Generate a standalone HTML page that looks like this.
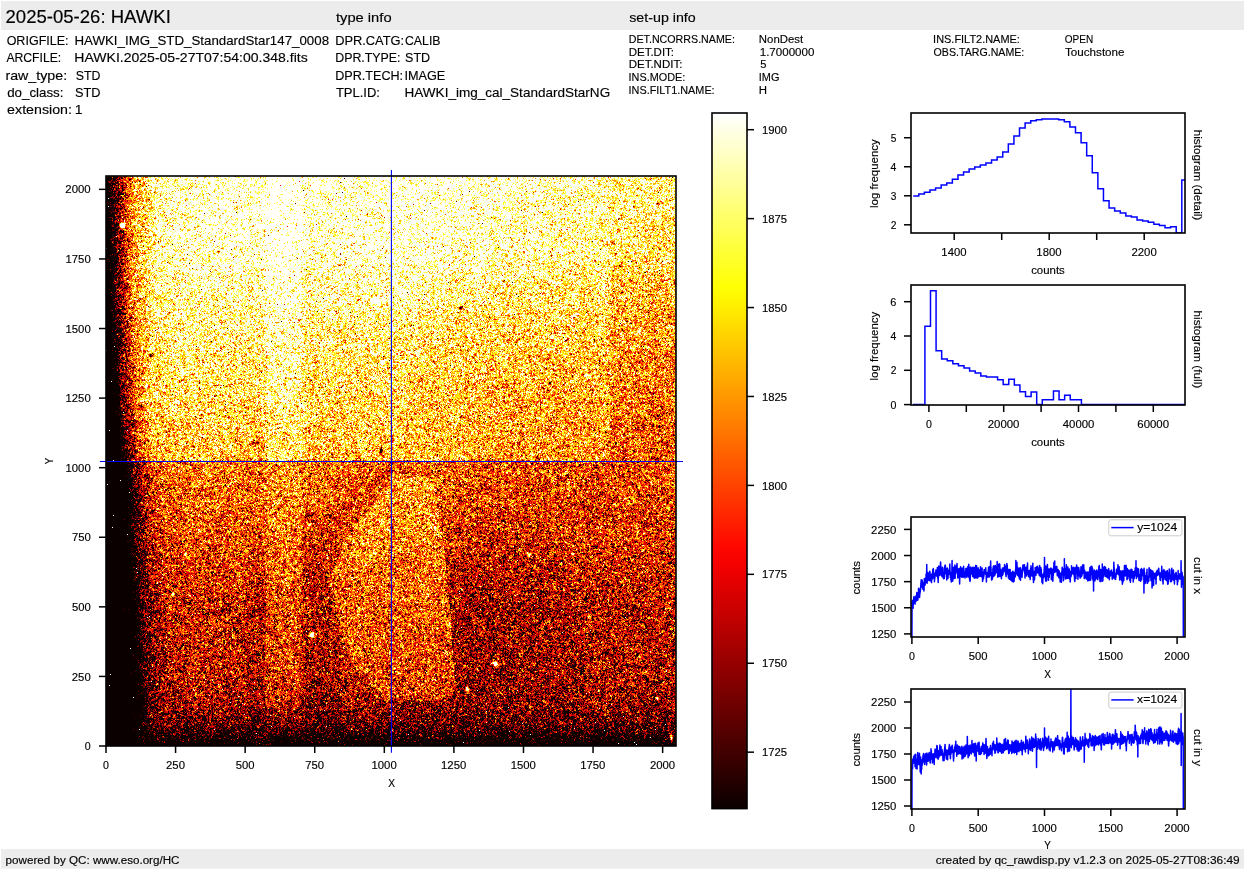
<!DOCTYPE html>
<html><head><meta charset="utf-8">
<style>
html,body{margin:0;padding:0;background:#fff;}
body{width:1245px;height:870px;position:relative;overflow:hidden;}
svg{position:absolute;left:0;top:0;}
text{font-family:"Liberation Sans", sans-serif;fill:#000;stroke:#000;stroke-width:0.15px;}
#img{position:absolute;left:106px;top:176px;width:570px;height:570px;background:linear-gradient(to right,#0b0000 0,#0b0000 16px,rgba(11,0,0,0) 50px),linear-gradient(to top,#0b0000 0,rgba(11,0,0,0) 45px),linear-gradient(to bottom,#fff2b0 0%,#ffe060 25%,#ffb030 50%,#f06018 50%,#c02800 75%,#500800 100%);}
</style></head><body>
<canvas id="img" width="570" height="570"></canvas>
<svg width="1245" height="870" viewBox="0 0 1245 870">
<rect x="1" y="1" width="1243" height="29" fill="#ececec"/>
<line x1="106.00" y1="746" x2="106.00" y2="753" stroke="#000" stroke-width="1.5"/>
<line x1="175.58" y1="746" x2="175.58" y2="753" stroke="#000" stroke-width="1.5"/>
<line x1="245.16" y1="746" x2="245.16" y2="753" stroke="#000" stroke-width="1.5"/>
<line x1="314.74" y1="746" x2="314.74" y2="753" stroke="#000" stroke-width="1.5"/>
<line x1="384.32" y1="746" x2="384.32" y2="753" stroke="#000" stroke-width="1.5"/>
<line x1="453.90" y1="746" x2="453.90" y2="753" stroke="#000" stroke-width="1.5"/>
<line x1="523.48" y1="746" x2="523.48" y2="753" stroke="#000" stroke-width="1.5"/>
<line x1="593.06" y1="746" x2="593.06" y2="753" stroke="#000" stroke-width="1.5"/>
<line x1="662.64" y1="746" x2="662.64" y2="753" stroke="#000" stroke-width="1.5"/>
<line x1="99" y1="746.00" x2="106" y2="746.00" stroke="#000" stroke-width="1.5"/>
<line x1="99" y1="676.42" x2="106" y2="676.42" stroke="#000" stroke-width="1.5"/>
<line x1="99" y1="606.84" x2="106" y2="606.84" stroke="#000" stroke-width="1.5"/>
<line x1="99" y1="537.26" x2="106" y2="537.26" stroke="#000" stroke-width="1.5"/>
<line x1="99" y1="467.68" x2="106" y2="467.68" stroke="#000" stroke-width="1.5"/>
<line x1="99" y1="398.10" x2="106" y2="398.10" stroke="#000" stroke-width="1.5"/>
<line x1="99" y1="328.52" x2="106" y2="328.52" stroke="#000" stroke-width="1.5"/>
<line x1="99" y1="258.94" x2="106" y2="258.94" stroke="#000" stroke-width="1.5"/>
<line x1="99" y1="189.36" x2="106" y2="189.36" stroke="#000" stroke-width="1.5"/>
<line x1="391.4" y1="170" x2="391.4" y2="752.7" stroke="#0000ff" stroke-width="1.1"/>
<line x1="99.9" y1="461.5" x2="683" y2="461.5" stroke="#0000ff" stroke-width="1.1"/>
<rect x="106" y="176" width="570" height="570" fill="none" stroke="#000" stroke-width="1.6"/>
<defs><linearGradient id="cb" x1="0" y1="0" x2="0" y2="1"><stop offset="0.000" stop-color="#ffffff"/><stop offset="0.025" stop-color="#ffffe6"/><stop offset="0.050" stop-color="#ffffcd"/><stop offset="0.075" stop-color="#ffffb4"/><stop offset="0.100" stop-color="#ffff9b"/><stop offset="0.125" stop-color="#ffff81"/><stop offset="0.150" stop-color="#ffff68"/><stop offset="0.175" stop-color="#ffff4f"/><stop offset="0.200" stop-color="#ffff36"/><stop offset="0.225" stop-color="#ffff1d"/><stop offset="0.250" stop-color="#ffff04"/><stop offset="0.275" stop-color="#fff100"/><stop offset="0.300" stop-color="#ffe000"/><stop offset="0.325" stop-color="#ffcf00"/><stop offset="0.350" stop-color="#ffbf00"/><stop offset="0.375" stop-color="#ffae00"/><stop offset="0.400" stop-color="#ff9d00"/><stop offset="0.425" stop-color="#ff8d00"/><stop offset="0.450" stop-color="#ff7c00"/><stop offset="0.475" stop-color="#ff6b00"/><stop offset="0.500" stop-color="#ff5a00"/><stop offset="0.525" stop-color="#ff4a00"/><stop offset="0.550" stop-color="#ff3900"/><stop offset="0.575" stop-color="#ff2800"/><stop offset="0.600" stop-color="#ff1700"/><stop offset="0.625" stop-color="#ff0700"/><stop offset="0.650" stop-color="#f50000"/><stop offset="0.675" stop-color="#e40000"/><stop offset="0.700" stop-color="#d30000"/><stop offset="0.725" stop-color="#c30000"/><stop offset="0.750" stop-color="#b20000"/><stop offset="0.775" stop-color="#a10000"/><stop offset="0.800" stop-color="#900000"/><stop offset="0.825" stop-color="#800000"/><stop offset="0.850" stop-color="#6f0000"/><stop offset="0.875" stop-color="#5e0000"/><stop offset="0.900" stop-color="#4e0000"/><stop offset="0.925" stop-color="#3d0000"/><stop offset="0.950" stop-color="#2c0000"/><stop offset="0.975" stop-color="#1b0000"/><stop offset="1.000" stop-color="#0b0000"/></linearGradient></defs>
<rect x="712" y="113" width="35" height="695.6" fill="url(#cb)"/>
<rect x="712" y="113" width="35" height="695.6" fill="none" stroke="#000" stroke-width="1.6"/>
<line x1="747" y1="129.70" x2="754" y2="129.70" stroke="#000" stroke-width="1.5"/>
<line x1="747" y1="218.62" x2="754" y2="218.62" stroke="#000" stroke-width="1.5"/>
<line x1="747" y1="307.55" x2="754" y2="307.55" stroke="#000" stroke-width="1.5"/>
<line x1="747" y1="396.47" x2="754" y2="396.47" stroke="#000" stroke-width="1.5"/>
<line x1="747" y1="485.40" x2="754" y2="485.40" stroke="#000" stroke-width="1.5"/>
<line x1="747" y1="574.33" x2="754" y2="574.33" stroke="#000" stroke-width="1.5"/>
<line x1="747" y1="663.25" x2="754" y2="663.25" stroke="#000" stroke-width="1.5"/>
<line x1="747" y1="752.17" x2="754" y2="752.17" stroke="#000" stroke-width="1.5"/>
<line x1="954.20" y1="233" x2="954.20" y2="240" stroke="#000" stroke-width="1.5"/>
<line x1="1001.70" y1="233" x2="1001.70" y2="240" stroke="#000" stroke-width="1.5"/>
<line x1="1049.20" y1="233" x2="1049.20" y2="240" stroke="#000" stroke-width="1.5"/>
<line x1="1096.70" y1="233" x2="1096.70" y2="240" stroke="#000" stroke-width="1.5"/>
<line x1="1144.20" y1="233" x2="1144.20" y2="240" stroke="#000" stroke-width="1.5"/>
<line x1="904" y1="224.80" x2="911" y2="224.80" stroke="#000" stroke-width="1.5"/>
<line x1="904" y1="195.78" x2="911" y2="195.78" stroke="#000" stroke-width="1.5"/>
<line x1="904" y1="166.76" x2="911" y2="166.76" stroke="#000" stroke-width="1.5"/>
<line x1="904" y1="137.74" x2="911" y2="137.74" stroke="#000" stroke-width="1.5"/>
<clipPath id="c1"><rect x="911" y="113" width="274" height="120"/></clipPath>
<path d="M913.20,195.90 L913.20,195.90 L918.80,195.90 L918.80,194.05 L924.39,194.05 L924.39,192.20 L929.99,192.20 L929.99,190.00 L935.58,190.00 L935.58,188.00 L941.18,188.00 L941.18,185.00 L946.78,185.00 L946.78,183.00 L952.37,183.00 L952.37,179.25 L957.97,179.25 L957.97,174.90 L963.56,174.90 L963.56,172.10 L969.16,172.10 L969.16,168.90 L974.76,168.90 L974.76,167.00 L980.35,167.00 L980.35,165.00 L985.95,165.00 L985.95,162.90 L991.54,162.90 L991.54,160.00 L997.14,160.00 L997.14,157.00 L1002.74,157.00 L1002.74,152.00 L1008.33,152.00 L1008.33,144.05 L1013.93,144.05 L1013.93,135.90 L1019.52,135.90 L1019.52,128.00 L1025.12,128.00 L1025.12,122.90 L1030.72,122.90 L1030.72,120.80 L1036.31,120.80 L1036.31,119.80 L1041.91,119.80 L1041.91,118.90 L1047.50,118.90 L1047.50,118.90 L1053.10,118.90 L1053.10,118.90 L1058.70,118.90 L1058.70,119.80 L1064.29,119.80 L1064.29,121.80 L1069.89,121.80 L1069.89,127.00 L1075.48,127.00 L1075.48,132.70 L1081.08,132.70 L1081.08,142.80 L1086.68,142.80 L1086.68,155.70 L1092.27,155.70 L1092.27,172.80 L1097.87,172.80 L1097.87,188.70 L1103.46,188.70 L1103.46,200.80 L1109.06,200.80 L1109.06,208.00 L1114.66,208.00 L1114.66,210.90 L1120.25,210.90 L1120.25,212.90 L1125.85,212.90 L1125.85,215.90 L1131.44,215.90 L1131.44,217.00 L1137.04,217.00 L1137.04,219.90 L1142.64,219.90 L1142.64,221.10 L1148.23,221.10 L1148.23,222.20 L1153.83,222.20 L1153.83,224.20 L1159.42,224.20 L1159.42,225.40 L1165.02,225.40 L1165.02,227.80 L1170.62,227.80 L1170.62,226.70 L1176.21,226.70 L1176.21,233.00 L1181.81,233.00 L1181.81,180.00 L1185.00,180.00" fill="none" stroke="#0000ff" stroke-width="1.5" clip-path="url(#c1)"/>
<rect x="911" y="113" width="274" height="120" fill="none" stroke="#000" stroke-width="1.6"/>
<line x1="928.90" y1="405" x2="928.90" y2="412" stroke="#000" stroke-width="1.5"/>
<line x1="966.30" y1="405" x2="966.30" y2="412" stroke="#000" stroke-width="1.5"/>
<line x1="1003.70" y1="405" x2="1003.70" y2="412" stroke="#000" stroke-width="1.5"/>
<line x1="1041.10" y1="405" x2="1041.10" y2="412" stroke="#000" stroke-width="1.5"/>
<line x1="1078.50" y1="405" x2="1078.50" y2="412" stroke="#000" stroke-width="1.5"/>
<line x1="1115.90" y1="405" x2="1115.90" y2="412" stroke="#000" stroke-width="1.5"/>
<line x1="1153.30" y1="405" x2="1153.30" y2="412" stroke="#000" stroke-width="1.5"/>
<line x1="904" y1="404.60" x2="911" y2="404.60" stroke="#000" stroke-width="1.5"/>
<line x1="904" y1="370.30" x2="911" y2="370.30" stroke="#000" stroke-width="1.5"/>
<line x1="904" y1="336.00" x2="911" y2="336.00" stroke="#000" stroke-width="1.5"/>
<line x1="904" y1="301.70" x2="911" y2="301.70" stroke="#000" stroke-width="1.5"/>
<path d="M913,404.6 L924.9,404.6 L924.90,326.20 L930.49,326.20 L930.49,290.80 L936.08,290.80 L936.08,350.70 L941.67,350.70 L941.67,358.95 L947.26,358.95 L947.26,360.80 L952.85,360.80 L952.85,363.80 L958.44,363.80 L958.44,365.80 L964.03,365.80 L964.03,367.90 L969.62,367.90 L969.62,370.90 L975.21,370.90 L975.21,372.90 L980.80,372.90 L980.80,376.00 L986.39,376.00 L986.39,377.10 L991.98,377.10 L991.98,377.10 L997.57,377.10 L997.57,379.70 L1003.16,379.70 L1003.16,384.50 L1008.75,384.50 L1008.75,379.30 L1014.34,379.30 L1014.34,384.90 L1019.93,384.90 L1019.93,391.70 L1025.52,391.70 L1025.52,396.50 L1031.11,396.50 L1031.11,392.10 L1036.70,392.10 L1036.70,404.60 L1042.29,404.60 L1042.29,399.80 L1047.88,399.80 L1047.88,399.80 L1053.47,399.80 L1053.47,390.90 L1059.06,390.90 L1059.06,399.80 L1064.65,399.80 L1064.65,395.30 L1070.24,395.30 L1070.24,399.80 L1075.83,399.80 L1075.83,399.80 L1081.42,399.80 L1081.42,404.6 L1185,404.6" fill="none" stroke="#0000ff" stroke-width="1.5"/>
<rect x="911" y="285" width="274" height="120" fill="none" stroke="#000" stroke-width="1.6"/>
<clipPath id="c3"><rect x="911" y="517" width="274" height="120"/></clipPath>
<clipPath id="c4"><rect x="911" y="689" width="274" height="120"/></clipPath>
<path d="M911.90,639.0 L912.03,601.1 L912.17,601.1 L912.30,604.3 L912.43,605.0 L912.56,604.7 L912.70,600.3 L912.83,602.8 L912.96,602.5 L913.09,608.3 L913.23,600.0 L913.36,604.4 L913.49,600.7 L913.62,600.7 L913.76,598.8 L913.89,596.9 L914.02,596.4 L914.15,599.6 L914.29,597.7 L914.42,598.8 L914.55,602.7 L914.68,602.0 L914.82,598.0 L914.95,602.4 L915.08,604.1 L915.22,600.2 L915.35,600.9 L915.48,601.0 L915.61,601.6 L915.75,598.1 L915.88,596.0 L916.01,598.4 L916.14,601.3 L916.28,599.8 L916.41,597.0 L916.54,597.8 L916.67,594.3 L916.81,592.6 L916.94,593.8 L917.07,597.5 L917.20,597.2 L917.34,596.8 L917.47,594.1 L917.60,600.3 L917.73,599.9 L917.87,597.4 L918.00,599.2 L918.13,592.9 L918.26,592.4 L918.40,594.3 L918.53,588.3 L918.66,590.8 L918.80,591.2 L918.93,590.3 L919.06,589.3 L919.19,594.7 L919.33,591.4 L919.46,591.2 L919.59,597.4 L919.72,592.3 L919.86,594.9 L919.99,589.1 L920.12,592.3 L920.25,591.8 L920.39,588.2 L920.52,590.3 L920.65,586.6 L920.78,586.2 L920.92,582.5 L921.05,584.5 L921.18,579.8 L921.31,581.8 L921.45,584.9 L921.58,584.3 L921.71,582.7 L921.85,581.0 L921.98,587.3 L922.11,580.0 L922.24,581.1 L922.38,583.3 L922.51,587.6 L922.64,583.4 L922.77,588.9 L922.91,584.7 L923.04,582.7 L923.17,589.5 L923.30,586.0 L923.44,589.7 L923.57,587.5 L923.70,583.2 L923.83,582.2 L923.97,591.0 L924.10,587.1 L924.23,583.2 L924.36,578.4 L924.50,580.6 L924.63,583.4 L924.76,583.0 L924.89,580.7 L925.03,583.3 L925.16,585.0 L925.29,581.8 L925.43,578.3 L925.56,580.2 L925.69,581.8 L925.82,582.4 L925.96,580.1 L926.09,573.9 L926.22,577.5 L926.35,579.3 L926.49,573.7 L926.62,575.6 L926.75,564.5 L926.88,579.1 L927.02,580.3 L927.15,583.2 L927.28,576.4 L927.41,572.2 L927.55,580.6 L927.68,579.5 L927.81,574.5 L927.94,577.4 L928.08,575.5 L928.21,576.5 L928.34,575.9 L928.48,573.1 L928.61,578.2 L928.74,575.9 L928.87,575.1 L929.01,575.0 L929.14,580.8 L929.27,578.7 L929.40,572.8 L929.54,578.2 L929.67,571.2 L929.80,574.1 L929.93,571.5 L930.07,574.9 L930.20,574.2 L930.33,580.4 L930.46,580.8 L930.60,579.1 L930.73,576.2 L930.86,578.1 L930.99,575.9 L931.13,576.5 L931.26,574.2 L931.39,579.3 L931.52,582.6 L931.66,578.6 L931.79,576.1 L931.92,576.1 L932.06,574.6 L932.19,579.1 L932.32,578.9 L932.45,572.8 L932.59,574.4 L932.72,571.8 L932.85,569.4 L932.98,576.8 L933.12,573.2 L933.25,573.4 L933.38,568.4 L933.51,574.0 L933.65,574.9 L933.78,572.5 L933.91,578.4 L934.04,576.9 L934.18,577.1 L934.31,575.8 L934.44,581.8 L934.57,579.7 L934.71,577.7 L934.84,578.4 L934.97,576.2 L935.11,573.4 L935.24,574.2 L935.37,573.1 L935.50,573.3 L935.64,572.4 L935.77,572.7 L935.90,570.1 L936.03,575.6 L936.17,570.7 L936.30,575.8 L936.43,575.0 L936.56,574.2 L936.70,575.4 L936.83,574.1 L936.96,574.0 L937.09,576.5 L937.23,574.9 L937.36,567.5 L937.49,569.9 L937.62,574.0 L937.76,574.8 L937.89,579.2 L938.02,571.9 L938.15,582.4 L938.29,577.7 L938.42,573.5 L938.55,577.2 L938.69,570.1 L938.82,565.9 L938.95,567.1 L939.08,568.1 L939.22,569.0 L939.35,572.4 L939.48,572.9 L939.61,573.9 L939.75,572.4 L939.88,575.2 L940.01,572.3 L940.14,574.5 L940.28,571.7 L940.41,566.9 L940.54,561.9 L940.67,562.9 L940.81,568.6 L940.94,566.5 L941.07,570.9 L941.20,570.8 L941.34,570.5 L941.47,575.6 L941.60,571.7 L941.74,574.4 L941.87,574.8 L942.00,576.8 L942.13,576.0 L942.27,575.7 L942.40,572.5 L942.53,567.3 L942.66,571.1 L942.80,568.5 L942.93,573.4 L943.06,576.8 L943.19,574.5 L943.33,575.8 L943.46,578.8 L943.59,572.9 L943.72,574.1 L943.86,577.6 L943.99,578.3 L944.12,577.9 L944.25,578.5 L944.39,574.6 L944.52,569.1 L944.65,566.9 L944.78,572.9 L944.92,565.8 L945.05,565.2 L945.18,567.0 L945.32,565.3 L945.45,567.0 L945.58,568.1 L945.71,568.1 L945.85,569.1 L945.98,574.0 L946.11,572.8 L946.24,571.3 L946.38,573.8 L946.51,577.0 L946.64,571.7 L946.77,579.9 L946.91,574.5 L947.04,572.9 L947.17,576.6 L947.30,567.9 L947.44,570.6 L947.57,573.2 L947.70,570.6 L947.83,575.6 L947.97,578.4 L948.10,575.6 L948.23,572.7 L948.37,573.5 L948.50,571.4 L948.63,572.6 L948.76,573.2 L948.90,574.4 L949.03,569.9 L949.16,573.3 L949.29,572.5 L949.43,568.6 L949.56,573.0 L949.69,570.2 L949.82,564.0 L949.96,568.8 L950.09,573.6 L950.22,573.1 L950.35,577.6 L950.49,575.9 L950.62,576.3 L950.75,573.5 L950.88,579.8 L951.02,572.4 L951.15,578.8 L951.28,582.0 L951.41,576.0 L951.55,573.6 L951.68,572.1 L951.81,575.0 L951.95,569.0 L952.08,560.4 L952.21,574.4 L952.34,571.8 L952.48,574.0 L952.61,574.3 L952.74,581.2 L952.87,577.4 L953.01,570.4 L953.14,570.2 L953.27,567.3 L953.40,573.9 L953.54,574.7 L953.67,568.4 L953.80,578.6 L953.93,577.2 L954.07,573.4 L954.20,571.5 L954.33,570.1 L954.46,571.4 L954.60,573.8 L954.73,569.8 L954.86,564.9 L955.00,566.5 L955.13,578.2 L955.26,571.1 L955.39,574.4 L955.53,571.0 L955.66,574.0 L955.79,567.6 L955.92,570.0 L956.06,572.0 L956.19,572.0 L956.32,572.5 L956.45,569.2 L956.59,565.7 L956.72,566.8 L956.85,570.9 L956.98,563.4 L957.12,567.7 L957.25,569.5 L957.38,571.3 L957.51,570.2 L957.65,572.3 L957.78,577.9 L957.91,569.7 L958.04,568.9 L958.18,570.4 L958.31,569.2 L958.44,570.3 L958.58,569.7 L958.71,577.6 L958.84,572.8 L958.97,569.3 L959.11,569.6 L959.24,568.4 L959.37,572.1 L959.50,578.0 L959.64,584.1 L959.77,577.3 L959.90,576.1 L960.03,571.3 L960.17,572.9 L960.30,570.3 L960.43,572.9 L960.56,566.8 L960.70,571.1 L960.83,571.4 L960.96,570.5 L961.09,573.9 L961.23,574.4 L961.36,576.7 L961.49,573.1 L961.62,573.4 L961.76,577.3 L961.89,576.5 L962.02,568.0 L962.16,572.2 L962.29,568.4 L962.42,569.1 L962.55,571.4 L962.69,570.5 L962.82,570.2 L962.95,572.3 L963.08,571.7 L963.22,577.2 L963.35,576.7 L963.48,572.7 L963.61,566.2 L963.75,575.6 L963.88,568.6 L964.01,571.9 L964.14,571.5 L964.28,575.0 L964.41,575.8 L964.54,575.2 L964.67,576.5 L964.81,576.6 L964.94,576.2 L965.07,578.1 L965.21,573.3 L965.34,575.2 L965.47,576.2 L965.60,574.6 L965.74,571.6 L965.87,568.5 L966.00,571.8 L966.13,571.9 L966.27,568.2 L966.40,570.5 L966.53,571.0 L966.66,573.2 L966.80,577.2 L966.93,575.9 L967.06,576.0 L967.19,571.2 L967.33,572.2 L967.46,573.9 L967.59,568.3 L967.72,571.2 L967.86,566.6 L967.99,570.8 L968.12,573.9 L968.25,571.6 L968.39,572.9 L968.52,576.9 L968.65,572.3 L968.79,564.3 L968.92,575.9 L969.05,567.3 L969.18,573.7 L969.32,572.7 L969.45,575.6 L969.58,579.8 L969.71,574.4 L969.85,579.9 L969.98,581.4 L970.11,579.2 L970.24,580.4 L970.38,574.2 L970.51,567.0 L970.64,574.0 L970.77,571.3 L970.91,569.7 L971.04,569.4 L971.17,568.7 L971.30,573.1 L971.44,574.0 L971.57,570.9 L971.70,571.8 L971.84,573.7 L971.97,567.8 L972.10,568.0 L972.23,569.9 L972.37,570.4 L972.50,569.6 L972.63,576.5 L972.76,570.8 L972.90,575.6 L973.03,567.1 L973.16,569.3 L973.29,570.0 L973.43,571.7 L973.56,576.9 L973.69,568.9 L973.82,568.6 L973.96,576.4 L974.09,573.9 L974.22,572.2 L974.35,578.3 L974.49,569.8 L974.62,567.4 L974.75,569.8 L974.88,573.3 L975.02,570.5 L975.15,577.4 L975.28,571.5 L975.42,568.2 L975.55,573.2 L975.68,565.4 L975.81,572.0 L975.95,578.1 L976.08,571.4 L976.21,571.0 L976.34,568.8 L976.48,572.3 L976.61,565.7 L976.74,573.2 L976.87,573.8 L977.01,575.5 L977.14,577.9 L977.27,574.0 L977.40,575.5 L977.54,576.5 L977.67,578.1 L977.80,568.8 L977.93,567.9 L978.07,570.4 L978.20,567.9 L978.33,571.8 L978.47,571.7 L978.60,574.3 L978.73,571.6 L978.86,573.8 L979.00,576.8 L979.13,572.8 L979.26,571.5 L979.39,572.4 L979.53,569.9 L979.66,572.0 L979.79,575.0 L979.92,573.3 L980.06,575.1 L980.19,571.9 L980.32,576.2 L980.45,566.8 L980.59,572.5 L980.72,571.4 L980.85,574.2 L980.98,570.9 L981.12,568.3 L981.25,568.3 L981.38,569.2 L981.51,576.7 L981.65,574.6 L981.78,573.8 L981.91,573.5 L982.05,568.1 L982.18,572.1 L982.31,573.1 L982.44,573.9 L982.58,581.5 L982.71,580.7 L982.84,579.4 L982.97,575.8 L983.11,576.6 L983.24,575.1 L983.37,574.7 L983.50,578.6 L983.64,574.5 L983.77,571.5 L983.90,576.1 L984.03,573.0 L984.17,569.4 L984.30,572.3 L984.43,570.3 L984.56,571.5 L984.70,572.4 L984.83,569.7 L984.96,571.5 L985.10,570.9 L985.23,569.4 L985.36,573.4 L985.49,574.1 L985.63,571.7 L985.76,567.8 L985.89,571.4 L986.02,572.0 L986.16,571.8 L986.29,578.1 L986.42,581.9 L986.55,574.1 L986.69,576.3 L986.82,576.7 L986.95,576.9 L987.08,575.7 L987.22,572.7 L987.35,576.0 L987.48,575.4 L987.61,572.3 L987.75,577.0 L987.88,572.6 L988.01,573.5 L988.14,575.5 L988.28,570.0 L988.41,571.5 L988.54,567.3 L988.68,574.4 L988.81,567.6 L988.94,570.1 L989.07,577.2 L989.21,570.6 L989.34,566.7 L989.47,570.0 L989.60,568.8 L989.74,576.0 L989.87,570.6 L990.00,574.8 L990.13,568.4 L990.27,572.5 L990.40,574.1 L990.53,565.2 L990.66,561.1 L990.80,571.8 L990.93,567.0 L991.06,570.1 L991.19,575.3 L991.33,575.8 L991.46,572.6 L991.59,580.1 L991.73,577.2 L991.86,576.8 L991.99,579.8 L992.12,576.1 L992.26,575.5 L992.39,579.1 L992.52,573.5 L992.65,576.9 L992.79,573.8 L992.92,568.5 L993.05,572.6 L993.18,569.2 L993.32,566.8 L993.45,566.1 L993.58,568.5 L993.71,574.7 L993.85,576.6 L993.98,566.0 L994.11,575.5 L994.24,570.8 L994.38,574.0 L994.51,570.1 L994.64,574.2 L994.77,565.9 L994.91,575.1 L995.04,573.6 L995.17,571.8 L995.31,565.4 L995.44,573.5 L995.57,570.9 L995.70,569.2 L995.84,570.1 L995.97,569.1 L996.10,571.1 L996.23,567.0 L996.37,571.4 L996.50,568.3 L996.63,571.7 L996.76,572.5 L996.90,572.6 L997.03,567.2 L997.16,561.4 L997.29,570.1 L997.43,569.2 L997.56,565.9 L997.69,576.4 L997.82,577.2 L997.96,575.5 L998.09,573.0 L998.22,564.6 L998.36,571.6 L998.49,567.6 L998.62,570.7 L998.75,576.2 L998.89,576.5 L999.02,566.6 L999.15,571.1 L999.28,574.7 L999.42,563.7 L999.55,571.7 L999.68,565.1 L999.81,564.5 L999.95,570.5 L1000.08,576.2 L1000.21,570.0 L1000.34,575.8 L1000.48,570.5 L1000.61,575.1 L1000.74,569.5 L1000.87,573.4 L1001.01,574.6 L1001.14,575.6 L1001.27,573.5 L1001.40,578.8 L1001.54,573.9 L1001.67,573.5 L1001.80,571.1 L1001.94,575.4 L1002.07,570.0 L1002.20,572.9 L1002.33,575.6 L1002.47,567.9 L1002.60,569.2 L1002.73,571.0 L1002.86,574.8 L1003.00,572.9 L1003.13,573.2 L1003.26,571.9 L1003.39,568.0 L1003.53,570.3 L1003.66,569.5 L1003.79,570.3 L1003.92,570.7 L1004.06,568.0 L1004.19,567.6 L1004.32,570.3 L1004.45,570.0 L1004.59,564.4 L1004.72,569.6 L1004.85,571.4 L1004.99,565.6 L1005.12,569.8 L1005.25,572.2 L1005.38,566.3 L1005.52,572.5 L1005.65,574.1 L1005.78,572.5 L1005.91,573.9 L1006.05,576.6 L1006.18,575.2 L1006.31,572.4 L1006.44,568.1 L1006.58,573.2 L1006.71,571.8 L1006.84,563.6 L1006.97,572.3 L1007.11,565.8 L1007.24,565.0 L1007.37,570.1 L1007.50,573.5 L1007.64,569.8 L1007.77,569.6 L1007.90,571.7 L1008.03,575.0 L1008.17,574.2 L1008.30,571.2 L1008.43,578.1 L1008.57,569.4 L1008.70,572.7 L1008.83,573.6 L1008.96,574.7 L1009.10,569.5 L1009.23,571.2 L1009.36,579.2 L1009.49,573.4 L1009.63,570.5 L1009.76,570.6 L1009.89,572.4 L1010.02,574.8 L1010.16,569.5 L1010.29,579.4 L1010.42,576.2 L1010.55,577.4 L1010.69,578.1 L1010.82,575.8 L1010.95,576.6 L1011.08,580.4 L1011.22,579.6 L1011.35,576.6 L1011.48,572.8 L1011.62,574.1 L1011.75,573.4 L1011.88,578.7 L1012.01,577.4 L1012.15,574.3 L1012.28,581.6 L1012.41,571.4 L1012.54,576.7 L1012.68,577.1 L1012.81,571.3 L1012.94,573.2 L1013.07,577.3 L1013.21,578.3 L1013.34,581.9 L1013.47,578.9 L1013.60,575.0 L1013.74,578.8 L1013.87,572.2 L1014.00,577.6 L1014.13,581.2 L1014.27,573.2 L1014.40,574.0 L1014.53,572.8 L1014.66,574.2 L1014.80,575.4 L1014.93,577.1 L1015.06,576.2 L1015.20,574.3 L1015.33,576.7 L1015.46,569.7 L1015.59,571.4 L1015.73,574.9 L1015.86,560.4 L1015.99,569.1 L1016.12,572.1 L1016.26,569.0 L1016.39,565.4 L1016.52,572.8 L1016.65,574.1 L1016.79,571.0 L1016.92,562.3 L1017.05,568.7 L1017.18,572.4 L1017.32,570.4 L1017.45,567.1 L1017.58,575.3 L1017.71,574.3 L1017.85,575.5 L1017.98,568.3 L1018.11,571.1 L1018.25,571.9 L1018.38,572.9 L1018.51,571.5 L1018.64,576.5 L1018.78,568.2 L1018.91,573.9 L1019.04,576.5 L1019.17,574.8 L1019.31,577.7 L1019.44,578.9 L1019.57,576.7 L1019.70,574.3 L1019.84,578.2 L1019.97,570.5 L1020.10,570.0 L1020.23,567.4 L1020.37,574.9 L1020.50,580.2 L1020.63,574.9 L1020.76,568.1 L1020.90,573.3 L1021.03,574.6 L1021.16,569.8 L1021.29,571.3 L1021.43,571.7 L1021.56,575.3 L1021.69,574.5 L1021.83,573.6 L1021.96,575.0 L1022.09,577.3 L1022.22,573.2 L1022.36,571.0 L1022.49,572.6 L1022.62,571.6 L1022.75,569.2 L1022.89,565.1 L1023.02,570.1 L1023.15,566.6 L1023.28,565.5 L1023.42,570.1 L1023.55,566.5 L1023.68,566.0 L1023.81,565.0 L1023.95,567.4 L1024.08,567.8 L1024.21,568.3 L1024.34,569.4 L1024.48,564.8 L1024.61,568.5 L1024.74,573.7 L1024.88,571.1 L1025.01,578.1 L1025.14,574.2 L1025.27,572.9 L1025.41,574.3 L1025.54,569.4 L1025.67,573.5 L1025.80,569.5 L1025.94,569.4 L1026.07,567.3 L1026.20,572.1 L1026.33,572.5 L1026.47,574.3 L1026.60,576.0 L1026.73,568.4 L1026.86,571.0 L1027.00,567.5 L1027.13,567.9 L1027.26,565.5 L1027.39,568.4 L1027.53,562.9 L1027.66,572.1 L1027.79,571.5 L1027.92,572.6 L1028.06,574.4 L1028.19,573.6 L1028.32,574.1 L1028.46,571.1 L1028.59,576.4 L1028.72,570.7 L1028.85,575.1 L1028.99,571.6 L1029.12,576.9 L1029.25,574.6 L1029.38,573.1 L1029.52,570.5 L1029.65,572.8 L1029.78,572.4 L1029.91,571.6 L1030.05,576.0 L1030.18,579.6 L1030.31,574.0 L1030.44,573.8 L1030.58,568.5 L1030.71,568.5 L1030.84,576.1 L1030.97,565.8 L1031.11,569.0 L1031.24,572.1 L1031.37,571.7 L1031.51,567.5 L1031.64,574.6 L1031.77,573.3 L1031.90,571.6 L1032.04,576.1 L1032.17,570.7 L1032.30,571.4 L1032.43,569.9 L1032.57,569.2 L1032.70,571.5 L1032.83,563.3 L1032.96,571.7 L1033.10,569.9 L1033.23,580.0 L1033.36,574.8 L1033.49,582.4 L1033.63,578.4 L1033.76,577.6 L1033.89,580.6 L1034.02,579.5 L1034.16,574.1 L1034.29,571.8 L1034.42,579.8 L1034.56,579.5 L1034.69,574.7 L1034.82,572.5 L1034.95,574.3 L1035.09,571.5 L1035.22,567.4 L1035.35,567.9 L1035.48,569.0 L1035.62,572.8 L1035.75,572.0 L1035.88,572.2 L1036.01,575.2 L1036.15,567.5 L1036.28,571.3 L1036.41,572.3 L1036.54,567.8 L1036.68,569.1 L1036.81,568.9 L1036.94,566.6 L1037.07,566.9 L1037.21,570.1 L1037.34,567.4 L1037.47,566.3 L1037.60,573.0 L1037.74,571.2 L1037.87,573.0 L1038.00,570.9 L1038.14,570.3 L1038.27,568.1 L1038.40,570.3 L1038.53,568.3 L1038.67,569.3 L1038.80,571.3 L1038.93,570.4 L1039.06,573.3 L1039.20,575.3 L1039.33,569.9 L1039.46,570.6 L1039.59,565.4 L1039.73,570.3 L1039.86,566.7 L1039.99,571.0 L1040.12,572.5 L1040.26,576.8 L1040.39,567.6 L1040.52,573.5 L1040.65,571.0 L1040.79,567.4 L1040.92,570.6 L1041.05,569.3 L1041.18,573.5 L1041.32,569.2 L1041.45,575.0 L1041.58,574.3 L1041.72,575.5 L1041.85,580.1 L1041.98,582.5 L1042.11,580.1 L1042.25,574.6 L1042.38,575.2 L1042.51,575.2 L1042.64,582.4 L1042.78,583.7 L1042.91,576.8 L1043.04,575.8 L1043.17,577.9 L1043.31,574.0 L1043.44,574.7 L1043.57,576.9 L1043.70,577.8 L1043.84,572.8 L1043.97,573.1 L1044.10,573.3 L1044.23,567.3 L1044.37,573.0 L1044.50,557.6 L1044.63,576.2 L1044.77,574.0 L1044.90,573.1 L1045.03,573.6 L1045.16,575.4 L1045.30,573.4 L1045.43,573.8 L1045.56,578.7 L1045.69,581.1 L1045.83,566.0 L1045.96,570.5 L1046.09,575.2 L1046.22,579.5 L1046.36,577.7 L1046.49,570.5 L1046.62,581.1 L1046.75,574.8 L1046.89,571.8 L1047.02,576.6 L1047.15,572.1 L1047.28,572.7 L1047.42,564.6 L1047.55,571.0 L1047.68,571.4 L1047.82,568.7 L1047.95,568.9 L1048.08,572.9 L1048.21,572.4 L1048.35,576.0 L1048.48,580.3 L1048.61,568.9 L1048.74,570.0 L1048.88,569.6 L1049.01,574.9 L1049.14,577.3 L1049.27,576.3 L1049.41,572.8 L1049.54,570.9 L1049.67,569.0 L1049.80,572.9 L1049.94,569.5 L1050.07,570.8 L1050.20,570.8 L1050.33,572.7 L1050.47,573.4 L1050.60,568.4 L1050.73,568.8 L1050.86,567.9 L1051.00,571.1 L1051.13,569.1 L1051.26,573.7 L1051.40,579.8 L1051.53,572.0 L1051.66,573.4 L1051.79,568.9 L1051.93,571.9 L1052.06,570.2 L1052.19,569.8 L1052.32,572.7 L1052.46,576.8 L1052.59,578.8 L1052.72,569.6 L1052.85,581.3 L1052.99,576.7 L1053.12,573.9 L1053.25,576.0 L1053.38,573.8 L1053.52,571.8 L1053.65,567.4 L1053.78,569.0 L1053.91,562.5 L1054.05,572.6 L1054.18,567.7 L1054.31,569.9 L1054.44,567.9 L1054.58,563.7 L1054.71,561.0 L1054.84,569.7 L1054.98,572.2 L1055.11,570.2 L1055.24,571.6 L1055.37,568.5 L1055.51,569.5 L1055.64,569.3 L1055.77,568.9 L1055.90,567.1 L1056.04,567.9 L1056.17,569.9 L1056.30,566.5 L1056.43,569.1 L1056.57,570.4 L1056.70,571.7 L1056.83,566.6 L1056.96,572.0 L1057.10,571.4 L1057.23,574.7 L1057.36,575.8 L1057.49,574.6 L1057.63,571.0 L1057.76,572.0 L1057.89,572.5 L1058.03,569.4 L1058.16,569.6 L1058.29,572.6 L1058.42,572.9 L1058.56,573.9 L1058.69,572.1 L1058.82,577.7 L1058.95,573.1 L1059.09,570.7 L1059.22,572.2 L1059.35,574.0 L1059.48,572.5 L1059.62,576.2 L1059.75,574.5 L1059.88,573.8 L1060.01,577.7 L1060.15,582.1 L1060.28,573.4 L1060.41,576.4 L1060.54,575.1 L1060.68,576.0 L1060.81,578.5 L1060.94,576.6 L1061.08,574.8 L1061.21,572.9 L1061.34,575.6 L1061.47,582.3 L1061.61,574.7 L1061.74,572.9 L1061.87,571.3 L1062.00,571.1 L1062.14,567.3 L1062.27,569.3 L1062.40,569.3 L1062.53,568.8 L1062.67,575.0 L1062.80,568.9 L1062.93,571.1 L1063.06,574.6 L1063.20,574.8 L1063.33,578.0 L1063.46,580.8 L1063.59,578.7 L1063.73,577.3 L1063.86,572.7 L1063.99,570.6 L1064.12,568.1 L1064.26,573.7 L1064.39,558.7 L1064.52,573.6 L1064.66,571.4 L1064.79,568.3 L1064.92,571.1 L1065.05,573.8 L1065.19,575.6 L1065.32,571.6 L1065.45,578.9 L1065.58,573.5 L1065.72,578.3 L1065.85,574.6 L1065.98,572.2 L1066.11,572.3 L1066.25,568.3 L1066.38,564.8 L1066.51,574.1 L1066.64,570.1 L1066.78,572.6 L1066.91,578.5 L1067.04,571.9 L1067.17,573.7 L1067.31,571.0 L1067.44,577.5 L1067.57,569.9 L1067.70,578.2 L1067.84,567.1 L1067.97,570.7 L1068.10,570.2 L1068.24,568.8 L1068.37,569.1 L1068.50,571.2 L1068.63,569.6 L1068.77,574.4 L1068.90,577.2 L1069.03,578.6 L1069.16,572.4 L1069.30,569.0 L1069.43,573.9 L1069.56,573.5 L1069.69,575.8 L1069.83,576.9 L1069.96,579.9 L1070.09,576.5 L1070.22,582.1 L1070.36,572.2 L1070.49,578.0 L1070.62,572.2 L1070.75,571.6 L1070.89,571.3 L1071.02,576.4 L1071.15,576.0 L1071.29,573.3 L1071.42,575.4 L1071.55,565.7 L1071.68,570.4 L1071.82,569.8 L1071.95,568.3 L1072.08,570.2 L1072.21,573.6 L1072.35,570.1 L1072.48,568.2 L1072.61,573.3 L1072.74,568.0 L1072.88,573.1 L1073.01,567.7 L1073.14,568.7 L1073.27,569.0 L1073.41,571.5 L1073.54,574.5 L1073.67,567.3 L1073.80,572.0 L1073.94,569.6 L1074.07,567.7 L1074.20,570.2 L1074.34,576.9 L1074.47,575.4 L1074.60,580.8 L1074.73,580.6 L1074.87,581.6 L1075.00,573.6 L1075.13,573.5 L1075.26,578.0 L1075.40,572.2 L1075.53,567.6 L1075.66,569.3 L1075.79,577.5 L1075.93,578.5 L1076.06,573.2 L1076.19,571.2 L1076.32,573.8 L1076.46,573.5 L1076.59,564.9 L1076.72,566.9 L1076.85,572.4 L1076.99,568.6 L1077.12,567.1 L1077.25,569.0 L1077.38,568.5 L1077.52,567.3 L1077.65,572.2 L1077.78,575.5 L1077.92,579.2 L1078.05,573.9 L1078.18,572.7 L1078.31,567.6 L1078.45,572.8 L1078.58,572.2 L1078.71,568.6 L1078.84,567.8 L1078.98,571.7 L1079.11,569.7 L1079.24,575.5 L1079.37,571.7 L1079.51,575.3 L1079.64,576.0 L1079.77,576.0 L1079.90,573.4 L1080.04,578.1 L1080.17,576.3 L1080.30,575.3 L1080.43,575.4 L1080.57,577.7 L1080.70,574.7 L1080.83,570.7 L1080.96,566.8 L1081.10,570.4 L1081.23,570.1 L1081.36,571.8 L1081.50,575.6 L1081.63,576.4 L1081.76,572.3 L1081.89,575.8 L1082.03,567.0 L1082.16,571.2 L1082.29,573.5 L1082.42,573.8 L1082.56,565.1 L1082.69,571.1 L1082.82,570.4 L1082.95,569.3 L1083.09,568.1 L1083.22,569.7 L1083.35,567.8 L1083.48,573.3 L1083.62,570.4 L1083.75,564.8 L1083.88,570.7 L1084.01,570.0 L1084.15,573.7 L1084.28,578.6 L1084.41,574.7 L1084.55,569.9 L1084.68,573.4 L1084.81,577.6 L1084.94,575.9 L1085.08,577.7 L1085.21,574.8 L1085.34,575.5 L1085.47,577.2 L1085.61,572.5 L1085.74,575.7 L1085.87,572.0 L1086.00,576.7 L1086.14,576.4 L1086.27,575.9 L1086.40,579.1 L1086.53,575.9 L1086.67,575.6 L1086.80,578.3 L1086.93,572.5 L1087.06,572.9 L1087.20,576.7 L1087.33,572.0 L1087.46,572.6 L1087.60,573.5 L1087.73,577.0 L1087.86,581.0 L1087.99,574.1 L1088.13,574.2 L1088.26,574.0 L1088.39,576.3 L1088.52,573.0 L1088.66,573.1 L1088.79,574.0 L1088.92,580.0 L1089.05,571.6 L1089.19,580.6 L1089.32,576.5 L1089.45,576.5 L1089.58,573.3 L1089.72,576.2 L1089.85,567.8 L1089.98,570.5 L1090.11,570.4 L1090.25,568.7 L1090.38,574.9 L1090.51,580.2 L1090.64,570.1 L1090.78,567.2 L1090.91,566.4 L1091.04,572.1 L1091.18,569.7 L1091.31,567.9 L1091.44,574.5 L1091.57,573.0 L1091.71,571.5 L1091.84,566.2 L1091.97,575.0 L1092.10,567.6 L1092.24,573.8 L1092.37,578.9 L1092.50,568.2 L1092.63,575.2 L1092.77,574.0 L1092.90,571.6 L1093.03,578.4 L1093.16,580.6 L1093.30,575.4 L1093.43,577.1 L1093.56,591.1 L1093.69,575.6 L1093.83,574.6 L1093.96,571.2 L1094.09,571.0 L1094.22,570.0 L1094.36,570.0 L1094.49,572.7 L1094.62,572.3 L1094.76,574.7 L1094.89,581.0 L1095.02,572.3 L1095.15,574.0 L1095.29,571.6 L1095.42,573.8 L1095.55,579.5 L1095.68,574.5 L1095.82,572.4 L1095.95,577.4 L1096.08,575.4 L1096.21,575.0 L1096.35,570.5 L1096.48,571.9 L1096.61,571.8 L1096.74,570.0 L1096.88,574.5 L1097.01,575.0 L1097.14,578.7 L1097.27,575.8 L1097.41,575.8 L1097.54,576.0 L1097.67,577.3 L1097.81,579.7 L1097.94,577.0 L1098.07,576.8 L1098.20,572.4 L1098.34,571.0 L1098.47,573.7 L1098.60,569.4 L1098.73,570.3 L1098.87,566.6 L1099.00,567.8 L1099.13,573.0 L1099.26,565.4 L1099.40,570.5 L1099.53,575.1 L1099.66,578.8 L1099.79,576.9 L1099.93,581.6 L1100.06,576.8 L1100.19,574.6 L1100.32,569.9 L1100.46,572.1 L1100.59,569.4 L1100.72,570.9 L1100.86,576.3 L1100.99,581.6 L1101.12,575.8 L1101.25,574.0 L1101.39,570.9 L1101.52,571.2 L1101.65,571.7 L1101.78,569.6 L1101.92,576.3 L1102.05,570.9 L1102.18,573.1 L1102.31,564.1 L1102.45,571.9 L1102.58,581.3 L1102.71,572.3 L1102.84,580.8 L1102.98,575.6 L1103.11,577.9 L1103.24,576.0 L1103.37,574.8 L1103.51,572.8 L1103.64,574.4 L1103.77,567.3 L1103.90,568.3 L1104.04,569.7 L1104.17,568.5 L1104.30,573.9 L1104.44,566.6 L1104.57,572.0 L1104.70,571.2 L1104.83,571.6 L1104.97,575.6 L1105.10,576.3 L1105.23,572.0 L1105.36,570.1 L1105.50,567.3 L1105.63,568.1 L1105.76,574.4 L1105.89,572.0 L1106.03,573.8 L1106.16,572.2 L1106.29,574.3 L1106.42,577.0 L1106.56,569.8 L1106.69,570.6 L1106.82,569.7 L1106.95,574.5 L1107.09,570.2 L1107.22,574.7 L1107.35,573.2 L1107.48,570.2 L1107.62,573.5 L1107.75,578.1 L1107.88,577.7 L1108.02,577.7 L1108.15,573.2 L1108.28,572.2 L1108.41,572.3 L1108.55,571.3 L1108.68,568.6 L1108.81,571.0 L1108.94,570.2 L1109.08,574.2 L1109.21,573.0 L1109.34,579.8 L1109.47,575.5 L1109.61,573.6 L1109.74,575.4 L1109.87,573.9 L1110.00,571.4 L1110.14,575.9 L1110.27,575.5 L1110.40,575.8 L1110.53,572.5 L1110.67,573.9 L1110.80,571.2 L1110.93,570.9 L1111.07,573.2 L1111.20,572.4 L1111.33,574.3 L1111.46,574.4 L1111.60,570.1 L1111.73,574.5 L1111.86,571.4 L1111.99,575.1 L1112.13,577.4 L1112.26,579.2 L1112.39,578.9 L1112.52,578.1 L1112.66,578.3 L1112.79,577.4 L1112.92,572.8 L1113.05,578.2 L1113.19,577.6 L1113.32,577.9 L1113.45,575.4 L1113.58,577.8 L1113.72,570.4 L1113.85,562.2 L1113.98,567.3 L1114.12,567.2 L1114.25,569.6 L1114.38,571.1 L1114.51,577.7 L1114.65,576.1 L1114.78,573.1 L1114.91,574.5 L1115.04,579.2 L1115.18,576.0 L1115.31,578.9 L1115.44,578.2 L1115.57,579.5 L1115.71,577.2 L1115.84,574.4 L1115.97,577.1 L1116.10,574.0 L1116.24,573.4 L1116.37,573.7 L1116.50,569.2 L1116.63,570.1 L1116.77,569.7 L1116.90,571.2 L1117.03,573.9 L1117.16,571.3 L1117.30,571.1 L1117.43,573.2 L1117.56,570.0 L1117.70,567.8 L1117.83,567.9 L1117.96,564.8 L1118.09,570.8 L1118.23,569.5 L1118.36,571.2 L1118.49,574.4 L1118.62,574.6 L1118.76,569.3 L1118.89,568.7 L1119.02,570.0 L1119.15,566.8 L1119.29,572.5 L1119.42,575.9 L1119.55,575.3 L1119.68,580.0 L1119.82,575.9 L1119.95,579.8 L1120.08,572.9 L1120.21,570.7 L1120.35,573.7 L1120.48,572.9 L1120.61,571.8 L1120.74,575.3 L1120.88,573.8 L1121.01,574.8 L1121.14,571.2 L1121.28,572.1 L1121.41,574.8 L1121.54,580.5 L1121.67,573.0 L1121.81,577.6 L1121.94,575.9 L1122.07,578.1 L1122.20,571.0 L1122.34,584.3 L1122.47,576.6 L1122.60,577.5 L1122.73,583.1 L1122.87,577.0 L1123.00,570.8 L1123.13,573.5 L1123.26,580.5 L1123.40,577.9 L1123.53,579.8 L1123.66,580.8 L1123.79,580.4 L1123.93,572.9 L1124.06,576.0 L1124.19,573.9 L1124.33,572.3 L1124.46,565.4 L1124.59,565.4 L1124.72,570.9 L1124.86,566.9 L1124.99,575.7 L1125.12,575.2 L1125.25,574.1 L1125.39,571.6 L1125.52,576.1 L1125.65,571.9 L1125.78,569.0 L1125.92,569.7 L1126.05,565.3 L1126.18,567.1 L1126.31,572.0 L1126.45,572.7 L1126.58,572.1 L1126.71,576.1 L1126.84,573.5 L1126.98,579.7 L1127.11,575.6 L1127.24,568.5 L1127.38,570.1 L1127.51,571.6 L1127.64,570.4 L1127.77,569.7 L1127.91,578.7 L1128.04,574.9 L1128.17,576.2 L1128.30,574.7 L1128.44,574.8 L1128.57,570.0 L1128.70,575.3 L1128.83,574.2 L1128.97,571.8 L1129.10,576.1 L1129.23,576.3 L1129.36,571.1 L1129.50,573.4 L1129.63,574.2 L1129.76,574.7 L1129.89,580.6 L1130.03,570.3 L1130.16,579.4 L1130.29,579.1 L1130.42,582.3 L1130.56,579.9 L1130.69,574.0 L1130.82,577.3 L1130.96,576.7 L1131.09,576.9 L1131.22,569.2 L1131.35,572.9 L1131.49,578.0 L1131.62,570.0 L1131.75,573.6 L1131.88,569.6 L1132.02,571.0 L1132.15,571.0 L1132.28,573.3 L1132.41,575.4 L1132.55,577.4 L1132.68,573.7 L1132.81,576.0 L1132.94,573.8 L1133.08,575.5 L1133.21,581.9 L1133.34,579.5 L1133.47,571.5 L1133.61,579.0 L1133.74,578.3 L1133.87,578.8 L1134.00,575.4 L1134.14,578.6 L1134.27,575.7 L1134.40,574.2 L1134.54,575.1 L1134.67,574.0 L1134.80,571.4 L1134.93,570.3 L1135.07,572.4 L1135.20,568.1 L1135.33,573.3 L1135.46,571.7 L1135.60,575.7 L1135.73,570.0 L1135.86,576.0 L1135.99,560.8 L1136.13,577.2 L1136.26,572.3 L1136.39,578.6 L1136.52,572.5 L1136.66,574.5 L1136.79,576.1 L1136.92,573.3 L1137.05,567.9 L1137.19,574.8 L1137.32,576.3 L1137.45,571.6 L1137.59,569.4 L1137.72,571.4 L1137.85,574.0 L1137.98,572.5 L1138.12,574.2 L1138.25,571.7 L1138.38,568.7 L1138.51,578.0 L1138.65,575.5 L1138.78,577.4 L1138.91,576.3 L1139.04,580.6 L1139.18,576.5 L1139.31,574.7 L1139.44,580.3 L1139.57,575.2 L1139.71,577.4 L1139.84,576.2 L1139.97,576.0 L1140.10,575.9 L1140.24,574.3 L1140.37,573.0 L1140.50,569.5 L1140.63,581.3 L1140.77,576.2 L1140.90,577.8 L1141.03,576.0 L1141.17,571.2 L1141.30,573.8 L1141.43,572.6 L1141.56,568.5 L1141.70,579.8 L1141.83,574.2 L1141.96,572.3 L1142.09,576.1 L1142.23,571.9 L1142.36,570.3 L1142.49,573.1 L1142.62,570.1 L1142.76,575.6 L1142.89,569.9 L1143.02,573.8 L1143.15,574.0 L1143.29,571.3 L1143.42,572.9 L1143.55,570.6 L1143.68,576.7 L1143.82,572.8 L1143.95,593.1 L1144.08,568.3 L1144.22,575.1 L1144.35,571.0 L1144.48,582.7 L1144.61,578.6 L1144.75,578.0 L1144.88,577.9 L1145.01,581.5 L1145.14,583.4 L1145.28,583.1 L1145.41,577.3 L1145.54,579.8 L1145.67,581.0 L1145.81,575.5 L1145.94,579.2 L1146.07,577.5 L1146.20,580.0 L1146.34,575.1 L1146.47,572.8 L1146.60,579.6 L1146.73,576.1 L1146.87,573.6 L1147.00,569.3 L1147.13,583.2 L1147.26,578.9 L1147.40,578.3 L1147.53,583.3 L1147.66,579.0 L1147.80,577.7 L1147.93,576.6 L1148.06,580.2 L1148.19,577.3 L1148.33,581.7 L1148.46,579.7 L1148.59,579.9 L1148.72,578.9 L1148.86,581.1 L1148.99,569.3 L1149.12,567.7 L1149.25,568.5 L1149.39,574.2 L1149.52,575.6 L1149.65,570.8 L1149.78,573.9 L1149.92,576.9 L1150.05,573.7 L1150.18,571.6 L1150.31,573.6 L1150.45,576.0 L1150.58,569.6 L1150.71,573.0 L1150.85,576.8 L1150.98,580.6 L1151.11,577.0 L1151.24,576.7 L1151.38,572.0 L1151.51,574.8 L1151.64,570.8 L1151.77,576.8 L1151.91,580.6 L1152.04,588.0 L1152.17,585.1 L1152.30,586.5 L1152.44,580.4 L1152.57,575.5 L1152.70,571.1 L1152.83,574.4 L1152.97,577.3 L1153.10,572.0 L1153.23,580.6 L1153.36,582.2 L1153.50,581.9 L1153.63,585.3 L1153.76,578.4 L1153.89,577.5 L1154.03,573.6 L1154.16,576.2 L1154.29,576.7 L1154.43,574.6 L1154.56,578.3 L1154.69,577.0 L1154.82,576.4 L1154.96,577.3 L1155.09,574.1 L1155.22,575.1 L1155.35,573.0 L1155.49,574.4 L1155.62,579.6 L1155.75,576.2 L1155.88,573.5 L1156.02,584.1 L1156.15,578.2 L1156.28,575.3 L1156.41,576.4 L1156.55,573.3 L1156.68,571.3 L1156.81,574.8 L1156.94,570.9 L1157.08,570.5 L1157.21,575.5 L1157.34,572.0 L1157.48,571.3 L1157.61,574.7 L1157.74,575.2 L1157.87,574.4 L1158.01,574.4 L1158.14,570.1 L1158.27,571.2 L1158.40,573.2 L1158.54,568.9 L1158.67,568.3 L1158.80,568.7 L1158.93,574.1 L1159.07,572.3 L1159.20,572.1 L1159.33,574.9 L1159.46,573.7 L1159.60,574.6 L1159.73,576.5 L1159.86,574.0 L1159.99,579.7 L1160.13,576.4 L1160.26,578.6 L1160.39,580.4 L1160.53,577.5 L1160.66,574.9 L1160.79,573.2 L1160.92,572.5 L1161.06,577.2 L1161.19,577.2 L1161.32,575.2 L1161.45,574.3 L1161.59,573.7 L1161.72,566.3 L1161.85,570.2 L1161.98,573.1 L1162.12,571.7 L1162.25,570.4 L1162.38,575.6 L1162.51,581.0 L1162.65,577.7 L1162.78,577.4 L1162.91,573.9 L1163.04,584.1 L1163.18,577.1 L1163.31,580.1 L1163.44,575.8 L1163.57,577.1 L1163.71,574.6 L1163.84,569.4 L1163.97,573.4 L1164.11,574.2 L1164.24,577.4 L1164.37,577.0 L1164.50,577.4 L1164.64,577.6 L1164.77,573.9 L1164.90,571.1 L1165.03,578.8 L1165.17,579.4 L1165.30,574.7 L1165.43,571.8 L1165.56,574.6 L1165.70,572.5 L1165.83,573.5 L1165.96,580.0 L1166.09,575.3 L1166.23,580.2 L1166.36,575.4 L1166.49,571.8 L1166.62,575.8 L1166.76,580.8 L1166.89,580.3 L1167.02,576.6 L1167.15,574.3 L1167.29,570.4 L1167.42,572.6 L1167.55,580.0 L1167.69,584.2 L1167.82,577.6 L1167.95,576.5 L1168.08,584.0 L1168.22,581.9 L1168.35,579.9 L1168.48,579.3 L1168.61,578.1 L1168.75,575.6 L1168.88,572.6 L1169.01,574.4 L1169.14,572.7 L1169.28,568.9 L1169.41,577.4 L1169.54,578.0 L1169.67,574.7 L1169.81,569.7 L1169.94,577.4 L1170.07,574.8 L1170.20,580.0 L1170.34,576.9 L1170.47,581.7 L1170.60,576.5 L1170.74,576.2 L1170.87,576.1 L1171.00,575.1 L1171.13,576.5 L1171.27,580.2 L1171.40,575.0 L1171.53,581.4 L1171.66,571.7 L1171.80,568.2 L1171.93,573.7 L1172.06,576.1 L1172.19,576.4 L1172.33,576.7 L1172.46,579.6 L1172.59,578.2 L1172.72,577.8 L1172.86,579.2 L1172.99,576.0 L1173.12,575.2 L1173.25,578.6 L1173.39,570.0 L1173.52,573.5 L1173.65,580.3 L1173.78,573.3 L1173.92,576.1 L1174.05,576.5 L1174.18,575.5 L1174.32,579.5 L1174.45,584.0 L1174.58,577.8 L1174.71,576.6 L1174.85,574.2 L1174.98,576.3 L1175.11,576.5 L1175.24,574.7 L1175.38,575.2 L1175.51,579.1 L1175.64,577.6 L1175.77,578.7 L1175.91,572.5 L1176.04,578.8 L1176.17,572.6 L1176.30,574.6 L1176.44,579.6 L1176.57,575.8 L1176.70,576.1 L1176.83,575.8 L1176.97,579.1 L1177.10,579.4 L1177.23,578.7 L1177.37,584.7 L1177.50,581.2 L1177.63,579.6 L1177.76,579.8 L1177.90,581.0 L1178.03,581.3 L1178.16,570.4 L1178.29,576.9 L1178.43,577.3 L1178.56,576.6 L1178.69,574.7 L1178.82,575.3 L1178.96,576.5 L1179.09,577.0 L1179.22,578.2 L1179.35,576.2 L1179.49,573.9 L1179.62,579.1 L1179.75,575.1 L1179.88,577.8 L1180.02,578.0 L1180.15,574.0 L1180.28,577.6 L1180.41,575.3 L1180.55,579.1 L1180.68,577.1 L1180.81,578.2 L1180.95,574.7 L1181.08,560.8 L1181.21,578.1 L1181.34,577.1 L1181.48,587.3 L1181.61,580.4 L1181.74,584.7 L1181.87,577.4 L1182.01,572.3 L1182.14,572.9 L1182.27,576.1 L1182.40,580.3 L1182.54,575.2 L1182.67,579.6 L1182.80,581.1 L1182.93,583.7 L1183.07,576.5 L1183.20,577.4 L1183.33,639.0" fill="none" stroke="#0000ff" stroke-width="1.5" stroke-linejoin="round" clip-path="url(#c3)"/>
<path d="M911.90,811.0 L912.03,765.8 L912.17,764.6 L912.30,769.3 L912.43,761.5 L912.56,769.0 L912.70,759.3 L912.83,761.5 L912.96,761.5 L913.09,762.4 L913.23,763.5 L913.36,760.6 L913.49,760.5 L913.62,756.7 L913.76,760.5 L913.89,756.5 L914.02,760.0 L914.15,757.9 L914.29,756.7 L914.42,754.9 L914.55,760.0 L914.68,762.5 L914.82,763.6 L914.95,761.6 L915.08,766.7 L915.22,761.5 L915.35,757.2 L915.48,762.0 L915.61,760.7 L915.75,754.2 L915.88,765.4 L916.01,768.4 L916.14,765.9 L916.28,760.2 L916.41,759.1 L916.54,766.1 L916.67,760.0 L916.81,760.4 L916.94,763.5 L917.07,768.9 L917.20,761.6 L917.34,764.7 L917.47,763.3 L917.60,759.7 L917.73,752.6 L917.87,753.9 L918.00,761.4 L918.13,757.9 L918.26,757.1 L918.40,762.6 L918.53,759.7 L918.66,758.6 L918.80,764.6 L918.93,762.5 L919.06,764.7 L919.19,759.0 L919.33,758.6 L919.46,753.2 L919.59,756.7 L919.72,756.8 L919.86,760.9 L919.99,762.4 L920.12,766.8 L920.25,772.0 L920.39,763.3 L920.52,760.7 L920.65,757.0 L920.78,763.3 L920.92,766.4 L921.05,766.1 L921.18,773.9 L921.31,767.2 L921.45,759.7 L921.58,763.8 L921.71,769.2 L921.85,760.1 L921.98,764.1 L922.11,765.5 L922.24,763.6 L922.38,761.0 L922.51,759.5 L922.64,762.9 L922.77,758.1 L922.91,759.2 L923.04,755.4 L923.17,761.7 L923.30,754.5 L923.44,754.5 L923.57,753.6 L923.70,759.6 L923.83,754.6 L923.97,759.4 L924.10,761.8 L924.23,760.6 L924.36,761.4 L924.50,764.3 L924.63,758.9 L924.76,764.5 L924.89,761.3 L925.03,759.1 L925.16,758.0 L925.29,761.2 L925.43,753.8 L925.56,757.3 L925.69,755.8 L925.82,760.0 L925.96,760.7 L926.09,756.4 L926.22,760.9 L926.35,759.4 L926.49,762.4 L926.62,765.0 L926.75,761.8 L926.88,753.1 L927.02,757.9 L927.15,754.0 L927.28,756.8 L927.41,759.0 L927.55,761.3 L927.68,761.0 L927.81,755.4 L927.94,757.6 L928.08,759.6 L928.21,760.9 L928.34,754.2 L928.48,761.0 L928.61,755.5 L928.74,760.1 L928.87,754.4 L929.01,753.1 L929.14,752.6 L929.27,756.2 L929.40,757.0 L929.54,759.9 L929.67,759.2 L929.80,759.3 L929.93,757.6 L930.07,760.9 L930.20,762.9 L930.33,759.2 L930.46,753.3 L930.60,756.4 L930.73,758.2 L930.86,753.1 L930.99,748.8 L931.13,758.9 L931.26,754.1 L931.39,750.8 L931.52,757.1 L931.66,757.7 L931.79,756.7 L931.92,756.1 L932.06,758.6 L932.19,754.6 L932.32,762.9 L932.45,755.1 L932.59,755.3 L932.72,754.9 L932.85,754.3 L932.98,755.5 L933.12,753.8 L933.25,758.6 L933.38,758.8 L933.51,760.2 L933.65,760.9 L933.78,757.6 L933.91,762.7 L934.04,761.9 L934.18,764.4 L934.31,759.8 L934.44,757.0 L934.57,753.2 L934.71,758.1 L934.84,752.6 L934.97,750.1 L935.11,749.1 L935.24,749.3 L935.37,757.3 L935.50,753.4 L935.64,749.5 L935.77,749.6 L935.90,751.5 L936.03,752.4 L936.17,755.3 L936.30,756.6 L936.43,753.2 L936.56,750.5 L936.70,752.5 L936.83,745.6 L936.96,758.1 L937.09,752.9 L937.23,746.1 L937.36,747.8 L937.49,749.7 L937.62,752.0 L937.76,755.0 L937.89,755.2 L938.02,751.2 L938.15,759.2 L938.29,757.4 L938.42,758.3 L938.55,756.0 L938.69,754.7 L938.82,753.2 L938.95,757.3 L939.08,750.5 L939.22,752.2 L939.35,755.9 L939.48,753.7 L939.61,754.0 L939.75,750.5 L939.88,745.0 L940.01,751.6 L940.14,755.7 L940.28,751.8 L940.41,752.4 L940.54,752.1 L940.67,754.1 L940.81,749.4 L940.94,746.5 L941.07,746.9 L941.20,751.7 L941.34,752.5 L941.47,751.7 L941.60,751.9 L941.74,755.2 L941.87,753.1 L942.00,754.6 L942.13,749.7 L942.27,755.1 L942.40,751.5 L942.53,752.9 L942.66,752.9 L942.80,754.0 L942.93,758.4 L943.06,760.7 L943.19,757.7 L943.33,755.8 L943.46,757.5 L943.59,755.0 L943.72,753.8 L943.86,756.8 L943.99,756.5 L944.12,760.5 L944.25,756.5 L944.39,751.6 L944.52,749.0 L944.65,750.2 L944.78,746.7 L944.92,748.4 L945.05,744.4 L945.18,747.1 L945.32,751.4 L945.45,755.1 L945.58,753.8 L945.71,751.7 L945.85,753.6 L945.98,753.0 L946.11,749.7 L946.24,757.7 L946.38,758.9 L946.51,754.5 L946.64,756.7 L946.77,753.2 L946.91,755.5 L947.04,755.2 L947.17,759.4 L947.30,750.7 L947.44,757.5 L947.57,759.8 L947.70,755.6 L947.83,754.0 L947.97,753.7 L948.10,754.7 L948.23,750.9 L948.37,749.3 L948.50,754.5 L948.63,754.0 L948.76,752.3 L948.90,748.7 L949.03,746.9 L949.16,749.6 L949.29,745.5 L949.43,744.5 L949.56,747.8 L949.69,753.5 L949.82,754.8 L949.96,753.7 L950.09,751.6 L950.22,754.9 L950.35,758.4 L950.49,758.6 L950.62,752.2 L950.75,753.1 L950.88,754.5 L951.02,748.3 L951.15,746.7 L951.28,749.2 L951.41,748.7 L951.55,746.4 L951.68,752.8 L951.81,751.0 L951.95,751.1 L952.08,746.2 L952.21,745.2 L952.34,751.0 L952.48,751.3 L952.61,751.9 L952.74,750.3 L952.87,749.9 L953.01,751.4 L953.14,751.5 L953.27,756.6 L953.40,758.0 L953.54,761.0 L953.67,754.4 L953.80,758.4 L953.93,752.4 L954.07,752.0 L954.20,752.4 L954.33,751.0 L954.46,747.0 L954.60,749.4 L954.73,751.0 L954.86,751.7 L955.00,746.8 L955.13,747.0 L955.26,744.8 L955.39,746.9 L955.53,745.6 L955.66,747.0 L955.79,741.2 L955.92,750.1 L956.06,751.3 L956.19,744.9 L956.32,748.7 L956.45,751.1 L956.59,747.7 L956.72,756.2 L956.85,748.3 L956.98,750.8 L957.12,749.3 L957.25,752.4 L957.38,744.9 L957.51,750.2 L957.65,752.4 L957.78,751.9 L957.91,754.3 L958.04,752.6 L958.18,753.2 L958.31,750.8 L958.44,746.2 L958.58,748.3 L958.71,747.8 L958.84,752.7 L958.97,752.0 L959.11,753.4 L959.24,750.1 L959.37,748.2 L959.50,747.2 L959.64,746.6 L959.77,751.4 L959.90,748.1 L960.03,752.0 L960.17,753.8 L960.30,749.6 L960.43,749.5 L960.56,749.7 L960.70,748.5 L960.83,754.0 L960.96,753.8 L961.09,751.4 L961.23,750.4 L961.36,747.3 L961.49,752.4 L961.62,751.2 L961.76,750.5 L961.89,746.2 L962.02,758.9 L962.16,750.4 L962.29,754.1 L962.42,755.1 L962.55,748.8 L962.69,752.0 L962.82,753.4 L962.95,748.1 L963.08,748.5 L963.22,753.5 L963.35,755.1 L963.48,758.1 L963.61,753.3 L963.75,757.6 L963.88,752.5 L964.01,748.5 L964.14,746.2 L964.28,746.5 L964.41,748.6 L964.54,752.4 L964.67,747.8 L964.81,754.7 L964.94,747.8 L965.07,746.6 L965.21,756.2 L965.34,747.4 L965.47,749.9 L965.60,749.2 L965.74,754.8 L965.87,746.1 L966.00,744.9 L966.13,752.9 L966.27,749.1 L966.40,749.6 L966.53,753.7 L966.66,748.3 L966.80,751.1 L966.93,748.6 L967.06,745.1 L967.19,748.5 L967.33,736.6 L967.46,743.7 L967.59,748.0 L967.72,746.1 L967.86,751.0 L967.99,755.5 L968.12,757.7 L968.25,751.4 L968.39,752.3 L968.52,749.2 L968.65,745.7 L968.79,751.6 L968.92,749.1 L969.05,751.0 L969.18,749.8 L969.32,755.8 L969.45,752.0 L969.58,753.0 L969.71,747.7 L969.85,752.2 L969.98,747.3 L970.11,746.8 L970.24,744.9 L970.38,746.2 L970.51,746.9 L970.64,753.0 L970.77,753.1 L970.91,747.3 L971.04,751.2 L971.17,748.5 L971.30,753.9 L971.44,749.5 L971.57,751.7 L971.70,749.1 L971.84,747.6 L971.97,740.6 L972.10,749.8 L972.23,745.5 L972.37,746.0 L972.50,748.2 L972.63,749.1 L972.76,750.3 L972.90,749.9 L973.03,752.5 L973.16,751.4 L973.29,747.9 L973.43,746.0 L973.56,744.0 L973.69,748.6 L973.82,752.0 L973.96,745.5 L974.09,743.5 L974.22,747.4 L974.35,750.9 L974.49,753.4 L974.62,756.0 L974.75,747.5 L974.88,753.8 L975.02,750.3 L975.15,748.2 L975.28,744.5 L975.42,746.6 L975.55,743.3 L975.68,744.0 L975.81,747.4 L975.95,753.4 L976.08,755.0 L976.21,760.9 L976.34,752.9 L976.48,751.6 L976.61,751.7 L976.74,748.1 L976.87,745.9 L977.01,749.4 L977.14,750.9 L977.27,747.8 L977.40,748.6 L977.54,748.3 L977.67,744.8 L977.80,747.2 L977.93,743.0 L978.07,750.0 L978.20,745.1 L978.33,746.7 L978.47,751.8 L978.60,745.8 L978.73,743.6 L978.86,746.8 L979.00,754.4 L979.13,742.3 L979.26,747.6 L979.39,751.9 L979.53,752.7 L979.66,753.7 L979.79,752.5 L979.92,748.6 L980.06,752.1 L980.19,750.6 L980.32,754.6 L980.45,754.4 L980.59,754.0 L980.72,752.8 L980.85,749.4 L980.98,749.2 L981.12,748.0 L981.25,746.6 L981.38,753.6 L981.51,747.8 L981.65,750.6 L981.78,749.5 L981.91,746.3 L982.05,750.1 L982.18,751.5 L982.31,747.9 L982.44,746.9 L982.58,750.8 L982.71,743.0 L982.84,751.3 L982.97,751.1 L983.11,749.0 L983.24,749.7 L983.37,745.2 L983.50,745.8 L983.64,747.1 L983.77,744.4 L983.90,746.8 L984.03,754.5 L984.17,753.7 L984.30,750.2 L984.43,753.4 L984.56,752.9 L984.70,747.4 L984.83,749.6 L984.96,751.9 L985.10,753.0 L985.23,748.8 L985.36,744.6 L985.49,745.3 L985.63,745.0 L985.76,747.0 L985.89,742.2 L986.02,738.6 L986.16,742.1 L986.29,753.1 L986.42,753.8 L986.55,753.4 L986.69,754.0 L986.82,758.5 L986.95,751.7 L987.08,752.3 L987.22,748.6 L987.35,750.7 L987.48,746.6 L987.61,755.8 L987.75,751.3 L987.88,753.8 L988.01,751.6 L988.14,753.6 L988.28,748.9 L988.41,755.3 L988.54,755.8 L988.68,751.0 L988.81,749.5 L988.94,752.9 L989.07,755.5 L989.21,753.2 L989.34,751.1 L989.47,751.8 L989.60,754.5 L989.74,752.5 L989.87,748.0 L990.00,751.5 L990.13,754.3 L990.27,753.0 L990.40,747.2 L990.53,745.6 L990.66,749.6 L990.80,753.2 L990.93,748.8 L991.06,751.8 L991.19,748.1 L991.33,751.6 L991.46,751.0 L991.59,752.8 L991.73,749.0 L991.86,750.6 L991.99,755.8 L992.12,750.7 L992.26,749.8 L992.39,749.3 L992.52,744.3 L992.65,743.2 L992.79,743.9 L992.92,745.8 L993.05,747.4 L993.18,745.7 L993.32,746.5 L993.45,741.2 L993.58,748.9 L993.71,747.5 L993.85,747.7 L993.98,746.9 L994.11,746.1 L994.24,744.5 L994.38,750.6 L994.51,744.4 L994.64,747.0 L994.77,749.3 L994.91,753.3 L995.04,752.1 L995.17,750.8 L995.31,747.6 L995.44,752.4 L995.57,749.0 L995.70,747.5 L995.84,745.0 L995.97,748.8 L996.10,745.7 L996.23,750.1 L996.37,747.7 L996.50,745.3 L996.63,747.8 L996.76,737.9 L996.90,745.8 L997.03,749.0 L997.16,748.6 L997.29,742.9 L997.43,749.8 L997.56,745.1 L997.69,750.7 L997.82,747.9 L997.96,752.7 L998.09,748.0 L998.22,748.6 L998.36,752.8 L998.49,748.1 L998.62,744.0 L998.75,747.4 L998.89,750.1 L999.02,748.8 L999.15,746.6 L999.28,743.1 L999.42,744.1 L999.55,749.9 L999.68,749.2 L999.81,751.3 L999.95,749.7 L1000.08,746.4 L1000.21,751.0 L1000.34,743.5 L1000.48,747.9 L1000.61,747.2 L1000.74,749.7 L1000.87,751.7 L1001.01,747.2 L1001.14,748.3 L1001.27,751.7 L1001.40,749.4 L1001.54,753.3 L1001.67,744.7 L1001.80,746.5 L1001.94,745.5 L1002.07,751.6 L1002.20,744.2 L1002.33,748.1 L1002.47,746.2 L1002.60,750.3 L1002.73,745.6 L1002.86,752.8 L1003.00,750.3 L1003.13,750.3 L1003.26,752.8 L1003.39,750.8 L1003.53,751.0 L1003.66,749.6 L1003.79,744.5 L1003.92,743.2 L1004.06,743.9 L1004.19,739.5 L1004.32,739.7 L1004.45,742.8 L1004.59,741.3 L1004.72,750.5 L1004.85,744.4 L1004.99,745.8 L1005.12,746.7 L1005.25,742.4 L1005.38,740.5 L1005.52,738.6 L1005.65,741.1 L1005.78,745.9 L1005.91,749.2 L1006.05,747.1 L1006.18,746.2 L1006.31,748.9 L1006.44,745.2 L1006.58,747.8 L1006.71,746.2 L1006.84,749.4 L1006.97,744.4 L1007.11,745.8 L1007.24,742.0 L1007.37,744.9 L1007.50,748.1 L1007.64,744.6 L1007.77,739.9 L1007.90,743.0 L1008.03,743.4 L1008.17,740.4 L1008.30,742.7 L1008.43,750.2 L1008.57,749.5 L1008.70,753.6 L1008.83,748.7 L1008.96,749.0 L1009.10,745.4 L1009.23,753.0 L1009.36,744.8 L1009.49,748.7 L1009.63,745.3 L1009.76,748.8 L1009.89,747.1 L1010.02,751.3 L1010.16,748.9 L1010.29,747.6 L1010.42,748.4 L1010.55,745.0 L1010.69,746.6 L1010.82,749.7 L1010.95,745.4 L1011.08,746.3 L1011.22,749.9 L1011.35,744.7 L1011.48,749.0 L1011.62,748.3 L1011.75,753.4 L1011.88,748.7 L1012.01,740.9 L1012.15,742.9 L1012.28,744.0 L1012.41,748.4 L1012.54,746.2 L1012.68,744.1 L1012.81,748.6 L1012.94,748.6 L1013.07,752.1 L1013.21,747.3 L1013.34,748.6 L1013.47,743.6 L1013.60,742.4 L1013.74,743.1 L1013.87,750.1 L1014.00,750.0 L1014.13,747.9 L1014.27,753.0 L1014.40,751.8 L1014.53,749.8 L1014.66,747.5 L1014.80,741.3 L1014.93,744.9 L1015.06,741.7 L1015.20,741.1 L1015.33,746.8 L1015.46,750.1 L1015.59,752.3 L1015.73,743.5 L1015.86,749.1 L1015.99,749.6 L1016.12,740.2 L1016.26,747.4 L1016.39,748.6 L1016.52,749.0 L1016.65,752.2 L1016.79,754.6 L1016.92,750.2 L1017.05,751.1 L1017.18,749.8 L1017.32,751.2 L1017.45,751.4 L1017.58,748.9 L1017.71,741.6 L1017.85,741.0 L1017.98,741.0 L1018.11,741.4 L1018.25,748.2 L1018.38,744.5 L1018.51,749.9 L1018.64,749.5 L1018.78,746.9 L1018.91,751.7 L1019.04,745.2 L1019.17,743.3 L1019.31,746.7 L1019.44,749.3 L1019.57,746.4 L1019.70,746.5 L1019.84,749.5 L1019.97,749.0 L1020.10,747.3 L1020.23,749.3 L1020.37,750.2 L1020.50,748.8 L1020.63,744.5 L1020.76,743.1 L1020.90,743.9 L1021.03,744.7 L1021.16,744.8 L1021.29,743.1 L1021.43,740.2 L1021.56,743.9 L1021.69,750.9 L1021.83,749.7 L1021.96,749.8 L1022.09,748.3 L1022.22,754.8 L1022.36,746.6 L1022.49,751.3 L1022.62,748.2 L1022.75,747.5 L1022.89,742.6 L1023.02,749.3 L1023.15,743.5 L1023.28,746.9 L1023.42,742.0 L1023.55,745.8 L1023.68,744.5 L1023.81,748.4 L1023.95,744.9 L1024.08,745.4 L1024.21,745.1 L1024.34,746.5 L1024.48,745.4 L1024.61,745.3 L1024.74,744.4 L1024.88,750.1 L1025.01,749.8 L1025.14,745.7 L1025.27,748.7 L1025.41,752.0 L1025.54,742.8 L1025.67,743.3 L1025.80,736.2 L1025.94,742.6 L1026.07,745.6 L1026.20,744.8 L1026.33,747.6 L1026.47,745.1 L1026.60,745.5 L1026.73,741.2 L1026.86,748.6 L1027.00,743.8 L1027.13,739.9 L1027.26,741.7 L1027.39,743.9 L1027.53,741.3 L1027.66,742.1 L1027.79,745.1 L1027.92,744.7 L1028.06,745.8 L1028.19,747.2 L1028.32,753.7 L1028.46,749.0 L1028.59,748.7 L1028.72,745.1 L1028.85,748.7 L1028.99,746.8 L1029.12,746.4 L1029.25,744.3 L1029.38,744.1 L1029.52,739.0 L1029.65,741.7 L1029.78,741.6 L1029.91,742.5 L1030.05,749.7 L1030.18,740.7 L1030.31,742.0 L1030.44,750.3 L1030.58,748.5 L1030.71,750.5 L1030.84,744.6 L1030.97,748.4 L1031.11,746.7 L1031.24,745.4 L1031.37,741.5 L1031.51,739.6 L1031.64,737.1 L1031.77,739.9 L1031.90,746.8 L1032.04,741.7 L1032.17,742.7 L1032.30,747.7 L1032.43,751.2 L1032.57,749.6 L1032.70,744.0 L1032.83,745.0 L1032.96,746.4 L1033.10,738.3 L1033.23,745.0 L1033.36,740.9 L1033.49,744.4 L1033.63,746.2 L1033.76,744.9 L1033.89,747.2 L1034.02,746.4 L1034.16,739.3 L1034.29,747.6 L1034.42,743.3 L1034.56,740.6 L1034.69,745.8 L1034.82,745.3 L1034.95,741.5 L1035.09,746.2 L1035.22,746.3 L1035.35,745.8 L1035.48,742.0 L1035.62,734.0 L1035.75,740.5 L1035.88,743.3 L1036.01,736.8 L1036.15,739.7 L1036.28,740.2 L1036.41,747.7 L1036.54,767.5 L1036.68,744.4 L1036.81,744.7 L1036.94,744.6 L1037.07,746.0 L1037.21,747.5 L1037.34,742.8 L1037.47,749.0 L1037.60,745.6 L1037.74,744.7 L1037.87,741.2 L1038.00,743.2 L1038.14,738.6 L1038.27,743.5 L1038.40,739.7 L1038.53,739.7 L1038.67,740.5 L1038.80,742.2 L1038.93,741.3 L1039.06,741.6 L1039.20,748.3 L1039.33,743.6 L1039.46,746.8 L1039.59,749.1 L1039.73,745.5 L1039.86,744.6 L1039.99,739.6 L1040.12,746.2 L1040.26,742.7 L1040.39,738.7 L1040.52,740.5 L1040.65,742.2 L1040.79,741.9 L1040.92,747.3 L1041.05,750.2 L1041.18,745.9 L1041.32,749.2 L1041.45,746.9 L1041.58,744.0 L1041.72,747.4 L1041.85,746.1 L1041.98,746.9 L1042.11,743.2 L1042.25,742.7 L1042.38,741.3 L1042.51,742.0 L1042.64,738.3 L1042.78,743.3 L1042.91,743.3 L1043.04,743.8 L1043.17,742.1 L1043.31,746.7 L1043.44,749.2 L1043.57,750.4 L1043.70,744.8 L1043.84,739.7 L1043.97,747.9 L1044.10,742.5 L1044.23,743.2 L1044.37,746.4 L1044.50,728.0 L1044.63,746.4 L1044.77,744.1 L1044.90,741.8 L1045.03,737.2 L1045.16,739.6 L1045.30,737.1 L1045.43,740.1 L1045.56,740.2 L1045.69,741.7 L1045.83,744.9 L1045.96,741.2 L1046.09,738.1 L1046.22,744.1 L1046.36,741.1 L1046.49,742.0 L1046.62,748.7 L1046.75,738.8 L1046.89,741.5 L1047.02,742.2 L1047.15,741.4 L1047.28,745.5 L1047.42,747.9 L1047.55,739.1 L1047.68,739.1 L1047.82,740.3 L1047.95,739.5 L1048.08,738.0 L1048.21,738.9 L1048.35,740.4 L1048.48,741.8 L1048.61,736.2 L1048.74,737.9 L1048.88,742.8 L1049.01,747.6 L1049.14,748.9 L1049.27,749.8 L1049.41,746.6 L1049.54,744.2 L1049.67,746.3 L1049.80,746.2 L1049.94,748.4 L1050.07,746.5 L1050.20,750.9 L1050.33,747.7 L1050.47,742.1 L1050.60,743.6 L1050.73,742.2 L1050.86,747.2 L1051.00,739.0 L1051.13,743.7 L1051.26,744.4 L1051.40,746.3 L1051.53,743.6 L1051.66,745.3 L1051.79,746.3 L1051.93,742.5 L1052.06,741.7 L1052.19,744.2 L1052.32,744.7 L1052.46,743.6 L1052.59,742.2 L1052.72,752.1 L1052.85,745.3 L1052.99,747.7 L1053.12,741.8 L1053.25,744.3 L1053.38,744.2 L1053.52,742.7 L1053.65,745.6 L1053.78,745.1 L1053.91,743.3 L1054.05,748.3 L1054.18,744.5 L1054.31,750.0 L1054.44,745.4 L1054.58,747.5 L1054.71,745.0 L1054.84,742.6 L1054.98,739.9 L1055.11,746.3 L1055.24,742.3 L1055.37,739.8 L1055.51,739.2 L1055.64,738.0 L1055.77,741.3 L1055.90,745.2 L1056.04,738.4 L1056.17,742.1 L1056.30,739.5 L1056.43,742.4 L1056.57,740.6 L1056.70,741.3 L1056.83,742.0 L1056.96,745.6 L1057.10,741.1 L1057.23,745.4 L1057.36,739.3 L1057.49,736.3 L1057.63,735.8 L1057.76,738.9 L1057.89,740.5 L1058.03,740.2 L1058.16,743.7 L1058.29,745.5 L1058.42,745.2 L1058.56,740.0 L1058.69,744.4 L1058.82,741.1 L1058.95,741.4 L1059.09,743.3 L1059.22,747.9 L1059.35,746.0 L1059.48,749.4 L1059.62,745.2 L1059.75,742.1 L1059.88,740.5 L1060.01,747.8 L1060.15,745.2 L1060.28,747.0 L1060.41,743.2 L1060.54,744.6 L1060.68,747.6 L1060.81,747.0 L1060.94,746.1 L1061.08,744.6 L1061.21,745.9 L1061.34,746.4 L1061.47,750.7 L1061.61,745.8 L1061.74,747.9 L1061.87,747.7 L1062.00,744.6 L1062.14,741.5 L1062.27,739.2 L1062.40,737.3 L1062.53,737.6 L1062.67,738.4 L1062.80,742.0 L1062.93,746.3 L1063.06,746.2 L1063.20,742.8 L1063.33,746.6 L1063.46,745.1 L1063.59,753.8 L1063.73,750.8 L1063.86,750.4 L1063.99,749.2 L1064.12,750.5 L1064.26,754.0 L1064.39,746.8 L1064.52,742.1 L1064.66,747.4 L1064.79,741.7 L1064.92,743.3 L1065.05,740.9 L1065.19,739.2 L1065.32,744.1 L1065.45,742.7 L1065.58,741.8 L1065.72,743.7 L1065.85,738.3 L1065.98,746.2 L1066.11,741.1 L1066.25,747.2 L1066.38,746.0 L1066.51,744.9 L1066.64,746.2 L1066.78,745.1 L1066.91,739.0 L1067.04,741.6 L1067.17,732.3 L1067.31,746.5 L1067.44,745.5 L1067.57,751.7 L1067.70,743.3 L1067.84,743.1 L1067.97,736.1 L1068.10,736.1 L1068.24,736.2 L1068.37,742.2 L1068.50,738.3 L1068.63,744.7 L1068.77,747.6 L1068.90,745.6 L1069.03,750.9 L1069.16,746.1 L1069.30,747.4 L1069.43,746.4 L1069.56,750.9 L1069.69,738.8 L1069.83,743.5 L1069.96,744.5 L1070.09,740.7 L1070.22,738.1 L1070.36,738.4 L1070.49,739.4 L1070.62,745.5 L1070.75,743.6 L1070.89,687.0 L1071.02,746.4 L1071.15,744.1 L1071.29,747.7 L1071.42,740.0 L1071.55,742.4 L1071.68,736.1 L1071.82,742.7 L1071.95,739.1 L1072.08,741.6 L1072.21,741.3 L1072.35,740.8 L1072.48,744.3 L1072.61,744.6 L1072.74,744.4 L1072.88,742.0 L1073.01,740.0 L1073.14,742.4 L1073.27,737.4 L1073.41,738.6 L1073.54,742.8 L1073.67,743.8 L1073.80,744.9 L1073.94,745.1 L1074.07,748.7 L1074.20,750.0 L1074.34,744.3 L1074.47,744.7 L1074.60,747.2 L1074.73,741.9 L1074.87,741.7 L1075.00,740.5 L1075.13,739.5 L1075.26,742.4 L1075.40,740.2 L1075.53,737.7 L1075.66,740.9 L1075.79,745.8 L1075.93,745.2 L1076.06,746.5 L1076.19,743.0 L1076.32,744.7 L1076.46,743.7 L1076.59,739.6 L1076.72,741.4 L1076.85,743.4 L1076.99,749.5 L1077.12,746.7 L1077.25,745.3 L1077.38,745.0 L1077.52,748.1 L1077.65,743.2 L1077.78,740.8 L1077.92,746.8 L1078.05,751.1 L1078.18,744.2 L1078.31,745.1 L1078.45,741.2 L1078.58,744.2 L1078.71,744.7 L1078.84,749.5 L1078.98,745.9 L1079.11,750.9 L1079.24,747.1 L1079.37,744.0 L1079.51,743.8 L1079.64,744.3 L1079.77,745.4 L1079.90,749.7 L1080.04,743.5 L1080.17,740.1 L1080.30,737.1 L1080.43,743.3 L1080.57,739.5 L1080.70,740.4 L1080.83,744.1 L1080.96,742.7 L1081.10,745.5 L1081.23,749.1 L1081.36,742.9 L1081.50,744.3 L1081.63,743.2 L1081.76,744.8 L1081.89,741.8 L1082.03,746.2 L1082.16,745.4 L1082.29,744.6 L1082.42,741.5 L1082.56,739.0 L1082.69,736.8 L1082.82,740.5 L1082.95,739.7 L1083.09,741.8 L1083.22,740.8 L1083.35,741.2 L1083.48,743.8 L1083.62,740.4 L1083.75,746.3 L1083.88,741.2 L1084.01,742.1 L1084.15,740.3 L1084.28,762.3 L1084.41,745.1 L1084.55,741.6 L1084.68,743.3 L1084.81,740.3 L1084.94,742.0 L1085.08,733.6 L1085.21,745.4 L1085.34,741.6 L1085.47,738.6 L1085.61,741.3 L1085.74,744.7 L1085.87,743.6 L1086.00,738.3 L1086.14,740.8 L1086.27,738.9 L1086.40,743.9 L1086.53,740.4 L1086.67,742.2 L1086.80,741.1 L1086.93,741.2 L1087.06,744.1 L1087.20,743.0 L1087.33,741.6 L1087.46,742.1 L1087.60,743.5 L1087.73,740.0 L1087.86,746.2 L1087.99,739.5 L1088.13,739.4 L1088.26,743.5 L1088.39,744.5 L1088.52,745.2 L1088.66,747.4 L1088.79,746.5 L1088.92,743.0 L1089.05,742.4 L1089.19,740.9 L1089.32,741.7 L1089.45,741.0 L1089.58,738.3 L1089.72,740.1 L1089.85,733.6 L1089.98,736.9 L1090.11,740.4 L1090.25,737.0 L1090.38,734.9 L1090.51,738.9 L1090.64,737.3 L1090.78,738.3 L1090.91,738.4 L1091.04,745.3 L1091.18,745.8 L1091.31,743.5 L1091.44,745.7 L1091.57,744.9 L1091.71,740.2 L1091.84,740.1 L1091.97,742.1 L1092.10,738.8 L1092.24,744.7 L1092.37,745.8 L1092.50,735.8 L1092.63,744.8 L1092.77,738.0 L1092.90,739.4 L1093.03,742.7 L1093.16,736.7 L1093.30,739.1 L1093.43,736.4 L1093.56,740.7 L1093.69,743.3 L1093.83,740.2 L1093.96,738.6 L1094.09,750.5 L1094.22,746.4 L1094.36,740.7 L1094.49,741.6 L1094.62,746.5 L1094.76,736.9 L1094.89,738.6 L1095.02,738.5 L1095.15,742.6 L1095.29,735.4 L1095.42,739.7 L1095.55,742.9 L1095.68,744.9 L1095.82,744.1 L1095.95,744.1 L1096.08,740.4 L1096.21,741.9 L1096.35,742.1 L1096.48,741.7 L1096.61,737.0 L1096.74,743.4 L1096.88,744.7 L1097.01,741.3 L1097.14,742.6 L1097.27,740.4 L1097.41,744.1 L1097.54,737.4 L1097.67,739.7 L1097.81,741.4 L1097.94,737.5 L1098.07,739.2 L1098.20,743.6 L1098.34,744.1 L1098.47,737.1 L1098.60,736.4 L1098.73,744.9 L1098.87,737.9 L1099.00,743.1 L1099.13,743.1 L1099.26,741.3 L1099.40,743.4 L1099.53,736.2 L1099.66,740.4 L1099.79,739.7 L1099.93,739.2 L1100.06,735.4 L1100.19,740.2 L1100.32,738.9 L1100.46,742.0 L1100.59,741.6 L1100.72,742.2 L1100.86,745.4 L1100.99,741.2 L1101.12,744.5 L1101.25,749.5 L1101.39,749.7 L1101.52,743.3 L1101.65,741.0 L1101.78,741.7 L1101.92,734.3 L1102.05,735.9 L1102.18,739.4 L1102.31,741.9 L1102.45,736.6 L1102.58,738.0 L1102.71,742.3 L1102.84,735.3 L1102.98,734.8 L1103.11,733.5 L1103.24,737.7 L1103.37,736.8 L1103.51,744.7 L1103.64,739.8 L1103.77,743.4 L1103.90,742.0 L1104.04,740.4 L1104.17,742.8 L1104.30,743.4 L1104.44,744.4 L1104.57,744.9 L1104.70,743.6 L1104.83,740.4 L1104.97,734.6 L1105.10,740.3 L1105.23,740.4 L1105.36,739.4 L1105.50,738.1 L1105.63,738.3 L1105.76,743.2 L1105.89,740.8 L1106.03,742.8 L1106.16,741.6 L1106.29,742.5 L1106.42,741.6 L1106.56,740.3 L1106.69,743.4 L1106.82,737.6 L1106.95,739.8 L1107.09,743.3 L1107.22,734.5 L1107.35,732.4 L1107.48,735.5 L1107.62,738.5 L1107.75,738.7 L1107.88,740.0 L1108.02,743.4 L1108.15,740.6 L1108.28,743.5 L1108.41,740.5 L1108.55,743.6 L1108.68,739.8 L1108.81,738.3 L1108.94,739.3 L1109.08,736.1 L1109.21,741.6 L1109.34,736.3 L1109.47,734.5 L1109.61,733.6 L1109.74,736.8 L1109.87,735.9 L1110.00,734.0 L1110.14,743.0 L1110.27,740.7 L1110.40,736.2 L1110.53,738.9 L1110.67,739.4 L1110.80,739.8 L1110.93,738.1 L1111.07,742.8 L1111.20,737.9 L1111.33,739.3 L1111.46,741.8 L1111.60,748.9 L1111.73,741.7 L1111.86,737.3 L1111.99,737.1 L1112.13,736.4 L1112.26,734.5 L1112.39,737.1 L1112.52,739.6 L1112.66,739.1 L1112.79,742.5 L1112.92,734.2 L1113.05,744.3 L1113.19,739.0 L1113.32,739.4 L1113.45,739.2 L1113.58,736.7 L1113.72,739.7 L1113.85,735.5 L1113.98,742.8 L1114.12,742.2 L1114.25,741.1 L1114.38,738.9 L1114.51,742.8 L1114.65,739.4 L1114.78,738.9 L1114.91,738.4 L1115.04,737.3 L1115.18,734.9 L1115.31,731.5 L1115.44,729.8 L1115.57,732.3 L1115.71,738.8 L1115.84,733.5 L1115.97,741.9 L1116.10,737.4 L1116.24,741.6 L1116.37,737.1 L1116.50,740.0 L1116.63,742.1 L1116.77,737.6 L1116.90,733.8 L1117.03,737.9 L1117.16,737.1 L1117.30,741.9 L1117.43,741.8 L1117.56,745.2 L1117.70,744.8 L1117.83,744.0 L1117.96,738.6 L1118.09,741.4 L1118.23,741.3 L1118.36,741.1 L1118.49,742.0 L1118.62,740.7 L1118.76,741.0 L1118.89,740.0 L1119.02,738.5 L1119.15,740.6 L1119.29,739.0 L1119.42,740.6 L1119.55,739.8 L1119.68,742.1 L1119.82,740.3 L1119.95,742.0 L1120.08,748.7 L1120.21,744.3 L1120.35,743.3 L1120.48,740.6 L1120.61,736.6 L1120.74,731.8 L1120.88,734.9 L1121.01,733.2 L1121.14,736.2 L1121.28,740.4 L1121.41,741.4 L1121.54,741.1 L1121.67,744.2 L1121.81,743.2 L1121.94,741.8 L1122.07,735.1 L1122.20,734.4 L1122.34,738.5 L1122.47,737.6 L1122.60,743.6 L1122.73,738.2 L1122.87,738.9 L1123.00,743.3 L1123.13,739.1 L1123.26,738.4 L1123.40,736.1 L1123.53,739.6 L1123.66,738.3 L1123.79,743.0 L1123.93,736.6 L1124.06,742.3 L1124.19,736.7 L1124.33,740.5 L1124.46,741.3 L1124.59,738.9 L1124.72,741.4 L1124.86,739.1 L1124.99,738.8 L1125.12,739.5 L1125.25,736.5 L1125.39,737.3 L1125.52,741.1 L1125.65,740.0 L1125.78,741.8 L1125.92,746.1 L1126.05,746.0 L1126.18,742.9 L1126.31,750.7 L1126.45,745.4 L1126.58,743.3 L1126.71,741.6 L1126.84,741.9 L1126.98,739.1 L1127.11,738.4 L1127.24,736.0 L1127.38,739.8 L1127.51,738.7 L1127.64,738.0 L1127.77,737.1 L1127.91,732.8 L1128.04,731.5 L1128.17,736.4 L1128.30,735.6 L1128.44,734.1 L1128.57,738.2 L1128.70,735.7 L1128.83,738.9 L1128.97,738.8 L1129.10,737.0 L1129.23,738.3 L1129.36,743.2 L1129.50,738.4 L1129.63,737.6 L1129.76,738.5 L1129.89,735.0 L1130.03,734.7 L1130.16,736.2 L1130.29,735.3 L1130.42,740.1 L1130.56,734.9 L1130.69,737.9 L1130.82,739.2 L1130.96,737.2 L1131.09,740.9 L1131.22,742.9 L1131.35,745.3 L1131.49,743.8 L1131.62,741.2 L1131.75,738.7 L1131.88,739.3 L1132.02,734.2 L1132.15,734.9 L1132.28,740.1 L1132.41,738.0 L1132.55,740.1 L1132.68,742.4 L1132.81,739.6 L1132.94,739.4 L1133.08,742.2 L1133.21,737.2 L1133.34,737.9 L1133.47,741.3 L1133.61,739.0 L1133.74,743.3 L1133.87,740.5 L1134.00,738.4 L1134.14,742.5 L1134.27,731.9 L1134.40,737.3 L1134.54,733.6 L1134.67,736.4 L1134.80,733.5 L1134.93,734.6 L1135.07,734.8 L1135.20,725.3 L1135.33,728.4 L1135.46,729.5 L1135.60,738.2 L1135.73,734.4 L1135.86,739.7 L1135.99,737.5 L1136.13,733.0 L1136.26,731.9 L1136.39,735.5 L1136.52,732.7 L1136.66,732.8 L1136.79,741.0 L1136.92,737.8 L1137.05,740.1 L1137.19,737.9 L1137.32,745.0 L1137.45,739.9 L1137.59,745.2 L1137.72,738.5 L1137.85,757.1 L1137.98,735.6 L1138.12,739.6 L1138.25,736.7 L1138.38,739.6 L1138.51,738.5 L1138.65,739.1 L1138.78,738.0 L1138.91,743.6 L1139.04,739.8 L1139.18,741.5 L1139.31,740.8 L1139.44,740.0 L1139.57,739.3 L1139.71,741.3 L1139.84,742.6 L1139.97,743.6 L1140.10,740.1 L1140.24,736.6 L1140.37,742.2 L1140.50,739.8 L1140.63,743.3 L1140.77,735.5 L1140.90,738.8 L1141.03,739.6 L1141.17,735.0 L1141.30,733.9 L1141.43,736.3 L1141.56,737.2 L1141.70,736.0 L1141.83,736.4 L1141.96,735.3 L1142.09,733.7 L1142.23,729.7 L1142.36,738.3 L1142.49,737.3 L1142.62,735.8 L1142.76,737.6 L1142.89,742.9 L1143.02,743.5 L1143.15,741.6 L1143.29,736.6 L1143.42,734.7 L1143.55,734.6 L1143.68,731.6 L1143.82,733.9 L1143.95,738.3 L1144.08,732.8 L1144.22,730.9 L1144.35,736.3 L1144.48,736.7 L1144.61,727.8 L1144.75,738.7 L1144.88,739.3 L1145.01,735.7 L1145.14,732.9 L1145.28,739.9 L1145.41,737.9 L1145.54,737.0 L1145.67,743.6 L1145.81,744.0 L1145.94,734.3 L1146.07,738.2 L1146.20,739.4 L1146.34,737.2 L1146.47,737.2 L1146.60,738.7 L1146.73,730.8 L1146.87,740.8 L1147.00,732.7 L1147.13,735.7 L1147.26,733.7 L1147.40,733.0 L1147.53,735.5 L1147.66,736.9 L1147.80,737.4 L1147.93,743.9 L1148.06,740.1 L1148.19,745.1 L1148.33,740.2 L1148.46,731.4 L1148.59,735.6 L1148.72,729.3 L1148.86,730.7 L1148.99,736.0 L1149.12,734.4 L1149.25,740.8 L1149.39,741.5 L1149.52,736.9 L1149.65,737.7 L1149.78,733.2 L1149.92,729.9 L1150.05,736.9 L1150.18,738.7 L1150.31,734.5 L1150.45,734.6 L1150.58,734.9 L1150.71,728.8 L1150.85,732.1 L1150.98,735.8 L1151.11,729.0 L1151.24,731.1 L1151.38,738.3 L1151.51,739.7 L1151.64,736.5 L1151.77,736.9 L1151.91,733.4 L1152.04,732.8 L1152.17,740.1 L1152.30,739.9 L1152.44,739.1 L1152.57,739.7 L1152.70,740.4 L1152.83,737.6 L1152.97,735.6 L1153.10,734.9 L1153.23,741.7 L1153.36,738.3 L1153.50,739.4 L1153.63,743.3 L1153.76,743.2 L1153.89,740.2 L1154.03,738.7 L1154.16,734.0 L1154.29,733.0 L1154.43,734.1 L1154.56,729.5 L1154.69,733.8 L1154.82,739.3 L1154.96,735.6 L1155.09,737.4 L1155.22,742.4 L1155.35,738.6 L1155.49,740.0 L1155.62,736.1 L1155.75,740.3 L1155.88,734.5 L1156.02,740.4 L1156.15,739.9 L1156.28,740.0 L1156.41,738.9 L1156.55,738.8 L1156.68,732.6 L1156.81,738.9 L1156.94,729.2 L1157.08,736.6 L1157.21,735.2 L1157.34,733.9 L1157.48,733.5 L1157.61,740.8 L1157.74,744.0 L1157.87,738.7 L1158.01,738.5 L1158.14,734.1 L1158.27,738.7 L1158.40,733.8 L1158.54,737.3 L1158.67,732.7 L1158.80,727.7 L1158.93,732.5 L1159.07,732.1 L1159.20,737.4 L1159.33,737.8 L1159.46,735.9 L1159.60,737.4 L1159.73,744.0 L1159.86,736.4 L1159.99,726.8 L1160.13,730.4 L1160.26,728.0 L1160.39,732.0 L1160.53,732.8 L1160.66,735.1 L1160.79,741.9 L1160.92,730.4 L1161.06,732.2 L1161.19,735.7 L1161.32,728.1 L1161.45,733.0 L1161.59,730.4 L1161.72,739.0 L1161.85,736.1 L1161.98,744.1 L1162.12,739.8 L1162.25,743.4 L1162.38,736.2 L1162.51,733.8 L1162.65,738.1 L1162.78,731.7 L1162.91,735.0 L1163.04,734.0 L1163.18,734.7 L1163.31,737.7 L1163.44,733.9 L1163.57,740.5 L1163.71,739.2 L1163.84,733.4 L1163.97,737.5 L1164.11,735.2 L1164.24,736.2 L1164.37,737.3 L1164.50,735.0 L1164.64,739.3 L1164.77,739.5 L1164.90,740.3 L1165.03,733.0 L1165.17,737.1 L1165.30,738.5 L1165.43,734.9 L1165.56,735.3 L1165.70,736.0 L1165.83,732.2 L1165.96,730.9 L1166.09,732.9 L1166.23,735.0 L1166.36,731.0 L1166.49,735.6 L1166.62,739.0 L1166.76,738.3 L1166.89,735.2 L1167.02,731.9 L1167.15,740.5 L1167.29,734.9 L1167.42,736.3 L1167.55,733.8 L1167.69,736.2 L1167.82,735.2 L1167.95,736.0 L1168.08,736.1 L1168.22,737.1 L1168.35,734.6 L1168.48,744.2 L1168.61,745.9 L1168.75,745.1 L1168.88,738.3 L1169.01,737.3 L1169.14,735.8 L1169.28,736.1 L1169.41,737.5 L1169.54,740.9 L1169.67,737.4 L1169.81,737.1 L1169.94,739.5 L1170.07,740.3 L1170.20,739.0 L1170.34,734.0 L1170.47,733.3 L1170.60,730.3 L1170.74,732.8 L1170.87,736.7 L1171.00,733.1 L1171.13,737.2 L1171.27,739.9 L1171.40,739.0 L1171.53,737.9 L1171.66,736.7 L1171.80,741.1 L1171.93,735.7 L1172.06,738.3 L1172.19,737.5 L1172.33,737.4 L1172.46,736.4 L1172.59,737.0 L1172.72,731.6 L1172.86,739.6 L1172.99,730.9 L1173.12,741.8 L1173.25,738.7 L1173.39,742.2 L1173.52,741.3 L1173.65,739.3 L1173.78,741.8 L1173.92,737.9 L1174.05,737.6 L1174.18,735.1 L1174.32,736.1 L1174.45,740.2 L1174.58,735.5 L1174.71,736.0 L1174.85,733.1 L1174.98,735.4 L1175.11,740.0 L1175.24,736.0 L1175.38,736.9 L1175.51,735.9 L1175.64,735.1 L1175.77,733.5 L1175.91,741.7 L1176.04,741.1 L1176.17,743.7 L1176.30,742.0 L1176.44,740.3 L1176.57,743.0 L1176.70,734.9 L1176.83,737.6 L1176.97,740.1 L1177.10,735.0 L1177.23,733.7 L1177.37,735.3 L1177.50,744.6 L1177.63,736.0 L1177.76,740.1 L1177.90,737.1 L1178.03,736.9 L1178.16,730.0 L1178.29,735.7 L1178.43,735.6 L1178.56,728.3 L1178.69,743.8 L1178.82,730.3 L1178.96,739.1 L1179.09,735.8 L1179.22,729.2 L1179.35,736.5 L1179.49,738.5 L1179.62,741.6 L1179.75,738.6 L1179.88,734.6 L1180.02,733.4 L1180.15,733.4 L1180.28,731.5 L1180.41,733.2 L1180.55,735.2 L1180.68,734.7 L1180.81,736.6 L1180.95,740.9 L1181.08,713.4 L1181.21,765.4 L1181.34,731.1 L1181.48,734.2 L1181.61,735.8 L1181.74,741.4 L1181.87,743.5 L1182.01,743.6 L1182.14,743.3 L1182.27,744.6 L1182.40,739.0 L1182.54,742.5 L1182.67,736.0 L1182.80,733.0 L1182.93,739.5 L1183.07,735.7 L1183.20,738.1 L1183.33,811.0" fill="none" stroke="#0000ff" stroke-width="1.5" stroke-linejoin="round" clip-path="url(#c4)"/>
<line x1="911.90" y1="637" x2="911.90" y2="644" stroke="#000" stroke-width="1.5"/>
<line x1="978.20" y1="637" x2="978.20" y2="644" stroke="#000" stroke-width="1.5"/>
<line x1="1044.50" y1="637" x2="1044.50" y2="644" stroke="#000" stroke-width="1.5"/>
<line x1="1110.80" y1="637" x2="1110.80" y2="644" stroke="#000" stroke-width="1.5"/>
<line x1="1177.10" y1="637" x2="1177.10" y2="644" stroke="#000" stroke-width="1.5"/>
<line x1="904" y1="633.90" x2="911" y2="633.90" stroke="#000" stroke-width="1.5"/>
<line x1="904" y1="607.77" x2="911" y2="607.77" stroke="#000" stroke-width="1.5"/>
<line x1="904" y1="581.65" x2="911" y2="581.65" stroke="#000" stroke-width="1.5"/>
<line x1="904" y1="555.52" x2="911" y2="555.52" stroke="#000" stroke-width="1.5"/>
<line x1="904" y1="529.40" x2="911" y2="529.40" stroke="#000" stroke-width="1.5"/>
<rect x="1108.8" y="519.8" width="73.1" height="16" rx="2" fill="#fff" fill-opacity="0.8" stroke="#cccccc" stroke-width="1"/>
<line x1="1111.3" y1="527.6" x2="1133.6" y2="527.6" stroke="#0000ff" stroke-width="1.5"/>
<rect x="911" y="517" width="274" height="120" fill="none" stroke="#000" stroke-width="1.6"/>
<line x1="911.90" y1="809" x2="911.90" y2="816" stroke="#000" stroke-width="1.5"/>
<line x1="978.20" y1="809" x2="978.20" y2="816" stroke="#000" stroke-width="1.5"/>
<line x1="1044.50" y1="809" x2="1044.50" y2="816" stroke="#000" stroke-width="1.5"/>
<line x1="1110.80" y1="809" x2="1110.80" y2="816" stroke="#000" stroke-width="1.5"/>
<line x1="1177.10" y1="809" x2="1177.10" y2="816" stroke="#000" stroke-width="1.5"/>
<line x1="904" y1="806.00" x2="911" y2="806.00" stroke="#000" stroke-width="1.5"/>
<line x1="904" y1="780.00" x2="911" y2="780.00" stroke="#000" stroke-width="1.5"/>
<line x1="904" y1="754.00" x2="911" y2="754.00" stroke="#000" stroke-width="1.5"/>
<line x1="904" y1="728.00" x2="911" y2="728.00" stroke="#000" stroke-width="1.5"/>
<line x1="904" y1="702.00" x2="911" y2="702.00" stroke="#000" stroke-width="1.5"/>
<rect x="1108.8" y="692.1" width="73.1" height="16" rx="2" fill="#fff" fill-opacity="0.8" stroke="#cccccc" stroke-width="1"/>
<line x1="1111.3" y1="699.9" x2="1133.6" y2="699.9" stroke="#0000ff" stroke-width="1.5"/>
<rect x="911" y="689" width="274" height="120" fill="none" stroke="#000" stroke-width="1.6"/>
<text x="5.57" y="23.10" font-size="17.91" textLength="165.23" lengthAdjust="spacingAndGlyphs">2025-05-26: HAWKI</text>
<text x="335.98" y="22.35" font-size="13.35" textLength="55.61" lengthAdjust="spacingAndGlyphs">type info</text>
<text x="629.24" y="22.35" font-size="13.35" textLength="66.52" lengthAdjust="spacingAndGlyphs">set-up info</text>
<text x="6.64" y="44.90" font-size="13.35" textLength="61.93" lengthAdjust="spacingAndGlyphs">ORIGFILE:</text>
<text x="74.44" y="44.90" font-size="13.35" textLength="254.60" lengthAdjust="spacingAndGlyphs">HAWKI_IMG_STD_StandardStar147_0008</text>
<text x="6.40" y="62.10" font-size="13.35" textLength="54.85" lengthAdjust="spacingAndGlyphs">ARCFILE:</text>
<text x="74.38" y="62.10" font-size="13.35" textLength="233.31" lengthAdjust="spacingAndGlyphs">HAWKI.2025-05-27T07:54:00.348.fits</text>
<text x="5.48" y="80.20" font-size="13.35" textLength="61.64" lengthAdjust="spacingAndGlyphs">raw_type:</text>
<text x="75.74" y="80.20" font-size="13.35" textLength="24.71" lengthAdjust="spacingAndGlyphs">STD</text>
<text x="7.17" y="96.75" font-size="13.35" textLength="56.33" lengthAdjust="spacingAndGlyphs">do_class:</text>
<text x="74.93" y="96.75" font-size="13.35" textLength="25.55" lengthAdjust="spacingAndGlyphs">STD</text>
<text x="7.13" y="114.00" font-size="13.35" textLength="64.83" lengthAdjust="spacingAndGlyphs">extension:</text>
<text x="74.75" y="114.00" font-size="13.35" textLength="7.80" lengthAdjust="spacingAndGlyphs">1</text>
<text x="335.17" y="44.80" font-size="13.35" textLength="68.93" lengthAdjust="spacingAndGlyphs">DPR.CATG:</text>
<text x="404.99" y="44.80" font-size="13.35" textLength="35.53" lengthAdjust="spacingAndGlyphs">CALIB</text>
<text x="335.21" y="61.80" font-size="13.35" textLength="65.29" lengthAdjust="spacingAndGlyphs">DPR.TYPE:</text>
<text x="405.03" y="61.80" font-size="13.35" textLength="25.13" lengthAdjust="spacingAndGlyphs">STD</text>
<text x="335.19" y="79.50" font-size="13.35" textLength="67.93" lengthAdjust="spacingAndGlyphs">DPR.TECH:</text>
<text x="404.46" y="79.50" font-size="13.35" textLength="40.88" lengthAdjust="spacingAndGlyphs">IMAGE</text>
<text x="335.94" y="96.90" font-size="13.35" textLength="44.02" lengthAdjust="spacingAndGlyphs">TPL.ID:</text>
<text x="404.52" y="96.90" font-size="13.35" textLength="205.66" lengthAdjust="spacingAndGlyphs">HAWKI_img_cal_StandardStarNG</text>
<text x="628.75" y="42.75" font-size="11.23" textLength="106.17" lengthAdjust="spacingAndGlyphs">DET.NCORRS.NAME:</text>
<text x="758.89" y="42.75" font-size="11.23" textLength="44.28" lengthAdjust="spacingAndGlyphs">NonDest</text>
<text x="628.68" y="55.60" font-size="11.23" textLength="45.35" lengthAdjust="spacingAndGlyphs">DET.DIT:</text>
<text x="759.73" y="55.60" font-size="11.23" textLength="54.70" lengthAdjust="spacingAndGlyphs">1.7000000</text>
<text x="628.68" y="68.45" font-size="11.23" textLength="53.72" lengthAdjust="spacingAndGlyphs">DET.NDIT:</text>
<text x="760.15" y="68.45" font-size="11.23" textLength="6.21" lengthAdjust="spacingAndGlyphs">5</text>
<text x="628.62" y="81.30" font-size="11.23" textLength="56.63" lengthAdjust="spacingAndGlyphs">INS.MODE:</text>
<text x="758.81" y="81.30" font-size="11.23" textLength="20.69" lengthAdjust="spacingAndGlyphs">IMG</text>
<text x="628.62" y="94.20" font-size="11.23" textLength="86.03" lengthAdjust="spacingAndGlyphs">INS.FILT1.NAME:</text>
<text x="758.89" y="94.20" font-size="11.23" textLength="8.25" lengthAdjust="spacingAndGlyphs">H</text>
<text x="933.12" y="42.75" font-size="11.23" textLength="86.74" lengthAdjust="spacingAndGlyphs">INS.FILT2.NAME:</text>
<text x="1064.75" y="42.75" font-size="11.23" textLength="28.39" lengthAdjust="spacingAndGlyphs">OPEN</text>
<text x="933.62" y="55.60" font-size="11.23" textLength="90.72" lengthAdjust="spacingAndGlyphs">OBS.TARG.NAME:</text>
<text x="1064.97" y="55.60" font-size="11.23" textLength="59.60" lengthAdjust="spacingAndGlyphs">Touchstone</text>
<text x="103.02" y="768.90" font-size="10.70" textLength="5.91" lengthAdjust="spacingAndGlyphs">0</text>
<text x="166.05" y="768.90" font-size="10.70" textLength="18.93" lengthAdjust="spacingAndGlyphs">250</text>
<text x="235.77" y="768.90" font-size="10.70" textLength="18.76" lengthAdjust="spacingAndGlyphs">500</text>
<text x="305.26" y="768.90" font-size="10.70" textLength="18.83" lengthAdjust="spacingAndGlyphs">750</text>
<text x="371.50" y="768.90" font-size="10.70" textLength="25.18" lengthAdjust="spacingAndGlyphs">1000</text>
<text x="441.08" y="768.90" font-size="10.70" textLength="25.18" lengthAdjust="spacingAndGlyphs">1250</text>
<text x="510.66" y="768.90" font-size="10.70" textLength="25.18" lengthAdjust="spacingAndGlyphs">1500</text>
<text x="580.24" y="768.90" font-size="10.70" textLength="25.18" lengthAdjust="spacingAndGlyphs">1750</text>
<text x="649.90" y="768.90" font-size="10.70" textLength="25.30" lengthAdjust="spacingAndGlyphs">2000</text>
<text x="84.77" y="750.10" font-size="10.70" textLength="5.91" lengthAdjust="spacingAndGlyphs">0</text>
<text x="71.81" y="680.52" font-size="10.70" textLength="18.93" lengthAdjust="spacingAndGlyphs">250</text>
<text x="71.97" y="610.94" font-size="10.70" textLength="18.76" lengthAdjust="spacingAndGlyphs">500</text>
<text x="71.91" y="541.36" font-size="10.70" textLength="18.83" lengthAdjust="spacingAndGlyphs">750</text>
<text x="65.51" y="471.78" font-size="10.70" textLength="25.18" lengthAdjust="spacingAndGlyphs">1000</text>
<text x="65.51" y="402.20" font-size="10.70" textLength="25.18" lengthAdjust="spacingAndGlyphs">1250</text>
<text x="65.51" y="332.62" font-size="10.70" textLength="25.18" lengthAdjust="spacingAndGlyphs">1500</text>
<text x="65.51" y="263.04" font-size="10.70" textLength="25.18" lengthAdjust="spacingAndGlyphs">1750</text>
<text x="65.39" y="193.46" font-size="10.70" textLength="25.30" lengthAdjust="spacingAndGlyphs">2000</text>
<text x="388.29" y="786.90" font-size="10.70" textLength="6.79" lengthAdjust="spacingAndGlyphs">X</text>
<text transform="translate(52.90,461.00) rotate(-90)" x="-3.28" y="0.00" font-size="10.70" textLength="6.58" lengthAdjust="spacingAndGlyphs">Y</text>
<text x="761.95" y="133.80" font-size="10.70" textLength="25.18" lengthAdjust="spacingAndGlyphs">1900</text>
<text x="761.96" y="222.72" font-size="10.70" textLength="25.03" lengthAdjust="spacingAndGlyphs">1875</text>
<text x="761.95" y="311.65" font-size="10.70" textLength="25.18" lengthAdjust="spacingAndGlyphs">1850</text>
<text x="761.96" y="400.57" font-size="10.70" textLength="25.03" lengthAdjust="spacingAndGlyphs">1825</text>
<text x="761.95" y="489.50" font-size="10.70" textLength="25.18" lengthAdjust="spacingAndGlyphs">1800</text>
<text x="761.96" y="578.43" font-size="10.70" textLength="25.03" lengthAdjust="spacingAndGlyphs">1775</text>
<text x="761.95" y="667.35" font-size="10.70" textLength="25.18" lengthAdjust="spacingAndGlyphs">1750</text>
<text x="761.96" y="756.27" font-size="10.70" textLength="25.03" lengthAdjust="spacingAndGlyphs">1725</text>
<text x="941.38" y="255.90" font-size="10.70" textLength="25.18" lengthAdjust="spacingAndGlyphs">1400</text>
<text x="1036.38" y="255.90" font-size="10.70" textLength="25.18" lengthAdjust="spacingAndGlyphs">1800</text>
<text x="1131.46" y="255.90" font-size="10.70" textLength="25.30" lengthAdjust="spacingAndGlyphs">2200</text>
<text x="890.79" y="228.90" font-size="10.70" textLength="5.74" lengthAdjust="spacingAndGlyphs">2</text>
<text x="890.80" y="199.88" font-size="10.70" textLength="5.62" lengthAdjust="spacingAndGlyphs">3</text>
<text x="890.44" y="170.86" font-size="10.70" textLength="5.84" lengthAdjust="spacingAndGlyphs">4</text>
<text x="890.80" y="141.84" font-size="10.70" textLength="5.62" lengthAdjust="spacingAndGlyphs">5</text>
<text x="1031.18" y="273.75" font-size="10.70" textLength="33.59" lengthAdjust="spacingAndGlyphs">counts</text>
<text transform="translate(877.60,173.30) rotate(-90)" x="-34.73" y="0.00" font-size="10.70" textLength="68.71" lengthAdjust="spacingAndGlyphs">log frequency</text>
<text transform="translate(1194.10,175.00) rotate(90)" x="-45.29" y="0.00" font-size="10.70" textLength="90.52" lengthAdjust="spacingAndGlyphs">histogram (detail)</text>
<text x="925.92" y="427.90" font-size="10.70" textLength="5.91" lengthAdjust="spacingAndGlyphs">0</text>
<text x="987.75" y="427.90" font-size="10.70" textLength="31.73" lengthAdjust="spacingAndGlyphs">20000</text>
<text x="1062.79" y="427.90" font-size="10.70" textLength="31.59" lengthAdjust="spacingAndGlyphs">40000</text>
<text x="1137.35" y="427.90" font-size="10.70" textLength="31.73" lengthAdjust="spacingAndGlyphs">60000</text>
<text x="890.47" y="408.70" font-size="10.70" textLength="5.91" lengthAdjust="spacingAndGlyphs">0</text>
<text x="890.79" y="374.40" font-size="10.70" textLength="5.74" lengthAdjust="spacingAndGlyphs">2</text>
<text x="890.44" y="340.10" font-size="10.70" textLength="5.84" lengthAdjust="spacingAndGlyphs">4</text>
<text x="890.35" y="305.80" font-size="10.70" textLength="6.10" lengthAdjust="spacingAndGlyphs">6</text>
<text x="1031.18" y="445.75" font-size="10.70" textLength="33.59" lengthAdjust="spacingAndGlyphs">counts</text>
<text transform="translate(877.90,345.80) rotate(-90)" x="-34.73" y="0.00" font-size="10.70" textLength="68.71" lengthAdjust="spacingAndGlyphs">log frequency</text>
<text transform="translate(1194.10,349.40) rotate(90)" x="-38.87" y="0.00" font-size="10.70" textLength="77.67" lengthAdjust="spacingAndGlyphs">histogram (full)</text>
<text x="908.92" y="659.90" font-size="10.70" textLength="5.91" lengthAdjust="spacingAndGlyphs">0</text>
<text x="968.81" y="659.90" font-size="10.70" textLength="18.76" lengthAdjust="spacingAndGlyphs">500</text>
<text x="1031.68" y="659.90" font-size="10.70" textLength="25.18" lengthAdjust="spacingAndGlyphs">1000</text>
<text x="1097.98" y="659.90" font-size="10.70" textLength="25.18" lengthAdjust="spacingAndGlyphs">1500</text>
<text x="1164.36" y="659.90" font-size="10.70" textLength="25.30" lengthAdjust="spacingAndGlyphs">2000</text>
<text x="871.21" y="638.00" font-size="10.70" textLength="25.18" lengthAdjust="spacingAndGlyphs">1250</text>
<text x="871.21" y="611.88" font-size="10.70" textLength="25.18" lengthAdjust="spacingAndGlyphs">1500</text>
<text x="871.21" y="585.75" font-size="10.70" textLength="25.18" lengthAdjust="spacingAndGlyphs">1750</text>
<text x="871.09" y="559.62" font-size="10.70" textLength="25.30" lengthAdjust="spacingAndGlyphs">2000</text>
<text x="871.09" y="533.50" font-size="10.70" textLength="25.30" lengthAdjust="spacingAndGlyphs">2250</text>
<text x="1044.19" y="677.75" font-size="10.70" textLength="6.79" lengthAdjust="spacingAndGlyphs">X</text>
<text transform="translate(859.60,577.80) rotate(-90)" x="-16.82" y="0.00" font-size="10.70" textLength="33.59" lengthAdjust="spacingAndGlyphs">counts</text>
<text transform="translate(1194.00,575.80) rotate(90)" x="-18.80" y="0.00" font-size="10.70" textLength="37.23" lengthAdjust="spacingAndGlyphs">cut in x</text>
<text x="1137.20" y="531.10" font-size="10.70" textLength="40.09" lengthAdjust="spacingAndGlyphs">y=1024</text>
<text x="908.92" y="831.90" font-size="10.70" textLength="5.91" lengthAdjust="spacingAndGlyphs">0</text>
<text x="968.81" y="831.90" font-size="10.70" textLength="18.76" lengthAdjust="spacingAndGlyphs">500</text>
<text x="1031.68" y="831.90" font-size="10.70" textLength="25.18" lengthAdjust="spacingAndGlyphs">1000</text>
<text x="1097.98" y="831.90" font-size="10.70" textLength="25.18" lengthAdjust="spacingAndGlyphs">1500</text>
<text x="1164.36" y="831.90" font-size="10.70" textLength="25.30" lengthAdjust="spacingAndGlyphs">2000</text>
<text x="871.21" y="810.10" font-size="10.70" textLength="25.18" lengthAdjust="spacingAndGlyphs">1250</text>
<text x="871.21" y="784.10" font-size="10.70" textLength="25.18" lengthAdjust="spacingAndGlyphs">1500</text>
<text x="871.21" y="758.10" font-size="10.70" textLength="25.18" lengthAdjust="spacingAndGlyphs">1750</text>
<text x="871.09" y="732.10" font-size="10.70" textLength="25.30" lengthAdjust="spacingAndGlyphs">2000</text>
<text x="871.09" y="706.10" font-size="10.70" textLength="25.30" lengthAdjust="spacingAndGlyphs">2250</text>
<text x="1044.32" y="849.30" font-size="10.70" textLength="6.58" lengthAdjust="spacingAndGlyphs">Y</text>
<text transform="translate(859.60,749.80) rotate(-90)" x="-16.82" y="0.00" font-size="10.70" textLength="33.59" lengthAdjust="spacingAndGlyphs">counts</text>
<text transform="translate(1194.00,747.80) rotate(90)" x="-18.80" y="0.00" font-size="10.70" textLength="37.11" lengthAdjust="spacingAndGlyphs">cut in y</text>
<text x="1137.08" y="703.40" font-size="10.70" textLength="40.21" lengthAdjust="spacingAndGlyphs">x=1024</text>
<rect x="1" y="849" width="1243" height="19.6" fill="#ececec"/>
<text x="5.64" y="863.90" font-size="11.23" textLength="173.87" lengthAdjust="spacingAndGlyphs">powered by QC: www.eso.org/HC</text>
<text x="935.73" y="863.80" font-size="11.23" textLength="303.95" lengthAdjust="spacingAndGlyphs">created by qc_rawdisp.py v1.2.3 on 2025-05-27T08:36:49</text>
</svg>
<script>

(function(){
var H="cacbcbcbcccccdcdcdcececfcfcfd0d0d1d2d2d3d3d4d5d5d6d6d7d8d8d9d9dadadadadadadadadadadadadadadadadadadadadadaebf3f3f3f2f2f2f1f1f1f0f0dfd6d6d6d6d6d7d7d7d7d7d7d7d8d8d8d8d9d9dadadbdbdcdddddededfe0e0e0e0e0e0e0e0e0e0e0e0e0e0e0e0e0e0e0e0e0dfdededddcdcdbdadad9d8d8d7d6d6d5d4d4d3d2d1d1d0cfcfcececdcdcccccbcbcacac9c9c8c7c7c6c6c5c5c4c4c3c3c2c2c1c0c0bab9b9b8b8b8b7b7b7b6b6b6b5b5b5b4b4b3b3b3b2b2cacacbcbcccccdcdcdcececfcfcfd0d0d1d2d2d3d3d4d5d5d6d6d7d7d8d9d9dadadadadadadadadadadadadadadadadadadadadad9eaf3f3f2f2f2f1f1f1f0f0f0ded6d6d6d6d6d6d6d7d7d7d7d7d7d7d8d8d8d9d9dadbdbdcdcdddddedfdfe0dfdfdfdfdfdfdfdfdfdfdfdfdfdfdfdfdfdfdfdededddcdcdbdadad9d8d8d7d6d6d5d4d4d3d2d2d1d0d0cfcececdcdcccccbcbcacac9c9c8c8c7c7c6c5c5c4c4c3c3c2c2c1c1c0c0b9b9b8b8b8b7b7b7b6b6b6b5b5b5b4b4b3b3b3b2b2b2cacacbcbcccccccdcdcececfcfcfd0d0d1d1d2d3d3d4d4d5d6d6d7d7d8d9d9dadadadadad9d9d9d9d9d9d9d9d9d9d9d9d9d9d9d9d9eaf3f2f2f2f1f1f1f0f0f0f0ded5d5d6d6d6d6d6d6d6d7d7d7d7d7d7d8d8d9d9dadadbdbdcdddddededfdfdfdfdfdfdfdfdfdfdfdfdfdfdfdfdfdfdededededddcdcdbdadad9d8d8d7d6d6d5d4d4d3d2d2d1d0d0cfcfcecdcdcccccbcbcacac9c9c8c8c7c7c6c6c5c5c4c3c3c2c2c1c1c0c0bfb9b9b8b8b7b7b7b6b6b6b5b5b5b4b4b4b3b3b2b2b2b1cacacbcbcccccccdcdcecececfcfd0d0d1d1d2d3d3d4d4d5d5d6d7d7d8d8d9d9d9d9d9d9d9d9d9d9d9d9d9d9d9d9d9d9d9d9d9d9d9eaf2f2f2f1f1f1f0f0f0f0efded5d5d5d5d6d6d6d6d6d6d6d7d7d7d7d7d8d8d9dadadbdbdcdcdddddedfdfdfdfdfdfdfdededededededededededededededddddcdbdbdad9d9d8d7d7d6d5d5d4d3d3d2d1d1d0cfcfcececdcccccbcbcacac9c9c8c8c7c7c6c6c5c5c4c4c3c3c2c2c1c1c0bfbfb9b8b8b7b7b7b6b6b6b5b5b5b4b4b4b3b3b2b2b2b1b1cacacbcbcbcccccdcdcecececfcfd0d0d1d1d2d2d3d4d4d5d5d6d6d7d8d8d9d9d9d9d9d9d9d9d9d9d9d9d9d9d9d9d9d9d9d9d9d9d8eaf2f2f1f1f1f0f0f0efefefddd5d5d5d5d5d5d6d6d6d6d6d6d6d7d7d7d8d8d9d9dadadbdbdcdddddededfdedededededededededededededddddddddddddddcdbdbdad9d9d8d7d7d6d5d5d4d3d3d2d1d1d0cfcfcececdcdcccbcbcacac9c9c8c8c7c7c6c6c5c5c4c4c3c3c2c2c1c1c0c0bfbfb8b8b8b7b7b6b6b6b5b5b5b4b4b4b3b3b3b2b2b1b1b1cacacbcbcbcccccdcdcdcececfcfcfd0d1d1d2d2d3d3d4d5d5d6d6d7d7d8d9d9d9d9d9d9d9d9d9d9d9d9d9d9d9d9d8d8d8d8d8d8d8e9f2f1f1f1f0f0f0efefefefddd4d5d5d5d5d5d5d5d6d6d6d6d6d6d7d7d7d8d8d9dadadbdbdcdcdddddedededededededededddddddddddddddddddddddcdcdbdbdad9d9d8d7d7d6d5d5d4d3d3d2d2d1d0d0cfcececdcdcccccbcbcacac9c8c8c7c7c6c6c5c5c4c4c3c3c2c2c1c1c0c0bfbfbeb8b8b7b7b6b6b6b5b5b5b4b4b4b3b3b3b2b2b1b1b1b0cacacacbcbcccccdcdcdcececfcfcfd0d1d1d2d2d3d3d4d4d5d6d6d7d7d8d8d9d9d9d9d9d9d9d9d9d8d8d8d8d8d8d8d8d8d8d8d8d8e9f1f1f1f0f0f0efefefefeeddd4d4d4d5d5d5d5d5d5d5d6d6d6d6d6d7d7d8d8d9d9dadadbdbdcdddddedededededddddddddddddddddddcdcdcdcdcdcdcdbdbdad9d9d8d7d7d6d5d5d4d4d3d2d2d1d0d0cfcececdcdcccccbcbcacac9c9c8c8c7c7c6c6c5c5c4c4c3c3c2c2c1c0c0bfbfbebeb8b7b7b7b6b6b5b5b5b4b4b4b3b3b3b2b2b2b1b1b0b0cacacacbcbcccccccdcdcececfcfcfd0d0d1d2d2d3d3d4d4d5d5d6d7d7d8d8d9d9d9d9d9d8d8d8d8d8d8d8d8d8d8d8d8d8d8d8d8d8e9f1f1f0f0f0efefefefeeeedcd4d4d4d4d4d5d5d5d5d5d5d6d6d6d6d6d7d7d8d8d9dadadbdbdcdcdddddedddddddddddddddddcdcdcdcdcdcdcdcdbdbdbdbdad9d9d8d7d7d6d6d5d4d4d3d2d2d1d0d0cfcfcecdcdcccccbcbcacac9c9c8c8c7c7c6c6c5c5c4c4c3c3c2c2c1c1c0c0bfbfbebeb7b7b7b6b6b5b5b5b4b4b4b3b3b3b2b2b2b1b1b0b0b0cacacacbcbcccccccdcdcecececfcfd0d0d1d1d2d3d3d4d4d5d5d6d6d7d8d8d9d9d8d8d8d8d8d8d8d8d8d8d8d8d8d8d8d7d7d7d7d7e8f1f0f0f0efefefeeeeeeeedcd3d4d4d4d4d4d4d5d5d5d5d5d5d6d6d6d7d7d8d8d9d9dadadbdbdcdcdddddddddddddcdcdcdcdcdcdcdbdbdbdbdbdbdbdadad9d9d8d7d7d6d6d5d4d4d3d2d2d1d1d0cfcfcecdcdcccccbcbcacac9c9c8c8c7c7c6c6c5c5c4c4c3c3c2c2c1c1c0c0bfbfbebebdb7b7b6b6b6b5b5b4b4b4b3b3b3b2b2b2b1b1b0b0b0afc9cacacbcbcbcccccdcdcecececfcfd0d0d1d1d2d2d3d4d4d5d5d6d6d7d7d8d8d8d8d8d8d8d8d8d8d8d8d8d8d7d7d7d7d7d7d7d7d7e8f0f0f0efefefeeeeeeeeeddcd3d3d3d4d4d4d4d4d4d5d5d5d5d5d6d6d6d7d7d8d8d9d9dadbdbdcdcdddddddddcdcdcdcdcdcdbdbdbdbdbdbdadadadadad9d9d8d7d7d6d6d5d4d4d3d3d2d1d1d0cfcfcececdcccccbcbcacac9c9c8c8c7c7c6c6c5c5c4c4c3c3c2c2c1c1c0c0bfbfbebebdbdb6b6b6b5b5b4b4b4b3b3b3b2b2b2b1b1b1b0b0afafafc9cacacbcbcbcccccdcdcdcececfcfd0d0d1d1d2d2d3d3d4d5d5d6d6d7d7d8d8d8d8d8d8d8d8d8d8d8d7d7d7d7d7d7d7d7d7d7d7d7e8f0f0efefefeeeeeeeeededdbd3d3d3d3d3d4d4d4d4d4d5d5d5d5d5d6d6d7d7d8d8d9d9dadadbdbdcdcdddcdcdcdcdcdbdbdbdbdbdbdadadadadadad9d9d9d8d7d7d6d6d5d4d4d3d3d2d1d1d0cfcfcececdcccccbcbcacac9c9c8c8c7c7c6c6c5c5c4c4c3c3c2c2c1c1c1c0c0bfbfbebebdbdb5b5b5b4b4b4b3b3b2b2b2b1b1b1b0b0b0afafaeaeaec9cacacacbcbcccccdcdcdcececfcfd0d0d1d1d2d2d3d3d4d4d5d6d6d7d7d8d8d8d8d8d8d8d8d7d7d7d7d7d7d7d7d7d7d7d7d6d6d6e7f0efefefeeeeeeeeedededdbd2d3d3d3d3d3d4d4d4d4d4d4d5d5d5d5d6d6d7d7d8d8d9d9dadadbdbdcdcdcdcdcdbdbdbdbdbdadadadadadad9d9d9d9d9d8d7d7d6d6d5d4d4d3d3d2d1d1d0d0cfcececdcdcccbcbcacac9c9c8c8c7c7c6c6c5c5c4c4c3c3c3c2c2c1c1c0c0bfbfbebebdbdbcb4b4b4b3b3b3b2b2b1b1b1b0b0b0afafafaeaeadadadc9cacacacbcbcccccccdcdcececfcfcfd0d1d1d2d2d3d3d4d4d5d5d6d6d7d8d8d8d8d8d8d7d7d7d7d7d7d7d7d7d7d7d6d6d6d6d6d6e7efefefeeeeeeededededecdbd2d2d2d3d3d3d3d3d4d4d4d4d4d5d5d5d6d6d7d7d8d8d9d9dadadbdbdcdcdcdbdbdbdbdbdadadadadad9d9d9d9d9d8d8d8d7d7d6d6d5d4d4d3d3d2d1d1d0d0cfcececdcdcccbcbcacac9c9c8c8c7c7c6c6c5c5c5c4c4c3c3c2c2c1c1c0c0bfbfbebebdbdbcbcb3b3b3b2b2b2b1b1b0b0b0afafafaeaeaeadadadacacc9cacacacbcbcccccccdcdcecececfcfd0d0d1d1d2d3d3d4d4d5d5d6d6d7d7d8d8d8d7d7d7d7d7d7d7d7d7d7d6d6d6d6d6d6d6d6d6e7efefeeeeeeededededececdad2d2d2d2d3d3d3d3d3d4d4d4d4d4d5d5d5d6d6d7d7d8d8d9d9dadadbdbdcdbdbdbdbdadadadadad9d9d9d9d8d8d8d8d8d7d7d6d6d5d4d4d3d3d2d1d1d0d0cfcececdcdcccccbcacac9c9c8c8c7c7c6c6c5c5c5c4c4c3c3c2c2c1c1c0c0bfbfbebebebdbdbcbcb2b2b2b1b1b1b0b0afafafaeaeaeadadadacacacababc9c9cacacbcbcbcccccdcdcecececfcfd0d0d1d1d2d2d3d4d4d5d5d6d6d7d7d8d8d7d7d7d7d7d7d7d7d7d6d6d6d6d6d6d6d6d6d5d5e6efeeeeeeededededecececdad1d2d2d2d2d2d3d3d3d3d3d4d4d4d4d5d5d6d6d7d7d8d8d9d9dadadbdbdbdbdbdadadadadad9d9d9d9d8d8d8d8d7d7d7d7d6d6d5d4d4d3d3d2d1d1d0d0cfcfcecdcdcccccbcacac9c9c8c8c7c7c6c6c5c5c5c4c4c3c3c2c2c1c1c0c0c0bfbfbebebdbdbcbcbbb1b1b1b0b0b0afafaeaeaeadadadacacacabababaaaac9c9cacacbcbcbcccccdcdcdcececfcfd0d0d1d1d2d2d3d3d4d4d5d5d6d7d7d7d7d7d7d7d7d7d7d7d6d6d6d6d6d6d6d6d5d5d5d5d5e6eeeeeeededededecececebdad1d1d2d2d2d2d2d3d3d3d3d3d4d4d4d4d5d5d6d6d7d7d8d8d9d9dadadbdbdbdadadadad9d9d9d9d8d8d8d8d7d7d7d6d6d6d5d5d4d4d3d3d2d1d1d0d0cfcfcecdcdcccccbcacac9c9c8c8c7c7c6c6c6c5c5c4c4c3c3c2c2c1c1c1c0c0bfbfbebebdbdbcbcbcbbb0b0b0afafafaeaeadadadacacacabababaaaaaaa9a9c9c9cacacbcbcbcccccdcdcdcececfcfd0d0d1d1d2d2d3d3d4d4d5d5d6d6d7d7d7d7d7d7d7d7d6d6d6d6d6d6d6d6d5d5d5d5d5d5d5e6eeeeedededececececebebd9d1d1d1d1d2d2d2d2d3d3d3d3d3d4d4d4d5d5d6d6d7d7d7d8d8d9d9dadadbdadadad9d9d9d9d8d8d8d8d7d7d7d6d6d6d6d5d5d4d4d3d3d2d1d1d0d0cfcfcecdcdcccccbcbcac9c9c8c8c7c7c6c6c6c5c5c4c4c3c3c2c2c1c1c1c0c0bfbfbebebdbdbdbcbcbbbbafafafaeaeaeadadacacacabababaaaaaaa9a9a9a8a8c9c9cacacacbcbcccccccdcdcececfcfd0d0d1d1d2d2d3d3d4d4d5d5d6d6d7d7d7d7d7d7d6d6d6d6d6d6d6d6d5d5d5d5d5d5d5d4d4e5eeedededececececebebebd9d1d1d1d1d1d2d2d2d2d2d3d3d3d3d4d4d4d5d5d6d6d7d7d8d8d9d9dadadadadad9d9d9d8d8d8d8d7d7d7d6d6d6d6d5d5d5d4d4d3d2d2d1d1d0d0cfcfcecdcdcccccbcbcac9c9c8c8c7c7c6c6c5c5c5c4c4c3c3c2c2c1c1c1c0c0bfbfbebebebdbdbcbcbbbbbaaeaeaeadadadacacabababaaaaaaa9a9a9a8a8a8a7a7c9c9cacacacbcbcccccccdcdcecececfcfd0d0d1d1d2d2d3d4d4d5d5d6d6d7d7d7d7d7d6d6d6d6d6d6d6d5d5d5d5d5d5d5d4d4d4d4e5edededececececebebebead9d0d0d1d1d1d1d2d2d2d2d2d3d3d3d3d4d4d5d5d5d6d6d7d7d8d8d9d9dadadad9d9d9d8d8d8d7d7d7d6d6d6d6d5d5d5d4d4d4d3d2d2d1d1d0d0cfcfcecdcdcccccbcbcacac9c8c8c7c7c6c6c5c5c5c4c4c3c3c2c2c2c1c1c0c0bfbfbebebebdbdbcbcbbbbbbbaadadadacacacabababaaaaa9a9a9a8a8a8a7a7a7a6a6c9c9c9cacacbcbcbcccccdcdcecececfcfd0d0d1d1d2d2d3d3d4d4d5d5d6d6d7d7d7d6d6d6d6d6d6d5d5d5d5d5d5d5d4d4d4d4d4d4e5ededececececebebebeaead8d0d0d0d1d1d1d1d1d2d2d2d2d3d3d3d3d4d4d5d5d6d6d7d7d8d8d9d9d9dad9d9d9d8d8d8d7d7d7d6d6d6d5d5d5d4d4d4d3d3d2d2d1d1d0d0cfcececdcdcccccbcbcacac9c8c8c7c7c6c6c5c5c5c4c4c3c3c2c2c2c1c1c0c0bfbfbfbebebdbdbcbcbbbbbbbabaacacacabababaaaaaaa9a9a8a8a8a7a7a7a6a6a6a5a5c9c9c9cacacbcbcbcccccdcdcdcececfcfd0d0d1d1d2d2d3d3d4d4d5d5d6d6d7d6d6d6d6d6d6d6d5d5d5d5d5d5d4d4d4d4d4d4d3d3e4edececececebebebeaeaead8d0d0d0d0d0d1d1d1d1d2d2d2d2d3d3d3d4d4d4d5d5d6d6d7d7d8d8d9d9d9d9d9d8d8d7d7d7d6d6d6d5d5d5d4d4d4d3d3d3d2d2d1d1d0d0cfcececdcdcccccbcbcacac9c8c8c7c7c6c6c5c5c5c4c4c3c3c2c2c2c1c1c0c0bfbfbfbebebdbdbcbcbcbbbbbabab9abababaaaaaaa9a9a9a8a8a7a7a7a6a6a6a5a5a5a4a4c8c9c9cacacbcbcbcccccdcdcdcececfcfd0d0d1d1d2d2d3d3d4d4d5d5d6d6d6d6d6d6d6d6d5d5d5d5d5d5d4d4d4d4d4d4d3d3d3d3e4ecececebebebebeaeaeae9d8cfcfd0d0d0d0d1d1d1d1d2d2d2d2d3d3d3d4d4d5d5d6d6d7d7d7d8d8d9d9d8d8d8d7d7d7d6d6d6d5d5d5d4d4d4d3d3d2d2d2d1d1d0cfcfcececdcdcccccbcbcacac9c8c8c7c7c6c6c5c5c4c4c4c3c3c2c2c2c1c1c0c0bfbfbfbebebdbdbcbcbcbbbbbababab9aaaaaaa9a9a9a8a8a8a7a7a6a6a6a5a5a5a4a4a4a3a3c8c9c9cacacacbcbcccccccdcdcececfcfd0d0d1d1d2d2d3d3d3d4d4d5d5d6d6d6d6d6d6d5d5d5d5d5d5d4d4d4d4d4d4d3d3d3d3d3e4ececebebebebeaeaeae9e9d7cfcfcfd0d0d0d0d1d1d1d1d2d2d2d2d3d3d4d4d4d5d5d6d6d7d7d8d8d8d9d8d8d7d7d7d6d6d6d5d5d4d4d4d3d3d3d2d2d1d1d0d0cfcfcececdcdcccccbcbcacac9c8c8c7c7c6c6c5c5c4c4c4c3c3c2c2c2c1c1c0c0bfbfbfbebebdbdbdbcbcbbbbbababab9b9a9a9a9a8a8a8a7a7a7a6a6a5a5a5a4a4a4a3a3a3a2a2c8c9c9cacacacbcbcccccccdcdcecececfcfd0d0d1d1d2d2d3d3d4d4d5d5d6d6d6d6d6d5d5d5d5d5d5d4d4d4d4d4d3d3d3d3d3d3d2e3ecebebebebeaeaeae9e9e9d7cfcfcfcfd0d0d0d0d1d1d1d1d2d2d2d2d3d3d4d4d5d5d5d6d6d7d7d8d8d8d8d7d7d7d6d6d5d5d5d4d4d4d3d3d2d2d2d1d1d0d0cfcfcececdcdcccccbcbcacac9c8c8c7c7c6c6c5c5c4c4c4c3c3c2c2c1c1c1c0c0bfbfbfbebebdbdbdbcbcbbbbbbbabab9b9b8a8a8a8a7a7a7a6a6a6a5a5a4a4a4a3a3a3a2a2a2a1a1c8c9c9c9cacacbcbcbcccccdcdcdcececfcfd0d0d1d1d2d2d3d3d4d4d5d5d6d6d6d6d5d5d5d5d5d4d4d4d4d4d3d3d3d3d3d3d2d2d2e3ebebebeaeaeaeae9e9e9e8d7cececfcfcfcfd0d0d0d0d1d1d1d2d2d2d2d3d3d4d4d5d5d6d6d6d7d7d8d8d7d7d7d6d6d5d5d5d4d4d3d3d3d2d2d1d1d1d0d0cfcfcececdcdcccbcbcacac9c9c8c8c7c7c6c6c5c5c4c4c3c3c3c2c2c1c1c1c0c0bfbfbfbebebdbdbdbcbcbbbbbababab9b9b8b8a7a7a7a6a6a6a5a5a5a4a4a3a3a3a2a2a2a1a1a1a0a0c8c8c8c9c9cacacacbcbcccccccdcdcececfcfd0d0d0d1d1d2d2d3d3d4d4d5d5d5d5d4d4d4d4d4d3d3d3d3d3d2d2d2d2d2d1d1d1d1e2eaeaeae9e9e9e8e8e8e8e7d6cdcdcececececfcfcfcfd0d0d0d0d1d1d1d2d2d3d3d3d4d4d5d5d6d6d6d6d6d6d5d5d4d4d4d3d3d2d2d2d1d1d0d0cfcfcfcececdcdcccccbcbcacac9c8c8c7c7c6c6c5c5c4c4c3c3c2c2c2c1c1c0c0c0bfbfbebebebdbdbcbcbcbbbbbababab9b9b9b8b8b7b7a6a5a5a5a4a4a3a3a3a2a2a2a1a1a1a0a0a09f9f9f9ec7c7c8c8c8c9c9cacacacbcbcccccccdcdcececfcfcfd0d0d1d1d2d2d3d3d3d4d4d3d3d3d3d3d2d2d2d2d2d1d1d1d1d1d0d0d0d0d0e1e9e9e8e8e8e7e7e7e7e6e6d4cccccccdcdcdcdcdcececececfcfcfcfd0d0d1d1d1d2d2d3d3d4d4d4d5d5d4d4d4d3d3d2d2d1d1d1d0d0cfcfcfcececdcdcccccbcbcacac9c9c8c8c7c7c6c6c5c5c4c4c3c3c2c2c1c1c0c0c0bfbfbebebebdbdbcbcbcbbbbbbbabab9b9b9b8b8b7b7b7b6b6b6a4a3a3a2a2a2a1a1a1a0a0a09f9f9f9e9e9e9d9d9d9cc6c6c7c7c8c8c8c9c9cacacacbcbcccccccdcdcecececfcfd0d0d1d1d1d2d2d3d2d2d2d2d2d1d1d1d1d1d0d0d0d0d0cfcfcfcfcfcedfe8e7e7e7e7e6e6e6e5e5e5d3cbcbcbcbcbcccccccccdcdcdcdcdcecececfcfd0d0d0d1d1d2d2d2d3d3d3d3d2d2d1d1d1d0d0cfcfcfcececdcdcccccccbcbcacac9c9c8c8c7c7c6c6c5c5c4c4c3c2c2c1c1c0c0bfbfbfbebebdbdbdbcbcbcbbbbbababab9b9b9b8b8b8b7b7b6b6b6b5b5b5b4a2a1a1a0a0a09f9f9f9e9e9e9d9d9d9c9c9c9b9b9b9ac5c6c6c6c7c7c8c8c8c9c9c9cacacbcbcbcccccdcdcdcececfcfcfd0d0d1d1d1d1d1d1d1d0d0d0d0d0cfcfcfcfcecececececdcdcddee6e6e6e6e5e5e5e4e4e4e3d2c9c9cacacacacbcbcbcbcbcccccccccccdcdcecececfcfd0d0d0d1d1d2d2d1d1d0d0cfcfcfcececdcdcccccccbcbcacac9c9c8c8c7c7c6c6c5c5c4c4c3c3c2c2c1c1c0c0bfbfbebebdbdbdbcbcbbbbbbbababab9b9b9b8b8b7b7b7b6b6b6b5b5b5b4b4b4b3b39f9f9f9e9e9e9d9d9d9d9c9c9c9b9b9b9a9a9a999999c4c5c5c6c6c6c7c7c8c8c8c9c9c9cacacbcbcbcccccccdcdcecececfcfd0d0d0d0d0d0cfcfcfcfcecececececdcdcdcdcdccccccccdde5e5e5e4e4e4e3e3e3e2e2d1c8c8c8c9c9c9c9c9cacacacacacbcbcbcbcccccdcdcdcecececfcfd0d0d0cfcfcfcececdcdcccccccbcbcacac9c9c9c8c8c7c7c6c6c5c5c4c4c3c3c2c2c1c1c0c0bfbfbebebdbcbcbcbbbbbababab9b9b9b8b8b8b7b7b7b6b6b6b5b5b5b4b4b4b3b3b2b2b2b19d9d9d9c9c9c9c9b9b9b9a9a9a999999989898979797c4c4c4c5c5c6c6c6c7c7c7c8c8c9c9c9cacacacbcbcbcccccdcdcdcecececfcfcfcfcececececdcdcdcdcdcccccccccccbcbcbcbcadbe4e4e3e3e3e2e2e2e1e1e1cfc7c7c7c7c7c8c8c8c8c8c9c9c9c9c9cacacacbcbcbcccccccdcdcecececececdcdcdcccccbcbcacacac9c9c8c8c7c7c7c6c6c5c5c4c4c3c2c2c1c1c0c0bfbfbebebdbdbcbcbbbbbabab9b9b9b8b8b8b7b7b7b6b6b6b5b5b5b4b4b4b3b3b3b2b2b2b1b1b1b0b09c9b9b9b9a9a9a9a9999999898989797979696969595c3c3c4c4c4c5c5c5c6c6c7c7c7c8c8c8c9c9c9cacacacbcbcbcccccccdcdcecececdcdcdcdcccccccccccbcbcbcbcacacacacac9c9dae3e2e2e2e1e1e1e0e0e0e0cec5c6c6c6c6c6c6c7c7c7c7c7c8c8c8c8c8c9c9cacacacbcbcbcccccccdcdcccccbcbcacacac9c9c8c8c7c7c7c6c6c5c5c4c4c3c3c2c2c1c1c0c0bfbfbebebdbdbcbcbbbbbabab9b9b8b8b7b7b7b6b6b6b6b5b5b5b4b4b4b3b3b3b2b2b2b1b1b1b0b0b0afafaf9a9a9a99999999989898979797969696959595959494c2c3c3c3c4c4c4c5c5c5c6c6c6c7c7c8c8c8c9c9c9c9cacacacbcbcbcccccccdcccccccccbcbcbcbcbcacacacac9c9c9c9c9c8c8c8d9e1e1e1e0e0e0dfdfdfdfdecdc4c4c4c5c5c5c5c5c5c6c6c6c6c6c6c7c7c7c8c8c8c9c9c9cacacacbcbcbcbcacac9c9c8c8c7c7c7c6c6c5c5c4c4c4c3c3c2c2c1c1c0c0bfbfbebebdbcbcbbbbbabab9b9b8b8b7b7b6b6b6b5b5b5b5b4b4b4b3b3b3b2b2b2b1b1b1b0b0b0b0afafafaeaeaead99999898989897979796969695959595949494939393c1c2c2c2c3c3c4c4c4c5c5c5c6c6c6c7c7c7c8c8c8c8c9c9c9cacacacbcbcbcbcbcbcbcacacacacac9c9c9c9c8c8c8c8c8c7c7c7c7d8e0e0dfdfdfdededededdddcbc3c3c3c3c3c4c4c4c4c4c4c5c5c5c5c5c6c6c6c6c7c7c7c8c8c8c9c9c9c9c9c9c8c8c7c7c6c6c5c5c4c4c4c3c3c2c2c1c1c0c0bfbfbebebdbdbcbcbbbbbabab9b9b8b8b7b7b6b6b5b5b4b4b4b3b3b3b3b2b2b2b1b1b1b0b0b0b0afafafaeaeaeadadadadacac98979797969696969595959494949493939392929292c1c1c1c2c2c2c3c3c3c4c4c4c5c5c6c6c6c6c7c7c7c7c8c8c8c9c9c9c9cacacacacac9c9c9c9c9c8c8c8c8c7c7c7c7c6c6c6c6c6c5d6dfdededededddddddcdcdccac1c2c2c2c2c2c2c3c3c3c3c3c3c3c4c4c4c4c5c5c5c6c6c6c7c7c7c8c8c8c7c7c6c6c6c5c5c4c4c3c3c2c2c1c1c1c0c0bfbfbebebdbdbcbcbbbbbabab9b9b8b8b7b6b6b5b5b4b4b3b3b3b2b2b2b2b1b1b1b0b0b0b0afafafaeaeaeadadadadacacacabababab96969695959595949494939393939292929191919190c0c0c1c1c1c2c2c2c3c3c3c4c4c4c5c5c5c5c6c6c6c6c7c7c7c8c8c8c8c9c9c9c9c8c8c8c8c8c7c7c7c7c6c6c6c6c5c5c5c5c5c4c4d5dddddddddcdcdcdbdbdbdac9c0c0c0c1c1c1c1c1c1c1c2c2c2c2c2c2c3c3c3c3c4c4c4c5c5c5c6c6c6c6c6c5c5c4c4c3c3c2c2c2c1c1c0c0bfbfbebebebdbcbcbbbbbabab9b9b8b8b7b7b6b6b5b5b4b4b3b3b2b2b1b1b1b0b0b0b0afafafaeaeaeaeadadadadacacacababababaaaaaaa9a995959494949493939392929292919191919090908f8fbfbfc0c0c0c1c1c1c2c2c2c3c3c3c4c4c4c5c5c5c5c5c6c6c6c6c7c7c7c7c8c8c8c7c7c7c7c6c6c6c6c5c5c5c5c4c4c4c4c3c3c3c3d4dcdcdcdbdbdbdadadad9d9c8bfbfbfbfbfc0c0c0c0c0c0c0c0c1c1c1c1c1c2c2c2c3c3c3c3c4c4c4c5c4c4c4c3c3c2c2c1c1c0c0bfbfbfbebebdbdbcbcbbbbbabab9b9b8b8b7b7b6b6b5b5b4b4b3b3b2b2b1b0b0b0afafafafaeaeaeadadadadacacacacabababaaaaaaaaa9a9a9a9a8a8a8949393939292929291919191909090908f8f8f8e8e8ebebfbfbfc0c0c0c1c1c1c2c2c2c3c3c3c3c4c4c4c4c4c5c5c5c5c6c6c6c6c6c7c6c6c6c6c5c5c5c5c4c4c4c4c3c3c3c3c2c2c2c2c1d2dbdbdadadad9d9d9d8d8d8c6bebebebebebebebebfbfbfbfbfbfbfbfc0c0c0c0c1c1c1c2c2c2c2c3c3c3c2c2c1c1c1c0c0bfbfbebebdbdbcbcbbbbbbbabab9b9b8b8b7b6b6b5b5b4b4b3b3b2b2b1b1b0b0afafaeaeaeadadadadacacacacababababaaaaaaaaa9a9a9a8a8a8a8a7a7a7a7a692929291919191909090908f8f8f8f8e8e8e8e8d8d8dbdbebebebfbfbfc0c0c0c1c1c1c2c2c2c3c3c3c3c3c3c4c4c4c4c4c5c5c5c5c5c5c5c5c4c4c4c4c3c3c3c3c2c2c2c2c1c1c1c1c0c0d1dad9d9d9d8d8d8d7d7d7d7c5bcbcbdbdbdbdbdbdbdbdbdbdbebebebebebebfbfbfbfc0c0c0c1c1c1c1c1c1c0c0bfbfbebebebdbdbcbcbbbbbabab9b9b8b8b7b7b6b6b5b5b4b4b3b3b2b2b1b1b0b0afafaeaeadadacacacababababaaaaaaaaa9a9a9a9a8a8a8a8a8a7a7a7a7a6a6a6a6a5a59191909090908f8f8f8f8e8e8e8e8d8d8d8d8c8c8c8cbdbdbdbebebebfbfbfc0c0c0c1c1c1c1c2c2c2c2c2c2c3c3c3c3c3c4c4c4c4c4c4c4c3c3c3c3c2c2c2c2c1c1c1c1c0c0c0c0bfbfbfd0d8d8d8d7d7d7d6d6d6d6d5c4bbbbbbbbbbbbbcbcbcbcbcbcbcbcbcbcbdbdbdbdbebebebebfbfbfbfc0c0bfbfbebebdbdbcbcbbbbbabab9b9b9b8b8b7b7b6b6b5b5b4b4b3b3b2b2b1b0b0afafaeaeadadacacababaaaaaaaaaaa9a9a9a9a8a8a8a8a7a7a7a7a6a6a6a6a6a5a5a5a5a4a4a4a48f8f8f8f8e8e8e8e8d8d8d8d8d8c8c8c8c8b8b8b8b8abcbcbdbdbdbebebebebfbfbfc0c0c0c1c1c1c1c1c1c1c2c2c2c2c2c2c3c3c3c3c3c2c2c2c2c1c1c1c1c0c0c0c0bfbfbfbfbebebebecfd7d7d6d6d6d5d5d5d5d4d4c2bababababababababababbbbbbbbbbbbbbbbbcbcbcbcbdbdbdbdbebebebebebdbdbcbcbbbbbabab9b9b8b8b7b7b6b6b5b5b4b4b3b3b2b2b1b1b0b0afafaeaeadadacacababaaaaa9a9a9a8a8a8a8a7a7a7a7a7a6a6a6a6a5a5a5a5a5a4a4a4a4a3a3a3a3a3a28e8e8e8d8d8d8d8c8c8c8c8b8b8b8b8b8a8a8a8a8989bbbbbcbcbcbdbdbdbebebebfbfbfc0c0c0c0c0c0c0c0c1c1c1c1c1c1c1c2c2c2c1c1c1c1c0c0c0c0bfbfbfbfbebebebebdbdbdbdbccdd6d5d5d5d5d4d4d4d3d3d3c1b8b8b9b9b9b9b9b9b9b9b9b9b9b9b9babababababbbbbbbbbcbcbcbcbcbcbcbbbbbabab9b9b9b8b8b7b7b6b6b5b5b4b4b3b3b2b2b1b1b0b0afafaeaeadadacacabaaaaa9a9a8a8a7a7a7a7a6a6a6a6a6a5a5a5a5a5a4a4a4a4a3a3a3a3a3a2a2a2a2a2a1a1a18d8c8c8c8c8c8b8b8b8b8a8a8a8a8a89898989888888babbbbbbbcbcbcbdbdbdbdbebebebfbfbfbfbfbfbfbfc0c0c0c0c0c0c0c0c1c1c0c0c0c0bfbfbfbebebebebdbdbdbdbcbcbcbcbbbbccd4d4d4d4d3d3d3d2d2d2d1c0b7b7b7b7b7b7b7b8b8b8b8b8b8b8b8b8b8b8b9b9b9b9babababababbbbbbbabab9b9b8b8b7b7b6b6b5b5b4b4b3b3b2b2b2b1b0b0afafaeaeadadacacababaaaaa9a9a8a8a7a7a6a6a5a5a5a5a5a4a4a4a4a4a3a3a3a3a3a2a2a2a2a2a1a1a1a1a1a0a0a0a0a08b8b8b8b8a8a8a8a8a89898989888888888887878787babababbbbbbbbbcbcbcbdbdbdbebebebebebebebebebfbfbfbfbfbfbfbfbfbfbfbfbfbebebebdbdbdbdbcbcbcbcbbbbbbbbbababacbd3d3d3d2d2d2d1d1d1d0d0bfb6b6b6b6b6b6b6b6b6b6b6b6b6b6b7b7b7b7b7b7b8b8b8b8b8b9b9b9b9b9b9b8b8b7b7b6b6b5b5b4b4b3b3b2b2b1b1b0b0afafaeaeadadacacababaaaaa9a9a8a8a7a7a6a6a5a4a4a4a3a3a3a3a3a2a2a2a2a2a2a1a1a1a1a1a0a0a0a0a0a09f9f9f9f9f9e9e8a8a8a89898989888888888887878787878686868686b9b9b9babababbbbbbbbbcbcbcbdbdbdbdbdbdbdbdbdbebebebebebebebebebebebebdbdbdbdbcbcbcbbbbbbbbbabababab9b9b9b8c9d2d2d1d1d1d0d0d0cfcfcfbdb5b5b5b5b5b5b5b5b5b5b5b5b5b5b5b5b5b6b6b6b6b6b6b7b7b7b7b7b8b7b7b6b6b5b5b4b4b4b3b3b2b2b1b1b0b0afafaeaeadadacacabaaaaa9a9a8a8a7a7a6a6a5a5a4a4a3a3a2a2a2a2a1a1a1a1a1a1a0a0a0a0a09f9f9f9f9f9f9e9e9e9e9e9e9d9d9d9d89888888888887878787878686868686858585858584b8b8b9b9b9bababababbbbbbbcbcbcbcbcbcbcbcbcbcbdbdbdbdbdbdbdbdbdbdbdbcbcbcbcbbbbbbbabababab9b9b9b9b8b8b8b7b7c8d1d0d0d0cfcfcfcecececebcb3b3b3b3b3b3b3b3b3b3b4b4b4b4b4b4b4b4b4b4b5b5b5b5b5b5b6b6b6b6b5b5b4b4b3b3b2b2b1b1b0b0afafaeaeadadacacababaaaaa9a9a8a8a7a7a6a6a5a5a4a4a3a3a2a2a1a1a0a0a0a0a09f9f9f9f9f9f9e9e9e9e9e9e9d9d9d9d9d9d9c9c9c9c9c9c9b87878787868686868685858585858484848484838383b7b8b8b8b8b9b9b9bababababbbbbbbbbbbbbbbbbbbbbcbcbcbcbcbcbcbcbcbcbbbbbbbbbabababab9b9b9b8b8b8b8b7b7b7b6b6b6c7cfcfcfcecececdcdcdcdccbbb2b2b2b2b2b2b2b2b2b2b2b2b2b2b2b2b2b3b3b3b3b3b3b4b4b4b4b4b4b4b4b3b3b2b2b1b1b0b0afafaeaeadadacacababaaaaa9a9a8a8a7a7a6a6a5a4a4a3a3a2a2a1a1a0a09f9f9e9e9e9e9e9e9e9d9d9d9d9d9d9d9c9c9c9c9c9c9b9b9b9b9b9b9b9a9a9a86868685858585858484848484838383838382828282b7b7b7b7b8b8b8b8b9b9b9babababababababababababbbbbbbbbbbbbbbbbbbbbababab9b9b9b9b8b8b8b7b7b7b7b6b6b6b5b5b5b5c6cececdcdcdcccccccccbcbb9b1b1b1b1b1b1b1b1b1b1b1b1b1b1b1b1b1b1b1b1b2b2b2b2b2b2b2b3b3b3b2b2b1b1b0b0afafaeadadacacababaaaaa9a9a8a8a7a7a6a6a5a5a4a4a3a3a2a2a1a1a0a09f9f9e9e9d9d9d9d9c9c9c9c9c9c9c9b9b9b9b9b9b9b9a9a9a9a9a9a9a99999999999985848484848483838383838382828282828181818181b6b6b6b7b7b7b7b8b8b8b9b9b9b9babababababababababababababababababab9b9b9b8b8b8b8b7b7b7b6b6b6b6b5b5b5b4b4b4b4c5cdcdcccccccbcbcbcbcacab8b0b0b0b0b0b0b0b0b0b0b0b0b0b0b0b0b0b0b0b0b0b1b1b1b1b1b1b1b2b1b1b0b0afafaeaeadadacacababaaaaa9a9a8a8a7a7a6a6a5a5a4a3a3a2a2a1a1a0a09f9f9e9e9d9d9c9c9b9b9b9b9b9b9b9b9a9a9a9a9a9a9a99999999999999999898989898989883838383838282828282828181818181818080808080b5b5b6b6b6b6b7b7b7b8b8b8b8b9b9b9b9b9b9b9b9b9b9b9b9b9b9b9b9b9b9b9b8b8b8b8b7b7b7b6b6b6b6b5b5b5b5b4b4b4b3b3b3c4cccccccbcbcbcacacacac9b8afafafafafafafafafafafafafafafafafafafb0b0b0b0b0b0b0b0b1b1b1b0afafaeaeadadacacababaaaaa9a9a8a8a7a7a6a6a5a5a4a4a3a3a2a1a1a0a09f9f9e9e9d9d9c9c9b9b9a9a9a9a9a9a9a9a9999999999999999989898989898989797979797979782828282828281818181818080808080807f7f7f7f7fb4b5b5b5b6b6b6b6b7b7b7b7b8b8b8b8b8b8b8b8b8b8b8b8b8b8b8b8b8b8b8b8b8b7b7b7b7b6b6b6b5b5b5b5b4b4b4b3b3b3b3b2b2c3cccbcbcbcacacacac9c9c9b7aeaeaeaeaeaeaeaeaeaeaeaeaeaeaeaeaeafafafafafafafafb0b0b0b0b0afafaeaeadadacababaaaaa9a9a8a8a7a7a6a6a5a5a4a4a3a3a2a2a1a1a09f9f9e9e9d9d9c9c9b9b9a9a9999999999999999989898989898989897979797979797979696969696968281818181818080808080807f7f7f7f7f7e7e7e7e7eb4b4b4b5b5b5b5b6b6b6b7b7b7b7b8b8b8b8b8b7b7b7b7b7b7b7b7b7b7b7b7b7b7b7b6b6b6b5b5b5b5b4b4b4b4b3b3b3b2b2b2b2b1c2cbcacacacac9c9c9c9c8c8b6aeaeaeaeaeaeaeaeaeaeaeaeaeaeaeaeaeaeaeaeaeaeaeafafafafafafafaeaeadadacacababaaa9a9a8a8a7a7a6a6a5a5a4a4a3a3a2a2a1a1a0a09f9f9e9d9d9c9c9b9b9a9a9999999898989898989898979797979797979796969696969696969595959595818180808080807f7f7f7f7f7e7e7e7e7e7d7d7d7d7db3b3b4b4b4b4b5b5b5b6b6b6b6b7b7b7b7b7b7b7b7b7b7b7b7b7b6b6b6b6b6b6b6b6b5b5b5b5b4b4b4b4b3b3b3b2b2b2b2b1b1b1b1c2cacac9c9c9c9c8c8c8c8c7b6adadadadadadadadadadadadadadadadadadadadadaeaeaeaeaeaeaeaeaeadadacacababaaaaa9a9a8a8a7a6a6a5a5a4a4a3a3a2a2a1a1a0a09f9f9e9e9d9c9c9b9b9a9a9999989898979797979797979796969696969696969595959595959595949494949480807f7f7f7f7f7e7e7e7e7e7d7d7d7d7d7c7c7c7c7cb2b3b3b3b4b4b4b4b5b5b5b5b6b6b6b6b6b6b6b6b6b6b6b6b6b6b6b6b6b6b6b5b5b5b5b4b4b4b4b3b3b3b2b2b2b2b1b1b1b1b0b0b0c1c9c9c9c8c8c8c8c7c7c7c7b5acacacacacacacacacacacacacacacacacacadadadadadadadadadadadadadacacabaaaaa9a9a8a8a7a7a6a5a5a4a4a3a3a2a2a1a1a0a09f9f9e9e9d9d9c9c9b9a9a9999989897979796969696969696969595959595959595959494949494949494939393937f7f7e7e7e7e7e7e7d7d7d7d7d7c7c7c7c7c7b7b7b7bb2b2b2b3b3b3b3b4b4b4b4b5b5b5b6b6b6b5b5b5b5b5b5b5b5b5b5b5b5b5b5b5b4b4b4b4b3b3b3b2b2b2b2b1b1b1b1b0b0b0b0afafc0c9c8c8c8c8c7c7c7c6c6c6b4acacacacacacacacacacacacacacacacacacacacacacacacacacacadadacacababaaaaa9a8a8a7a7a6a6a5a5a4a3a3a2a2a1a1a0a09f9f9e9e9d9d9c9c9b9b9a9a999898979796969695959595959595959594949494949494949393939393939393939292927e7e7e7d7d7d7d7d7c7c7c7c7c7b7b7b7b7b7a7a7a7ab1b1b2b2b2b2b3b3b3b4b4b4b4b5b5b5b5b5b5b5b5b4b4b4b4b4b4b4b4b4b4b4b4b3b3b3b2b2b2b2b1b1b1b1b0b0b0b0afafafafaebfc8c8c7c7c7c7c6c6c6c5c5b4ababababababababababababababababababababababababacacacacacacabaaaaa9a9a8a8a7a6a6a5a5a4a4a3a2a2a1a1a0a09f9f9e9e9d9d9c9c9b9b9a9a9999989897969695959595949494949494949493939393939393939392929292929292929291917d7d7d7c7c7c7c7c7b7b7b7b7b7a7a7a7a7a79797979b0b1b1b1b1b2b2b2b3b3b3b3b4b4b4b4b4b4b4b4b4b4b4b4b4b3b3b3b3b3b3b3b3b2b2b2b2b1b1b1b1b0b0b0b0afafafafaeaeaeaebfc7c7c7c6c6c6c6c5c5c5c5b3aaaaaaaaaaaaaaaaaaaaaaaaaaaaaaaaaaaaaaaaababababababababababaaaaa9a8a8a7a7a6a6a5a4a4a3a3a2a2a1a0a09f9f9e9e9d9d9c9c9b9b9a9a99999898979796969594949494939393939393939393929292929292929292919191919191919190907c7c7c7c7b7b7b7b7b7a7a7a7a797979797978787878b0b0b0b1b1b1b1b2b2b2b2b3b3b3b4b4b3b3b3b3b3b3b3b3b3b3b3b2b2b2b2b2b2b2b1b1b1b1b0b0b0b0afafafafaeaeaeaeadadadbec6c6c6c6c5c5c5c5c4c4c4b2aaaaaaaaaaaaaaaaaaaaaaaaaaaaaaaaaaaaaaaaaaaaaaaaaaaaaaaaaaaaa9a9a8a8a7a6a6a5a5a4a3a3a2a2a1a1a09f9f9e9e9d9d9c9c9b9b9a9a9999989897979696959594949393939292929292929292929191919191919191919090909090909090908f7b7b7b7b7a7a7a7a7a79797979797878787877777777afafb0b0b0b0b1b1b1b2b2b2b2b3b3b3b3b3b3b2b2b2b2b2b2b2b2b2b2b2b1b1b1b1b1b0b0b0b0afafafafaeaeaeaeadadadadacacbdc6c5c5c5c5c4c4c4c4c3c3b2a9a9a9a9a9a9a9a9a9a9a9a9a9a9a9a9a9a9a9a9a9a9a9a9a9a9a9a9a9a9a8a8a7a7a6a6a5a4a4a3a3a2a1a1a0a09f9e9e9d9d9c9c9b9b9a9a9999989897979696959594949393929292919191919191919191919090909090909090908f8f8f8f8f8f8f8f8f7a7a7a7a7a7979797978787878787777777777767676aeafafafafb0b0b0b1b1b1b1b2b2b2b2b2b2b2b2b2b2b1b1b1b1b1b1b1b1b1b0b0b0b0afafafafafaeaeaeaeadadadadacacacacabbcc5c5c4c4c4c4c3c3c3c3c3b1a8a8a8a8a8a8a8a8a8a8a8a8a8a8a8a8a8a8a8a8a8a8a8a8a8a8a8a8a9a8a8a7a6a6a5a5a4a3a3a2a2a1a0a09f9f9e9d9d9c9c9b9b9a9a99999898979796969595949493939292919191919090909090909090908f8f8f8f8f8f8f8f8f8f8e8e8e8e8e8e8e8e79797979797878787878777777777676767676757575aeaeaeafafafafb0b0b0b0b1b1b1b1b1b1b1b1b1b1b1b1b1b0b0b0b0b0b0b0b0afafafafaeaeaeaeadadadadadacacacacababababbcc4c4c4c3c3c3c3c3c2c2c2b0a8a8a8a8a8a8a8a8a8a8a8a8a8a8a8a8a8a8a8a8a8a8a8a8a8a8a8a8a8a7a7a6a6a5a4a4a3a3a2a1a1a0a09f9e9e9d9d9c9b9b9a9a999998989797969695959494939392929191909090908f8f8f8f8f8f8f8f8f8f8e8e8e8e8e8e8e8e8e8d8d8d8d8d8d8d8d79787878787777777777767676767575757575747474adadaeaeaeaeafafafafb0b0b0b1b1b1b1b1b0b0b0b0b0b0b0b0afafafafafafafaeaeaeaeadadadadacacacacabababababaaaaaabbc3c3c3c3c2c2c2c2c2c1c1b0a7a7a7a7a7a7a7a7a7a7a7a7a7a7a7a7a7a7a7a7a7a7a7a7a7a7a7a7a7a7a6a5a5a4a3a3a2a2a1a0a09f9f9e9d9d9c9c9b9a9a99999898979796969595949493939292919190908f8f8f8f8e8e8e8e8e8e8e8e8e8e8d8d8d8d8d8d8d8d8d8d8c8c8c8c8c8c8c78777777777776767676757575757574747474737373acadadadadaeaeaeafafafafb0b0b0b0b0b0b0b0afafafafafafafafaeaeaeaeaeaeadadadadacacacacababababaaaaaaaaaaa9a9bac3c2c2c2c2c2c1c1c1c1c0afa6a6a6a6a6a6a6a6a6a6a6a6a6a6a6a6a6a6a6a6a6a6a6a6a6a6a6a6a6a6a5a4a4a3a3a2a1a1a0a09f9e9e9d9c9c9b9b9a99999898979796969595949493939292919190908f8f8e8e8e8e8e8d8d8d8d8d8d8d8d8d8d8c8c8c8c8c8c8c8c8c8c8b8b8b8b8b8b77777676767675757575747474747473737373727272acacacacadadadaeaeaeaeafafafafafafafafafafafaeaeaeaeaeaeaeadadadadadacacacacacababababaaaaaaaaa9a9a9a9a9a8b9c2c2c1c1c1c1c1c0c0c0c0aea6a6a6a6a6a6a6a6a6a6a6a6a6a6a6a6a6a5a5a5a5a5a5a5a5a5a5a5a5a5a4a4a3a2a2a1a1a09f9f9e9d9d9c9b9b9a9a999898979796969595949493939292919190908f8f8e8e8d8d8d8d8d8c8c8c8c8c8c8c8c8c8c8c8b8b8b8b8b8b8b8b8b8b8a8a8a8a8a76767575757574747474747373737372727272717171ababacacacacadadadadaeaeaeafafafafaeaeaeaeaeaeaeadadadadadadadacacacacabababababaaaaaaaaa9a9a9a9a8a8a8a8a8b9c1c1c1c1c0c0c0c0c0bfbfaea5a5a5a5a5a5a5a5a5a5a5a5a5a5a5a5a5a5a5a5a5a5a5a5a5a5a4a4a4a4a3a3a2a2a1a0a09f9e9e9d9c9c9b9b9a999998979796969595949493939292919190908f8f8e8e8d8d8c8c8c8c8c8b8b8b8b8b8b8b8b8b8b8b8a8a8a8a8a8a8a8a8a8a8a8989898975757474747474737373737272727271717171707070aaababababacacacadadadadaeaeaeaeaeaeaeadadadadadadacacacacacacacababababaaaaaaaaaaa9a9a9a9a8a8a8a8a8a7a7a7b8c0c0c0c0c0bfbfbfbfbfbeada4a4a4a4a4a4a4a4a4a4a4a4a4a4a4a4a4a4a4a4a4a4a4a4a4a4a4a4a4a3a3a2a1a1a09f9f9e9d9d9c9c9b9a9a9998989797969595949493939292919190908f8f8e8e8d8d8c8c8b8b8b8b8b8b8a8a8a8a8a8a8a8a8a8a8a898989898989898989898988888874747473737373727272727171717170707070706f6faaaaaaaaabababacacacacadadadadadadadadadadacacacacacacabababababaaaaaaaaaaa9a9a9a9a9a8a8a8a8a7a7a7a7a7a6a6b7c0c0bfbfbfbfbfbebebebeaca4a4a4a4a4a4a4a4a4a4a4a4a4a4a4a3a3a3a3a3a3a3a3a3a3a3a3a3a3a2a2a1a0a09f9f9e9d9d9c9b9b9a9999989797969695959493939292919190908f8f8e8e8d8d8c8c8b8b8a8a8a8a8a8a89898989898989898989898988888888888888888888888787737373727272727171717170707070706f6f6f6f6e6ea9a9aaaaaaaaababababacacacadadadadacacacacacababababababaaaaaaaaaaa9a9a9a9a9a8a8a8a8a7a7a7a7a7a6a6a6a6a6a5b6bfbfbfbebebebebebdbdbdaca3a3a3a3a3a3a3a3a3a3a3a3a3a3a3a3a3a3a3a3a2a2a2a2a2a2a2a2a2a2a1a0a09f9e9e9d9c9c9b9a9a99989897969695959494939392919190908f8f8e8e8d8d8c8c8b8b8a8a898989898989898888888888888888888888878787878787878787878787867272727271717171707070706f6f6f6f6e6e6e6e6d6da8a9a9a9a9aaaaaaaaabababacacacacacacababababababaaaaaaaaaaa9a9a9a9a9a8a8a8a8a8a7a7a7a7a7a6a6a6a6a5a5a5a5a5b6bebebebebdbdbdbdbdbdbcaba2a2a2a2a2a2a2a2a2a2a2a2a2a2a2a2a2a2a2a2a2a2a2a2a1a1a1a1a1a1a09f9f9e9d9d9c9b9b9a99999897979695959494939392929190908f8f8e8e8d8d8c8c8b8b8a8a89898888888888888887878787878787878787878786868686868686868686868671717171707070706f6f6f6f6e6e6e6e6d6d6d6d6c6ca8a8a8a8a9a9a9aaaaaaaaabababababababababaaaaaaaaaaa9a9a9a9a9a8a8a8a8a8a7a7a7a7a7a6a6a6a6a6a5a5a5a5a4a4a4a4b5bdbdbdbdbdbdbcbcbcbcbcaaa1a1a1a1a1a1a1a1a1a1a1a1a1a1a1a1a1a1a1a1a1a1a1a1a1a1a0a0a0a09f9f9e9d9d9c9b9b9a99999897979695949493939292919190908f8e8e8d8d8c8c8b8b8a8a8989888887878787878787878686868686868686868686868585858585858585858585707070706f6f6f6f6e6e6e6e6d6d6d6d6c6c6c6c6b6ba7a7a7a8a8a8a9a9a9a9aaaaaaaaababaaaaaaaaaaa9a9a9a9a9a8a8a8a8a8a7a7a7a7a7a6a6a6a6a6a5a5a5a5a5a4a4a4a4a4a3a3b4bdbdbcbcbcbcbcbcbbbbbbaaa1a1a1a1a1a1a1a1a1a1a1a1a1a1a1a1a1a1a0a0a0a0a0a0a0a0a0a09f9f9e9e9d9c9c9b9a9a999898979696959494939292919190908f8f8e8e8d8c8c8b8b8a8a89898888878786868686868686868585858585858585858585858584848484848484848484706f6f6f6f6e6e6e6e6d6d6d6c6c6c6c6b6b6b6b6a6aa6a7a7a7a7a8a8a8a8a9a9a9aaaaaaaaaaaaa9a9a9a9a8a8a8a8a8a7a7a7a7a7a6a6a6a6a6a5a5a5a5a5a4a4a4a4a4a3a3a3a3a3a2b4bcbcbcbcbbbbbbbbbbbbbaa9a0a0a0a0a0a0a0a0a0a0a0a0a0a0a0a0a0a0a0a0a09f9f9f9f9f9f9f9f9e9e9d9c9c9b9a999998979796959594939392919190908f8f8e8e8d8d8c8c8b8a8a8989888887878686858585858585858585848484848484848484848484848383838383838383836f6e6e6e6e6d6d6d6d6c6c6c6c6b6b6b6b6a6a6a6969a6a6a6a6a7a7a7a8a8a8a8a9a9a9a9a9a9a9a9a8a8a8a8a8a7a7a7a7a6a6a6a6a6a5a5a5a5a5a4a4a4a4a4a3a3a3a3a3a2a2a2a2a2b3bbbbbbbbbbbabababababaa89f9f9f9f9f9f9f9f9f9f9f9f9f9f9f9f9f9f9f9f9f9f9f9e9e9e9e9e9e9d9d9c9b9b9a9999989796969594949392929190908f8f8e8e8d8d8c8c8b8b8a8a898888878786868585848484848484848484838383838383838383838383838382828282828282826e6d6d6d6d6c6c6c6c6b6b6b6b6a6a6a6a6969696968a5a5a5a6a6a6a7a7a7a7a8a8a8a8a9a9a8a8a8a8a7a7a7a7a7a6a6a6a6a5a5a5a5a5a4a4a4a4a4a3a3a3a3a3a2a2a2a2a2a1a1a1a1b2bbbabababababab9b9b9b9a79f9f9f9f9f9f9f9f9f9f9f9f9f9f9f9f9f9e9e9e9e9e9e9e9e9d9d9d9d9d9c9b9b9a99989897969695949393929191908f8f8e8e8d8d8c8c8b8b8a8a8989888887868685858484838383838383838383838282828282828282828282828282818181818181816d6d6c6c6c6c6b6b6b6a6a6a6a696969696868686867a4a4a5a5a5a6a6a6a6a7a7a7a7a8a8a8a8a7a7a7a7a6a6a6a6a6a5a5a5a5a4a4a4a4a4a3a3a3a3a3a2a2a2a2a2a1a1a1a1a1a0a0a0b1babab9b9b9b9b9b9b9b8b8a79e9e9e9e9e9e9e9e9e9e9e9e9e9e9e9e9e9e9e9e9d9d9d9d9d9d9d9c9c9c9b9a9a99989897969595949393929190908f8e8e8d8d8c8c8b8b8a8a89898888878786868585848383828282828282828282828281818181818181818181818181818180808080806c6c6b6b6b6b6a6a6a6a696969686868686767676766a3a3a4a4a4a5a5a5a5a6a6a6a6a7a7a7a7a6a6a6a6a5a5a5a5a4a4a4a4a4a3a3a3a3a2a2a2a2a2a2a1a1a1a1a1a0a0a0a0a09f9f9fb0b9b9b8b8b8b8b8b8b8b7b7a69d9d9d9d9d9d9d9d9d9d9d9d9d9d9d9d9d9d9d9d9d9c9c9c9c9c9c9c9b9b9a9a99989897969695949393929191908f8f8e8d8d8c8c8b8b8a8a8989888887878686858584838382828282818181818181818181818181818181808080808080808080808080806b6b6b6b6a6a6a696969696868686867676766666666a2a2a3a3a3a3a4a4a4a4a5a5a5a6a6a6a5a5a5a5a4a4a4a4a4a3a3a3a3a2a2a2a2a2a1a1a1a1a1a0a0a0a0a09f9f9f9f9f9e9e9e9eafb8b7b7b7b7b7b7b7b6b6b6a59c9c9c9c9c9c9c9c9c9c9c9c9c9c9c9c9c9c9c9c9c9c9c9b9b9b9b9b9b9a9a9998989796969594949392929190908f8e8e8d8d8c8b8b8a8a898988888787868685858484838382828181818181818181818181808080808080808080808080807f7f7f7f7f7f6b6b6a6a6a6969696968686868676767666666666565a1a1a1a2a2a2a2a3a3a3a4a4a4a4a5a4a4a4a4a4a3a3a3a3a2a2a2a2a2a1a1a1a1a0a0a0a0a09f9f9f9f9f9e9e9e9e9e9d9d9d9d9daeb6b6b6b6b6b6b6b5b5b5b5a49b9b9b9b9b9b9b9b9b9b9b9b9b9b9b9b9b9b9b9b9b9b9b9b9b9a9a9a9a9a9998989796969594949393929191908f8f8e8d8d8c8c8b8b8a8a898988878786868585848483838282818181818181808080808080808080808080807f7f7f7f7f7f7f7f7f7f7f7f6a6a6a6a696969686868686767676666666665656564a0a0a0a0a1a1a1a2a2a2a2a3a3a3a3a3a3a3a3a2a2a2a2a2a1a1a1a1a0a0a0a0a09f9f9f9f9f9e9e9e9e9e9d9d9d9d9c9c9c9c9c9badb5b5b5b5b5b5b4b4b4b4b4a39a9a9a9a9a9a9a9a9a9a9a9a9a9b9b9b9b9a9a9a9a9a9a9a9a9a9a9999999898979796959594939392919190908f8e8e8d8c8c8b8b8a8a89898888878786868584848383828281818080808080808080808080807f7f7f7f7f7f7f7f7f7f7f7f7f7e7e7e7e7e6a6a69696968686868676767666666666565656464649e9f9f9fa0a0a0a0a1a1a1a1a2a2a2a2a2a2a1a1a1a1a1a0a0a0a0a09f9f9f9f9f9e9e9e9e9d9d9d9d9d9c9c9c9c9c9b9b9b9b9a9aabb4b4b4b4b4b3b3b3b3b3b3a19999999999999999999999999a9a9a9a9a9a99999999999999999999999898979796959594939392929190908f8f8e8d8d8c8c8b8b8a898988888787868685858484838382818180808080808080807f7f7f7f7f7f7f7f7f7f7f7f7e7e7e7e7e7e7e7e7e7e7e696969696868686767676666666665656564646464639d9e9e9e9e9f9f9f9fa0a0a0a1a1a1a1a1a1a0a0a0a0a09f9f9f9f9e9e9e9e9e9d9d9d9d9d9c9c9c9c9b9b9b9b9b9a9a9a9a9a9999aab3b3b3b3b2b2b2b2b2b2b2a0989898989898989898989899999999999999999999989898989898989898979696959594949392929191908f8f8e8e8d8c8c8b8b8a8a89898888878686858584848383828281818080807f7f7f7f7f7f7f7f7f7f7f7f7e7e7e7e7e7e7e7e7e7e7e7d7d7d7d7d696968686867676767666666656565646464646363639c9c9d9d9d9d9e9e9e9f9f9f9fa0a0a0a09f9f9f9f9f9e9e9e9e9e9d9d9d9d9d9c9c9c9c9b9b9b9b9b9a9a9a9a9999999999989898a9b2b2b2b1b1b1b1b1b1b1b19f979797979797979797979898989898989898989898989898989797979797969695959494939292919190908f8e8e8d8d8c8c8b8a8a898988888787868685848483838282818180807f7f7f7f7f7f7f7f7f7e7e7e7e7e7e7e7e7e7e7e7d7d7d7d7d7d7d7d7d7d686868676767676666666565656564646463636362629b9b9b9c9c9c9d9d9d9d9e9e9e9e9f9f9e9e9e9e9e9d9d9d9d9d9c9c9c9c9c9b9b9b9b9b9a9a9a9a99999999999898989897979797a8b1b0b0b0b0b0b0b0b0b0b09e9696969696969696969697979797979797979797979797979797979797969695959494939292919190908f8f8e8d8d8c8c8b8b8a8a8988888787868685858484838282818180807f7f7f7f7f7e7e7e7e7e7e7e7e7e7e7e7d7d7d7d7d7d7d7d7d7d7d7c7c7c7c686867676766666665656565646464636363626262629a9a9a9b9b9b9b9c9c9c9c9d9d9d9e9d9d9d9d9d9c9c9c9c9c9c9b9b9b9b9b9a9a9a9a999999999998989898979797979696969696a7afafafafafafafafafafaf9d95959595959595959596969696969696969696969696969696969696969695959494939292919190908f8f8e8e8d8d8c8b8b8a8a8989888887878685858484838382828180807f7f7e7e7e7e7e7e7e7e7e7e7e7d7d7d7d7d7d7d7d7d7d7c7c7c7c7c7c7c7c7c67676766666666656565646464636363626262626161999999999a9a9a9a9b9b9b9c9c9c9c9c9c9c9c9c9b9b9b9b9b9a9a9a9a9a9a99999999989898989797979796969696969595959594a6aeaeaeaeaeaeaeaeaeaead9c939494949494949494959595959595959595959595959595959595959595949493939292919190908f8f8e8e8d8d8c8c8b8b8a8a8988888787868685858483838282818180807f7e7e7e7e7e7e7e7d7d7d7d7d7d7d7d7d7d7c7c7c7c7c7c7c7c7c7c7b7b7b7b6767666666656565646464636363636262626161616097989898989999999a9a9a9a9b9b9b9b9b9b9b9a9a9a9a9a9999999999999898989898979797979696969695959595949494949393a4adadadadadadadadadacac9b9293939393939393939494949494949494949494949494949495959595949493939292919190908f8f8e8e8d8d8c8c8b8b8a8a8989888887868685858484838282818180807f7f7e7e7e7d7d7d7d7d7d7d7d7d7d7c7c7c7c7c7c7c7c7c7c7b7b7b7b7b7b7b7b66666665656565646464636363626262616161606060969697979798989898999999999a9a9a9a9a9999999999999898989898989797979796969696959595959494949493939393929292a3acacacacacacacabababab9a91919292929292929393939393939394949494949494949494949494949493939292919190908f8f8e8e8d8d8c8c8c8b8b8a8989888887878686858484838382828180807f7f7e7e7d7d7d7d7d7d7d7d7c7c7c7c7c7c7c7c7c7b7b7b7b7b7b7b7b7b7b7a7a7a66666565656464646363636262626161616060605f5f9595969696969797979798989899999999989898989898979797979797969696969695959595949494949393939392929292919191a2abababababaaaaaaaaaaaa99909091919191919192929292929293939393939393939393939393939393929292919190908f8f8e8e8d8d8d8c8c8b8b8a8a8989888787868685858483838282818180807f7e7e7d7d7d7d7d7c7c7c7c7c7c7c7c7c7b7b7b7b7b7b7b7b7b7a7a7a7a7a7a7a7a656565646464636363626262626161616060605f5f5f9494949595959596969697979797989897979797979796969696969695959595959494949493939393929292929191919190909090a1aaaaa9a9a9a9a9a9a9a9a9988f8f909090909090919191919191929292929292929292929292929292929291919190908f8f8e8e8d8d8d8c8c8b8b8a8a8989888887878685858484838382818180807f7f7e7d7d7d7c7c7c7c7c7c7c7c7b7b7b7b7b7b7b7b7b7a7a7a7a7a7a7a7a7a79797965656464646363636262626161616060605f5f5f5e5e9393939394949495959595969696969696969696969595959595959594949494949393939392929292919191919090908f8f8f8f8ea0a8a8a8a8a8a8a8a8a8a8a8978e8e8e8f8f8f8f8f9090909090919191919191919191919191929292929291919090908f8f8e8e8d8d8d8c8c8b8b8b8a8a89898887878686858584838382828180807f7f7e7e7d7c7c7c7c7c7c7c7b7b7b7b7b7b7b7b7a7a7a7a7a7a7a7a7a797979797979796464646363636262626161616060605f5f5f5e5e5e5d91929292939393939494949495959595959595959494949494949493939393939392929292919191909090908f8f8f8f8e8e8e8e8d9fa7a7a7a7a7a7a7a7a7a7a7968d8d8d8e8e8e8e8e8f8f8f8f8f90909090909090909091919191919191919190908f8f8f8e8e8d8d8d8c8c8b8b8b8a8a8989888887878685858484838282818180807f7e7e7d7d7c7c7c7b7b7b7b7b7b7b7b7b7a7a7a7a7a7a7a7a797979797979797978787864646363636262626161616060605f5f5f5e5e5e5d5d909191919192929292939393949494949494949393939393939392929292929291919191909090908f8f8f8f8e8e8e8d8d8d8d8c8c9da6a6a6a6a6a6a6a6a6a6a6948c8c8c8d8d8d8d8d8e8e8e8e8e8f8f8f8f8f8f8f90909090909090909090908f8f8f8e8e8e8d8d8c8c8c8b8b8b8a8a8989898887878686858484838382828180807f7f7e7d7d7c7c7b7b7b7b7b7b7b7a7a7a7a7a7a7a7a7979797979797979787878787878786363636262626161616060605f5f5f5e5e5e5d5d5d5c8f8f909090909191919292929293939393939292929292929291919191919191909090908f8f8f8e8e8e8e8d8d8d8d8c8c8c8b8b8b9ca5a5a5a5a5a5a5a5a5a5a5938b8b8b8c8c8c8c8c8d8d8d8d8e8e8e8e8e8e8f8f8f8f8f8f8f8f8f9090908f8f8e8e8e8d8d8d8c8c8c8b8b8b8a8a8a89898888878686858584848382828181807f7f7e7e7d7c7c7b7b7b7b7b7a7a7a7a7a7a7a7a797979797979797978787878787878787777636362626261616160605f5f5f5e5e5e5d5d5d5c5c5c8e8e8e8f8f8f90909090919191919292929191919191919191909090909090908f8f8f8e8e8e8e8d8d8d8d8c8c8c8b8b8b8b8a8a8a9ba4a4a4a4a4a4a4a4a4a4a4928a8a8a8b8b8b8b8b8c8c8c8c8d8d8d8d8d8e8e8e8e8e8e8e8e8e8e8e8f8e8e8e8d8d8d8c8c8c8c8c8b8b8b8a8a8a8989888887878686858484838382818180807f7e7e7d7d7c7b7b7b7a7a7a7a7a7a7a797979797979797978787878787878787777777777776262626161616060605f5f5f5e5e5e5d5d5c5c5c5b5b8d8d8d8e8e8e8e8f8f8f8f909090919090909090909090908f8f8f8f8f8f8f8e8e8e8e8d8d8d8d8c8c8c8b8b8b8b8a8a8a898989899aa3a3a3a3a3a3a3a3a3a3a391898989898a8a8a8a8b8b8b8b8c8c8c8c8d8d8d8d8d8d8d8d8c8c8c8c8c8c8b8b8b8a8a8a8b8b8b8b8b8a8a8a898989898888878686858584838382828180807f7f7e7d7d7c7c7b7a7a7a7a7a7a79797979797979797878787878787877777777777777777676626261616160605f5f5f5e5e5e5d5d5d5c5c5c5b5b5a7070707070717171717171717172727272727272727272727272727272727272717171707070706f6f6f6e6e6e6e6d6d6d6c6c6c6c797f7f7e7e7e7e7d7d7d7c7c6f6868686868686868686868686868686868686868676766656362616161616161606060616365666565656565646464646463636363636262626262626161616161616060606060605f5f5f5f5f5f5f5f5e5e5e5e5e5e5e5e5d5d5d5d5d5d5d5d5c5c5c5c5c5c5c5c5c5c5c5c5c5c5c5c5c5c5c5c5c5c5c5c5c5c5c5c6f70707070707070707171717171717171717171717171717171717171717171717070706f6f6f6f6e6e6e6d6d6d6d6c6c6c6b6b6b787e7e7e7e7d7d7d7d7c7c7c6e6767676767676767676767676767676767676766656462605f5e5d5d5d5d5d5c5c5c5c5e6164656565646464646363636262626262626161616161616060606060605f5f5f5f5f5f5e5e5e5e5e5e5e5e5e5d5d5d5d5d5d5d5d5d5c5c5c5c5c5c5c5c5c5b5b5b5b5b5b5b5b5b5b5b5b5b5b5b5b5b5b5b5b5b5b5b5b5b6f6f6f6f6f70707070707070707171717171717171717070707070707070707070706f6f6f6e6e6e6e6d6d6d6c6c6c6c6b6b6b6a6a777e7e7d7d7d7d7c7c7c7c7b6e6767676767676767676767676767676767666563615f5e5d5c5c5b5b5b5b5b5b5a5a5a5c6063646464636363636262626161616161616060606060605f5f5f5f5f5f5e5e5e5e5e5d5d5d5d5d5d5d5d5d5d5d5c5c5c5c5c5c5c5c5c5c5c5b5b5b5b5b5b5b5b5b5b5b5b5b5b5b5b5b5b5b5b5b5b5b5b5b5b5b5b5b5b5b6f6f6f6f6f6f6f6f6f70707070707070707070707070707070707070707070706f6f6f6e6e6e6e6d6d6d6c6c6c6c6b6b6b6a6a6a6a777d7d7d7c7c7c7c7c7b7b7b6d676767676767676767676767676767676664615f5d5c5b5b5b5b5b5b5b5b5a5a5a59595b5f62636363636262626161616060606060605f5f5f5f5f5e5e5e5e5e5e5d5d5d5d5d5d5c5c5c5c5c5c5c5c5c5c5c5c5c5b5b5b5b5b5b5b5b5b5b5b5b5b5a5a5a5a5a5a5a5a5a5a5a5a5a5a5a5a5a5a5a5a5a5a5a5a5a5a5a6e6e6e6e6f6f6f6f6f6f6f6f6f70707070706f6f6f6f6f6f6f6f6f6f6f6f6f6f6f6e6e6e6d6d6d6d6c6c6c6b6b6b6b6a6a6a696969767c7c7c7c7c7c7b7b7b7b7b6d6666666666666666666666666666666664615e5c5b5b5b5a5a5a5a5a5a5a5a5a5959595b5f62636362626261616060605f5f5f5f5f5e5e5e5e5e5e5d5d5d5d5d5d5c5c5c5c5c5c5b5b5b5b5b5b5b5b5b5b5b5b5b5b5b5a5a5a5a5a5a5a5a5a5a5a5a5a5a5a5a5a5a5a5a5a5a5a5a5a5a5a5a5a5a5a5a5a5a5a5a5a5a6e6e6e6e6e6e6e6e6e6f6f6f6f6f6f6f6f6f6f6f6f6f6f6f6f6f6e6e6e6e6e6e6e6e6d6d6d6c6c6c6c6b6b6b6a6a6a6a6969696868757c7c7c7b7b7b7b7b7b7a7a6d66666666666666666666666666666664615e5b5a5a5a5a5a5a5a5a5a5a5a59595959595c606262626261616060605f5f5e5e5e5e5e5d5d5d5d5d5d5c5c5c5c5c5c5b5b5b5b5b5b5a5a5a5a5a5a5a5a5a5a5a5a5a5a5a5a5a5a5a5a5a59595959595959595959595959595959595959595959595959595959595959596d6d6d6e6e6e6e6e6e6e6e6e6e6e6f6f6e6e6e6e6e6e6e6e6e6e6e6e6e6e6e6d6d6d6d6c6c6c6b6b6b6b6a6a6a6969696968686867757b7b7b7b7b7b7a7a7a7a7a6c666666666666666666666666666564625e5b5a5a5a5a5a5a5a5a5a5a5a5a595958595b5e616262616160605f5f5f5e5e5d5d5d5d5d5c5c5c5c5c5c5b5b5b5b5b5b5a5a5a5a5a5959595959595959595959595959595959595959595959595959595959595959595959595959595959595959595959595959595959596d6d6d6d6d6d6d6d6e6e6e6e6e6e6e6e6e6e6e6e6e6e6d6d6d6d6d6d6d6d6d6d6c6c6c6c6b6b6b6a6a6a6a69696968686868676767747b7a7a7a7a7a7a7a7a7a7a6c6565656565656565656565656564625f5c5a5959595959595959595959595958585a5d606161616060605f5f5e5e5d5d5c5c5c5c5c5b5b5b5b5b5a5a5a5a5a5a5959595959595858585858585858585858585858585858585858585858585858585858585858585858585858585858585858585858585858585858586c6c6d6d6d6d6d6d6d6d6d6d6d6d6e6d6d6d6d6d6d6d6d6d6d6d6d6c6c6c6c6c6c6b6b6b6b6a6a6a69696969686868676767676666737a7a7a7a7a7a79797979796c65656565656565656565656564635f5c5a595959595959595959595959595858595c5f61616160605f5f5e5e5d5d5c5c5b5b5b5b5a5a5a5a5a5a5959595959595858585858585757575757575757575757575757575757575757575757575757575858585858585858585858585858585858585858585858585858586c6c6c6c6c6c6c6c6d6d6d6d6d6d6d6d6d6d6d6d6c6c6c6c6c6c6c6c6c6c6b6b6b6b6a6a6a6a6969696868686867676766666666657379797979797979797979796b65656565656565656565656463605c5a595959595959595959595959595858595b5e60616160605f5e5e5d5d5c5c5b5b5a5a5a5a5959595959595858585858585757575757575656565656565656565656565656565757575757575757575757575757575757575757575757575757575757575757575757575757576b6c6c6c6c6c6c6c6c6c6c6c6c6c6c6c6c6c6c6c6c6c6c6c6b6b6b6b6b6b6b6b6a6a6a6a69696968686868676767666666666565657279797979797978787878786b646464646464646464646463605d5a595858585858585858585858585858595a5d606161605f5f5e5e5d5d5c5b5b5a5a595959595858585858585757575757575656565656555555555555555555555555565656565656565656565656565656565656565657575757575757575757575757575757575757575757576b6b6b6b6b6b6b6c6c6c6c6c6c6c6c6c6c6c6c6b6b6b6b6b6b6b6b6a6a6a6a6a6a69696969686868676767676666666565656564647178787878787878787878786b6464646464646464646463615d5a595858585858585858585858585858585a5c5f6061605f5f5e5e5d5c5c5b5b5a5959585858585757575757565656565656555555555555545454545454545454545555555555555555555555555555555656565656565656565656565656565656565656565656565656565656566b6b6b6b6b6b6b6b6b6b6b6b6b6b6b6b6b6b6b6b6b6b6a6a6a6a6a6a6a6a69696969686868686767676666666665656564646464637177777777777778787878786a64646464646464646463625e5b58585858585858585858585858585858595c5f6061605f5f5e5e5d5c5c5b5a5a595858575757565656565656555555555555545454545454535353535353535353545454545454545454545454555555555555555555555555555555555555555555555555555555555555555555556a6a6a6a6a6a6a6b6b6b6b6b6b6b6b6b6b6b6a6a6a6a6a6a6a696969696969696868686767676766666665656565646464636363637077777777777777777777776a63636363636363636363605c59585757575757575757575757575758595b5e606160605f5e5e5d5c5b5b5a5959585757565656555555555555545454545454535353535353525252525252525252535353535353535353545454545454545454545555555555555555555555555555555555555555555555555555556a6a6a6a6a6a6a6a6a6a6a6a6a6a6a6a6a6a6a6a6a69696969696968686868686867676766666666656565646464646363636262626f767676767676777777777769636363636363636363625f5b585757575757575757575757575757585a5e606160605f5e5e5d5c5b5b5a5959585756565555555454545454545353535353525252525252515151515151515151525252525252525252535353535353535354545454545454545454545454545454545454545454545454545454545469696969696a6a6a6a6a6a6a6a6a6a6a6a6969696969696868686868686867676767666666656565656464646363636362626261616f7576767676767676767676676060606060606060605f5c58575757575757575757575757575757595d606161605f5e5e5d5c5b5b5a595858575655555454545353535353525252525252515151515151505050505050505050515151515151515252525252525253535353535353535454545454545454545454545454545454545454545454545469696969696969696969696969696969696969696868686868686767676767666666666565656464646463636362626262616161616e7575757575757676767676655c5c5c5c5c5c5c5c5c5c59545756565656565656565656565657585b5f616160605f5e5d5c5c5b5a595858575655545453535252525252525151515151515050505050504f4f4f4f4f4f4f4f4f505050505050515151515151525252525252525353535353535353535353535353535353535353535353535353535368686869696969696969696969696969696868686868676767676767666666666565656564646463636363626262616161616060606d74747475757575757576766359595959595959595958555157565656565656565656565656575a5e616161605f5e5d5d5c5b5a59585857565554545352525151515151515050505050504f4f4f4f4f4f4e4e4e4e4e4e4e4e4f4f4f4f4f4f5050505050505151515151515252525252525353535353535353535353535353535353535353535353536868686868686868686868686868686868686867676767676666666666656565656564646463636363626262616161616060605f5f6d74747474747475757575756055555555555555555554524d56565656565656565656565657595d606161605f5f5e5d5c5b5a5959585756555453535251515050505050504f4f4f4f4f4e4e4e4e4e4e4d4d4d4d4d4d4d4d4d4e4e4e4e4e4f4f4f4f4f4f505050505051515151515252525252525252525252525252525252525252525252525252526868686868686868686868686868686867676767676666666666656565656564646464636363626262626161616060605f5f5f5f5e6c73737374747474747575755e525252525252525252514e4a565555555555555555555556585c5f616161605f5e5d5c5b5b5a5958575655545352525150504f4f4f4f4f4e4e4e4e4e4e4d4d4d4d4d4d4c4c4c4c4c4c4c4c4c4d4d4d4d4d4e4e4e4e4e4f4f4f4f50505050505151515151525252525252525252525252525252525252525252525252676767676767676767676767676767676767666666666665656565656464646463636363626262616161616060605f5e5d5d5d5c5c6b72727373737374747474755d515151515151515151504d495655555555555555555556585b5e606161605f5f5e5d5c5b5a59585756555453525251504f4e4e4e4e4e4e4d4d4d4d4d4d4c4c4c4c4c4c4b4b4b4b4b4b4b4b4b4c4c4c4c4d4d4d4d4d4e4e4e4e4f4f4f4f4f50505050515151515151515151515151515151515151515151515151515167676767676767676767676767676767666666666565656565646464646363636362626262616161606060605f5f5f5c5a5a5a5a596b72727272737373737474745c515151515151515150504d4855555555555555555555575a5d5f606061605f5e5d5c5b5a59585756555454535251504f4e4d4d4d4d4d4d4c4c4c4c4c4c4b4b4b4b4b4b4a4a4a4a4a4a4a4a4a4b4b4b4b4c4c4c4c4d4d4d4d4e4e4e4e4f4f4f4f5050505050515151515151515151515151515151515151515151515166666666666666666666666666666666666665656565646464646363636363626262616161616060605f5f5f5f5e5e5a58575757576a71717272727273737374745c5050505050505050504f4c4855545454545454545556595d5f60606060605f5e5d5c5b5a595857565554535251504f4e4d4c4c4c4c4c4c4b4b4b4b4b4a4a4a4a4a4a494949494949494949494a4a4a4a4b4b4b4c4c4c4c4d4d4d4d4e4e4e4e4f4f4f4f5050505050505050505050505050505050505050505050505065656565656565656565656565656565656564646464646363636362626262616161616060605f5f5f5f5e5e5e5d5d5855555454546970707171717272727373735b4f4f4f4f4f4f4f4f4f4f4c47545453535353545455585b5e5f5f5f5f5f5f5e5d5c5b5a595857565554535251504f4e4d4c4b4b4b4b4b4a4a4a4a4a4a49494949494948484848484848484848494949494a4a4a4b4b4b4b4c4c4c4d4d4d4d4e4e4e4e4f4f4f5050505050505050505050505050505050505050505050646464646464646464646464646464646463636363636262626261616161616060605f5f5f5f5e5e5e5d5d5d5d5c5c555252515151686f6f7070707171717272725a4e4e4e4e4e4e4e4e4e4e4b465353525252535354565a5d5e5e5e5e5e5e5e5d5c5b5a595857565554535251504e4d4c4b4a4a4a4a4a4949494949494848484848484747474747474646474747484848484949494a4a4a4a4b4b4b4c4c4c4c4d4d4d4e4e4e4e4f4f4f4f4f4f4f4f4f4f4f4f4f4f4f4f4f4f4f4f4f4f4f6363636363636363636363636363636362626262626161616160606060605f5f5f5f5e5e5e5e5d5d5d5c5c5c5c5b5b545050505050676e6e6f6f6f707070707171594d4d4d4d4d4d4d4d4d4d4a455252515151525355585b5d5d5d5d5d5d5d5d5c5b5a5958575655545351504f4e4d4c4b4a4949494948484848484847474747474746464646464645454546464647474747484848494949494a4a4a4b4b4b4b4c4c4c4d4d4d4e4e4e4e4e4e4e4e4e4e4e4e4e4e4e4e4e4e4e4e4e4e4e4e6262626262626262626262626262616161616161606060605f5f5f5f5f5e5e5e5e5e5d5d5d5c5c5c5c5b5b5b5b5a5a534f4f4f4f4e666d6d6e6e6e6f6f6f6f7070584c4c4c4c4c4c4c4c4c4c494451505050515154575a5c5c5c5c5c5c5c5c5c5b5a5958575655535251504f4e4d4c4b4a494848484747474747474646464646464545454545454444444445454545464646474747484848484949494a4a4a4b4b4b4b4c4c4c4d4d4d4d4d4d4d4d4d4d4d4d4d4d4d4d4d4d4d4d4d4d4d4d6060606060606060606060606060606060605f5f5f5f5f5f5e5e5e5e5e5d5d5d5d5c5c5c5c5b5b5b5b5a5a5a595959524e4e4e4e4d656c6c6d6d6d6e6e6e6e6f6f574b4b4b4b4b4b4b4b4b4a4843504f4f50505255595a5b5b5b5b5b5b5b5b5b5a5958575655535251504f4e4d4c4b4a49484746464646464646454545454545444444444444444343434343444444454545464646474747474848484949494a4a4a4b4b4b4b4c4c4c4c4c4c4c4c4c4c4c4c4c4c4c4c4c4c4c4c4c4c4d4d5f5f5f5f5f5f5f5f5f5f5f5f5f5f5f5f5f5e5e5e5e5e5d5d5d5d5d5d5c5c5c5c5c5b5b5b5b5a5a5a59595959585858514d4d4d4d4c646b6b6c6c6c6c6d6d6d6e6e564a4a4a4a4a4a4a4a4a4947424f4e4e4f515457595a5a5a5a5a5a5a5a5a5a5958575654535251504f4e4d4c4b4a4948474645454545454544444444444443434343434343424242424242434343444444454545464646464747474848484949494a4a4a4b4b4b4b4b4b4b4b4b4b4b4b4b4c4c4c4c4c4c4c4c4c4c4c4c5e5e5e5e5e5e5e5e5e5e5e5e5e5e5e5d5d5d5d5d5d5c5c5c5c5c5c5b5b5b5b5b5a5a5a5a5959595958585858575757504c4c4c4c4b636a6a6b6b6b6b6c6c6c6d6d554949494949494949494846414e4d4e4f525658595959595959595959595958575654535251504f4e4d4c4b4a494847454444444444434343434343434242424242424241414141414141424242434343444444454545454646464747474848484949494a4a4a4a4a4a4b4b4b4b4b4b4b4b4b4b4b4b4b4b4b4b4b4b4b5c5c5c5c5c5c5c5c5c5c5c5c5c5c5c5c5c5c5c5c5b5b5b5b5b5b5a5a5a5a5a5a5959595958585858575757575656564f4b4b4b4a4a6269696a6a6a6a6b6b6b6c6c544848484848484848484745404d4d4e515457585858585858585858585858575654535251504f4e4d4c4b4a49484645444343434342424242424242414141414141414040404040404040404141414242424343434444444545454646474747484848494949494a4a4a4a4a4a4a4a4a4a4a4a4a4a4a4a4a4a4a4a4a4a5b5b5b5b5b5b5b5b5b5b5b5b5b5b5b5b5b5b5a5a5a5a5a5a5a595959595959585858585757575756565656555555554e4a4a4a4949616868696969696a6a6a6b6b5347474747474747474746433f4c4d4f5355575757575757575757575757575655535251504f4e4d4c4b4a49474645444342424241414141414141404040404040403f3f3f3f3f3f3f3f3f3f404040414141424242434344444445454546464647474748484849494949494949494949494949494949494949494949495a5a5a5a5a5a5a5a5a5a5a5a5a5a5a5a5a5959595959595958585858585858575757575656565655555555545454544d4949494848606767676868686969696a6a5246464646464646464645423e4c4e5154565656565656565656565656565655535251504f4e4d4c4b4a484746454443424140404040404040403f3f3f3f3f3f3f3e3e3e3e3e3e3e3d3e3e3e3f3f3f4040404141414242434343444444454545464646474747484848484848484848484848484848484848494949494958585858585858585858585958585858585858585858575757575757575756565656565555555554545454535353534c48484847475f66666667676768686869695145454545454545454544423e4d5053545555555555555555555555555555545251504f4e4d4c4b4a4847464544434241403f3f3f3f3f3f3e3e3e3e3e3e3e3e3d3d3d3d3d3d3d3c3c3c3d3d3e3e3e3f3f3f4040404141424242434343444444454545464647474747474747474747474747474848484848484848484857575757575757575757575757575757575757575756565656565656565555555555545454545353535353525252524b47474746465e65656566666667676768685044444444444444444443413f4f51535454545454545454545454545454545251504f4e4d4c4b4a4847464544434241403e3e3e3e3e3e3d3d3d3d3d3d3d3d3c3c3c3c3c3c3c3c3b3b3b3c3c3c3d3d3e3e3e3f3f3f4040414141424242434343444445454546464646464646464646474747474747474747474747474756565656565656565656565656565656565656555555555555555554545454545454535353535252525251515151514a46464645455d64646465656566666666674f43434343434343434343414051525353535353535353535353535353535351504f4e4d4c4b4a48474645444342413f3e3d3d3d3d3d3c3c3c3c3c3c3c3c3b3b3b3b3b3b3b3b3a3a3a3a3b3b3b3c3c3d3d3d3e3e3e3f3f4040404141414242434343444444454545454545464646464646464646464646464646464646555555555555555555555555555555555454545454545454545453535353535353525252525251515151505050504f4945454544445c63636364646465656565664e424242424242424242424241515252525252525252525252525252525252504f4e4d4c4b4a48474645444342413f3e3d3c3c3c3b3b3b3b3b3b3b3b3a3a3a3a3a3a3a3a3a39393939393a3a3a3b3b3b3c3c3d3d3d3e3e3f3f3f40404041414242424343444444444545454545454545454545454545454545454546465353535353535353535353535353535353535353535353535252525252525252525151515150505050504f4f4f4f4e4844444443435b62626263636364646464654d4141414141414141414141415151515151515151515151515151515151514f4e4d4c4b4a49474645444342413f3e3d3c3b3b3a3a3a3a3a3a3a3a3939393939393939383838383838383839393a3a3a3b3b3c3c3c3d3d3e3e3e3f3f404040414142424243434344444444444444444444444444444444454545454545525252525252525252525252525252525252525252525151515151515151515150505050504f4f4f4f4e4e4e4e4e4d4643434242425a61616162626263636363644c40404040404040404040404050505050505050505050505050505050504f4e4d4c4b4a49474645444342413f3e3d3c3b3a3939393939393939383838383838383837373737373737373738383939393a3a3b3b3b3c3c3d3d3d3e3e3f3f3f40404141414242434343434343434343434343434344444444444444444451515151515151515151515151515151515151505050505050505050505050504f4f4f4f4e4e4e4e4e4d4d4d4d4d4c4542424141415960606061616161626262634b3f3f3f3f3f3f3f3f3f3f3f3f4f4f4f4f4f4f4f4f4f4f4f4f4f4f4f4f4f4e4d4c4b4a49474645444342413f3e3d3c3b3a3838383838383837373737373737373736363636363636363636373737383839393a3a3a3b3b3c3c3c3d3d3e3e3e3f3f4040414141424242424242424242424243434343434343434343434350505050505050505050505050504f4f4f4f4f4f4f4f4f4f4f4f4f4f4f4f4f4e4e4e4e4e4d4d4d4d4d4c4c4c4c4b4b444141404040585f5f5f60606060616161624a3e3e3e3e3e3e3e3e3e3e3e3e4e4e4e4e4e4e4e4e4e4e4e4e4e4e4e4e4e4d4c4b4a49484645444342413f3e3d3c3b3a383737373737363636363636363636363535353535353535353535363636373738383939393a3a3b3b3b3c3c3d3d3e3e3e3f3f40404141414141414141414242424242424242424242424242424e4e4e4e4e4e4e4e4e4e4e4e4e4e4e4e4e4e4e4e4e4e4e4e4e4e4e4e4e4d4d4d4d4d4d4d4c4c4c4c4b4b4b4b4b4a4a4340403f3f3f575e5e5e5f5f5f5f60606061493d3d3d3d3d3d3d3d3d3d3d3d4d4d4d4d4d4d4d4d4d4d4d4d4d4d4d4d4d4c4b4a49484645444342413f3e3d3c3b3a383736363636353535353535353535343434343434343434343334343435353636373737383839393a3a3a3b3b3c3c3d3d3d3e3e3f3f4040404040404041414141414141414141414141414242424d4d4d4d4d4d4d4d4d4d4d4d4d4d4d4d4d4d4d4d4d4d4d4d4d4d4c4c4c4c4c4c4c4c4c4b4b4b4b4b4a4a4a4a4a4949423f3f3e3e3e565d5d5d5d5e5e5e5f5f5f60483c3c3c3c3c3c3c3c3c3c3c3c4c4c4c4c4c4c4c4c4c4c4c4c4c4c4c4c4c4b4a49484745444342413f3e3d3c3b3a383736353534343434343434343434333333333333333333333232323333343435353636363737383839393a3a3a3b3b3c3c3d3d3d3e3e3f3f3f3f3f404040404040404040404040404141414141414c4c4c4c4c4c4c4c4c4c4c4c4c4c4c4c4c4c4c4c4b4b4b4b4b4b4b4b4b4b4b4b4b4b4b4a4a4a4a4a49494949484848413e3d3d3d3d555c5c5c5c5d5d5d5e5e5e5f473b3b3b3b3b3b3b3b3b3b3b3b4b4b4b4b4b4b4b4b4b4b4b4b4b4b4b4b4b4a4948474644434241403e3d3c3b3a38373635343333333333333333333232323232323232323231313131313232333334343535353636373738383939393a3a3b3b3c3c3d3d3d3e3e3e3f3f3f3f3f3f3f3f3f3f3f3f4040404040404040404a4a4a4a4a4a4a4a4a4a4a4a4a4a4a4a4a4a4a4a4a4a4a4a4a4a4a4a4a4a4a4a4a4a49494949494848484848474747403d3c3c3c3c545b5b5b5b5c5c5c5d5d5d5e463a3a3a3a3a3a3a3a3a3a3a3a4a4a4a4a4a4a4a4a4a4a4a4a4a4a4a4a4a4948474644434241403e3d3c3b3a38373635343232323232323232313131313131313131313130303030303031313232333333343435353636373738383839393a3a3b3b3c3c3d3d3d3e3e3e3e3e3e3e3e3e3e3e3f3f3f3f3f3f3f3f3f3f3f49494949494949494949494949494949494949494949494949494949494949494949484848484847474747474646463f3c3b3b3b3b535a5a5a5a5b5b5b5c5c5c5d45393939393939393939393939494949494949494949494949494949494948474645434241403f3d3c3b3a3837363534323131313131313030303030303030303030302f2f2f2f2f2f2f303031313132323333343435353636373738383839393a3a3b3b3c3c3d3d3d3d3d3d3d3d3d3d3e3e3e3e3e3e3e3e3e3e3e3f3f48484848484848484848484848484848484848484848484848484848484848484848474747474746464646464545453e3b3b3a3a3a525959595a5a5a5a5b5b5b5c443838383838383838383838384848484848484848484848484848484848474645444241403f3e3c3b3a39383635343331303030303030302f2f2f2f2f2f2f2f2f2f2f2e2e2e2e2e2e2e2f2f3030313132323233333434353536363737383839393a3a3a3b3b3c3c3c3c3c3c3d3d3d3d3d3d3d3d3d3d3d3d3e3e3e3e3e48484848484848484848484848484848484848484848484848484848484848484747474747464646464645454545453e3a3a3a3a3a5158595959595a5a5a5b5b5b443838383838383838383838384848484848484848484848484848484848474645434241403e3d3c3b3a383736353432313030302f2f2f2f2f2f2f2f2f2f2f2f2e2e2e2e2e2e2e2e2e2e2e2f2f3030313132323333343435353536363737383839393a3a3b3b3c3c3c3c3c3c3c3c3c3c3d3d3d3d3d3d3d3d3d3d3d3e3e47474747474747474747474747474747474747474747474747474747474747474747474646464646464545454545443e3a3a3a3939515858595959595a5a5a5b5b4337373737373737373737373747474747474747474747474747474747474745444342413f3e3d3c3b3938373634333231302f2f2f2f2f2f2f2f2f2f2f2e2e2e2e2e2e2e2e2e2e2e2d2e2e2f2f303031313132323333343435353636373738383939393a3a3b3b3c3c3c3c3c3c3c3c3c3c3c3d3d3d3d3d3d3d3d3d3d3d47474747474747474747474747474747474747474747474747474747474747474747464646464645454545454444443d3a3939393951585858585959595a5a5a5b4337373737373737373737373747474747474747474747474747474747474645444341403f3e3d3b3a39383735343332312f2f2f2f2f2f2f2f2f2e2e2e2e2e2e2e2e2e2e2e2d2d2d2d2d2e2e2f2f3030313132323333343435353536363737383839393a3a3b3b3b3b3b3c3c3c3c3c3c3c3c3c3c3c3d3d3d3d3d3d3d3d47474747474747474747474747474747474747474747474747474747474747474646464646454545454544444444443d39393939395057585858585959595a5a5a4337373737373737373737373747474747474747474747474747474747474645444241403f3e3c3b3a39383635343332302f2f2f2f2f2f2e2e2e2e2e2e2e2e2e2e2e2d2d2d2d2d2d2d2d2e2e2f2f303030313132323333343435353636373738383839393a3a3b3b3b3b3b3b3b3c3c3c3c3c3c3c3c3c3c3c3d3d3d3d3d46464646464646464646464646464646464646464646464646464646464646464646464545454545444444444444433c3939393838505757575858585959595a5a4236363636363636363636363646464646464646464646464646464646464644434241403e3d3c3b3a38373635343231302f2f2f2e2e2e2e2e2e2e2e2e2e2e2d2d2d2d2d2d2d2d2d2d2d2d2e2e2f2f3030313132323333343434353536363737383839393a3a3b3b3b3b3b3b3b3b3b3b3c3c3c3c3c3c3c3c3c3c3c3d3d46464646464646464646464646464646464646464646464646464646464646464645454545454544444444444343433c393838383850575757575858585959595a42363636363636363636363636464646464646464646464646464646464645444342413f3e3d3c3b3938373635333231302f2e2e2e2e2e2e2e2e2e2e2d2d2d2d2d2d2d2d2d2d2d2d2c2d2d2e2e2f2f2f3030313132323333343435353636373738383839393a3a3a3b3b3b3b3b3b3b3b3b3b3b3c3c3c3c3c3c3c3c3c3c46464646464646464646464646464646464646464646464646464646464646464545454545444444444443434343433c38383838384f565657575758585859595941363636363636363636363636464646464646464646464646464646464645444341403f3e3d3b3a3938373534333231302e2e2e2e2e2e2e2e2d2d2d2d2d2d2d2d2d2d2d2d2c2c2c2c2c2d2d2e2e2f2f3030313132323333333434353536363737383839393a3a3a3a3a3b3b3b3b3b3b3b3b3b3b3b3b3c3c3c3c3c3c3c45454545454545454545454545454545454545454545454545454545454545454545454444444444434343434343423b38383837374f565656575757585858595941353535353535353535353535454545454545454545454545454545454545434241403f3d3c3b3a39383635343332302f2e2e2e2e2e2d2d2d2d2d2d2d2d2d2d2d2d2c2c2c2c2c2c2c2c2d2d2e2e2e2f2f3030313132323333343435353636373737383839393a3a3a3a3a3a3a3b3b3b3b3b3b3b3b3b3b3b3b3c3c3c3c45454545454545454545454545454545454545454545454545454545454545454544444444444343434343434242423b38373737374f565656565757575858585941353535353535353535353535454545454545454545454545454545454544434241403e3d3c3b3a38373635343331302f2e2e2d2d2d2d2d2d2d2d2d2d2d2d2c2c2c2c2c2c2c2c2c2c2c2c2d2d2e2e2f2f3030313132323233333434353536363737383839393a3a3a3a3a3a3a3a3a3a3b3b3b3b3b3b3b3b3b3b3b3c3c45454545454545454545454545454545454545454545454545454545454545444444444444434343434342424242423b37373737374e5555565656575757585858403535353535353535353535354545454545454545454545454545454545444342403f3e3d3c3b3938373635333231302f2e2d2d2d2d2d2d2d2d2d2d2c2c2c2c2c2c2c2c2c2c2c2c2b2c2c2d2d2e2e2e2f2f303031313232333334343535363636373738383939393a3a3a3a3a3a3a3a3a3a3a3b3b3b3b3b3b3b3b3b3b44444444444444444444444444444444444444444444444444444444444444444444444343434343424242424241413a37373736364e5555555656565757575858403434343434343434343434344444444444444444444444444444444444444241403f3e3d3b3a3938373634333231302e2d2d2d2d2d2d2d2d2c2c2c2c2c2c2c2c2c2c2c2c2b2b2b2b2b2c2c2d2d2e2e2f2f303031313132323333343435353636373738383939393939393a3a3a3a3a3a3a3a3a3a3a3b3b3b3b3b3b3b44444444444444444444444444444444444444444444444444444444444444444443434343434242424242424141413a37363636364e5455555556565657575757403434343434343434343434344444444444444444444444444444444444434241403f3d3c3b3a39383635343332312f2e2d2d2d2d2d2c2c2c2c2c2c2c2c2c2c2c2c2b2b2b2b2b2b2b2b2c2c2d2d2d2e2e2f2f3030313132323333343435353536363737383839393939393939393a3a3a3a3a3a3a3a3a3a3a3b3b3b3b43434343434343434343434343434343434343434343434343434343434343434343434343424242424241414141413a36363636364d54545555555656565757573f33333333333333333333333343434343434343434343434343434343434342413f3e3d3c3b3a38373635343331302f2e2d2d2c2c2c2c2c2c2c2c2c2c2c2c2b2b2b2b2b2b2b2b2b2b2b2b2c2c2d2d2e2e2f2f3030313131323233333434353536363737383839393939393939393939393a3a3a3a3a3a3a3a3a3a3a3b43434343434343434343434343434343434343434343434343434343434343434343434242424242414141414140403936363535354d54545455555556565656573f33333333333333333333333343434343434343434343434343434343434341403f3e3d3c3a3938373635343231302f2e2d2c2c2c2c2c2c2c2c2c2c2b2b2b2b2b2b2b2b2b2b2b2a2a2b2b2c2c2c2d2d2e2e2f2f303031313232333334343535353636373738383839393939393939393939393a3a3a3a3a3a3a3a3a3a43434343434343434343434343434343434343434343434343434343434343434342424242424141414141404040403936353535354c53545454555555565656563f33333333333333333333333343434343434343434343434343434343434241403f3e3c3b3a3938373634333231302f2d2c2c2c2c2c2c2c2c2b2b2b2b2b2b2b2b2b2b2b2a2a2a2a2a2a2b2b2c2c2d2d2e2e2f2f303030313132323333343435353636373738383838383839393939393939393939393a3a3a3a3a3a3a42424242424242424242424242424242424242424242424242424242424242424242424241414141414140404040403935353535354c53535454545555555656563e32323232323232323232323242424242424242424242424242424242424241403e3d3c3b3a39383635343332312f2e2d2c2c2c2c2c2b2b2b2b2b2b2b2b2b2b2b2a2a2a2a2a2a2a2a2a2b2b2b2c2c2d2d2e2e2f2f3030313132323333343434353536363737383838383838383839393939393939393939393a3a3a3a4242424242424242424242424242424242424242424242424242424242424242424242414141414140404040403f3f3835353434344c53535354545455555555563e323232323232323232323232424242424242424242424242424242424242403f3e3d3c3b3a38373635343332302f2e2d2c2c2b2b2b2b2b2b2b2b2b2b2b2a2a2a2a2a2a2a2a2a2a2a2a2a2b2b2c2c2d2d2e2e2f2f2f30303131323233333434353536363737373838383838383838383839393939393939393939393a424242424242424242424242424242424242424242424242424242424242424242414141414140404040403f3f3f3f3835343434344b52535353545454555555553e323232323232323232323232424242424242424242424242424242424241403f3e3d3b3a3938373635343231302f2e2d2c2b2b2b2b2b2b2b2b2b2a2a2a2a2a2a2a2a2a2a2a2a29292a2a2b2b2b2c2c2d2d2e2e2f2f30303131323233333334343535363637373737383838383838383838383839393939393939393941414141414141414141414141414141414141414141414141414141414141414141414140404040403f3f3f3f3f3f3834343434344b52525353535454545455553d313131313131313131313131414141414141414141414141414141414141403f3d3c3b3a3938373534333231302f2e2c2b2b2b2b2b2b2b2a2a2a2a2a2a2a2a2a2a2a2a2929292929292a2a2b2b2c2c2d2d2e2e2e2f2f3030313132323333343435353636373737373737383838383838383838383838393939393939414141414141414141414141414141414141414141414141414141414141414141414040404040403f3f3f3f3f3e3e3734343333334b52525253535354545454553d3131313131313131313131314141414141414141414141414141414141413f3e3d3c3b3a3937363534333231302e2d2c2b2b2b2b2a2a2a2a2a2a2a2a2a2a2a2a2929292929292929292a2a2a2b2b2c2c2d2d2e2e2f2f303031313232323333343435353636373737373737373738383838383838383838383939393941414141414141414141414141414141414141414141414141414141414141414140404040403f3f3f3f3f3e3e3e3e3733333333334a51525252535353535454543d3131313131313131313131314141414141414141414141414141414141403f3e3d3c3b3938373635343332302f2e2d2c2b2a2a2a2a2a2a2a2a2a2a2a2a292929292929292929292929292a2a2b2b2c2c2d2d2e2e2e2f2f303031313232333334343535363636373737373737373737373838383838383838383838394040404040404040404040404040404040404040404040404040404040404040404040403f3f3f3f3f3e3e3e3e3e3e3733333333324a51515252525353535354543c3030303030303030303030304040404040404040404040404040404040403f3e3c3b3a3938373635333231302f2e2d2c2b2a2a2a2a2a2a2a2a2a29292929292929292929292928282929292a2a2b2b2c2c2d2d2e2e2f2f30303131323232333334343535363636363737373737373737373737383838383838383838404040404040404040404040404040404040404040404040404040404040404040403f3f3f3f3f3e3e3e3e3e3e3d3d3633333232324a51515152525252535353543c30303030303030303030303040404040404040404040404040404040403f3e3d3c3b3a3938373534333231302f2e2c2b2a2a2a2a2a2a2a29292929292929292929292928282828282829292a2a2b2b2c2c2d2d2d2e2e2f2f3030313132323333343435353536363636363637373737373737373737373838383838383f3f3f3f3f3f3f3f3f3f3f3f3f3f3f3f3f3f3f3f3f3f3f3f3f3f3f3f3f3f3f3f3f3f3e3e3e3e3e3d3d3d3d3d3d3c3c3532323131314950505051515151525252533b2f2f2f2f2f2f2f2f2f2f2f2f3f3f3f3f3f3f3f3f3f3f3f3f3f3f3f3f3f3e3d3c3b3a3938373635343331302f2e2d2c2b2a2a2a292929292929292929292929282828282828282828282829292a2a2b2b2c2c2d2d2d2e2e2f2f30303131323232333334343535353536363636363636363636363737373737373737373e3e3e3e3e3e3e3e3e3e3e3e3e3e3e3e3e3e3e3e3e3e3e3e3e3e3e3e3e3e3e3e3e3d3d3d3d3d3d3c3c3c3c3c3b3b3b343131303030484f4f4f4f505050515151513a2e2e2e2e2e2e2e2e2e2e2e2e3e3e3e3e3e3e3e3e3e3e3e3e3e3e3e3e3e3d3c3b3a393837363534333231302f2e2d2c2b2a2929292929292929292929282828282828282828282828282829292a2a2a2b2b2c2c2d2d2d2e2e2f2f303030313132323333343434353535353535353535353536363636363636363636363d3d3d3d3d3d3d3d3d3d3d3d3d3d3d3d3d3d3d3d3d3d3d3d3d3d3d3d3d3d3d3d3c3c3c3c3c3c3b3b3b3b3b3a3a3a3a33302f2f2f2f474e4e4e4e4f4f4f4f505050392d2d2d2d2d2d2d2d2d2d2d2d3d3d3d3d3d3d3d3c3c3c3c3c3c3c3c3c3c3c3b3a393837363534333231302f2e2d2c2b2a29292929292929282828282828282828282828282827272728282829292a2a2a2b2b2c2c2d2d2d2e2e2f2f2f30303131313232333334343434343434343434353535353535353535353535363b3b3b3b3b3b3b3b3b3b3b3b3b3b3b3b3b3b3b3b3b3b3b3b3b3b3b3b3b3b3b3b3b3b3b3b3b3a3a3a3a3a3a39393939322f2e2e2e2e464c4d4d4d4d4e4e4e4f4f4f372b2b2b2b2b2b2b2b2b2b2b2b3b3b3b3b3b3b3b3b3b3b3b3b3b3b3b3b3b3a3a393837363534333231302f2e2d2d2c2b2a2929282828282828282828282828282828282727272727272728282829292a2a2a2b2b2c2c2c2d2d2e2e2e2f2f303030313132323233333333333333333334343434343434343434343535353a3a3a3a3a3a3a3a3a3a3a3a3a3a3a3a3a3a3a3a3a3a3a3a3a3a3a3a3a3a3a3a3a3a3a3a3939393939393838383838312d2d2d2d2d444b4c4c4c4c4d4d4d4d4e4e362a2a2a2a2a2a2a2a2a2a2a2a3a3a3a3a3a3a3a3a3a3a3a3a3a3a3a3a3a39383737363534333231302f2f2e2d2c2b2a29282828282828282828282828282727272727272727272727272728282929292a2a2a2b2b2c2c2c2d2d2d2e2e2f2f2f30303031313232323232323232333333333333333333333334343434343939393939393939393939393939393939393939393939393939393939393939393939383838383838373737373737302c2c2c2c2c434a4a4b4b4b4b4c4c4c4c4d35292929292929292929292929393939393939393939393939393838383838373635353433323130302f2e2d2c2b2b2a2928282828282828282727272727272727272727272727272727272728282929292a2a2a2b2b2b2c2c2c2d2d2e2e2e2f2f2f30303031313131313132323232323232323232323333333333333338383838383838383838383838383838383838383838383838383838383838383837373737373737363636363636362f2b2b2b2b2b4249494a4a4a4a4b4b4b4b4c342828282828282828282828283838383838383838373737373737373737373635343333323130302f2e2d2c2c2b2a29282827272727272727272727272727272727272727272626262727272828282929292a2a2a2b2b2b2c2c2c2d2d2d2e2e2e2f2f2f3030303030313131313131313131313131323232323232323237373737373737373737373737373737373737373737373737373737373737373636363636363635353535353535342e2a2a2a2a2a41484848494949494a4a4a4a33272727272727272727272727373737373736363636363636363636363635353433323231302f2f2e2d2c2c2b2a2a292827272727272727272727272727272727262626262626262626272727282828282929292a2a2a2b2b2b2c2c2c2d2d2d2d2e2e2e2f2f2f2f30303030303030303030303131313131313131313135353535353535353535353535353535353535353535353535353535353535353535353535353434343434343433332c2929292929404747474848484848494949312525252525252525252525253535353535353535353535353535353434343333323131302f2e2e2d2c2c2b2a2a2928282727272727272727272626262626262626262626262626262626272727272828282929292a2a2a2a2b2b2b2c2c2c2c2d2d2d2e2e2e2f2f2f2f2f2f2f2f2f2f2f30303030303030303030303134343434343434343434343434343434343434343434343434343434343434343434343434333333333333333232322b28282827273f46464646474747474848483024242424242424242424242434343434343434343434343333333333333332313130302f2e2e2d2c2c2b2a2a2928282727262626262626262626262626262626262626262626262626262627272727282828292929292a2a2a2a2b2b2b2c2c2c2c2d2d2d2d2e2e2e2e2e2e2e2e2e2f2f2f2f2f2f2f2f2f2f2f30303033333333333333333333333333333333333333333333333333333333333333333333333232323232323232313131312a27272726263e45454545464646464647472f2323232323232323232323233333333333333333333232323232323232313130302f2e2e2d2d2c2c2b2a2a2929282727262626262626262626262626262626262626262626252525262626262727272728282828292929292a2a2a2a2b2b2b2b2c2c2c2c2d2d2d2d2d2d2d2d2e2e2e2e2e2e2e2e2e2e2e2e2f2f2f2f32323232323232323232323232323232323232323232323232323232323232323232313131313131313130303030302926262525253d44444444444545454545462e222222222222222222222222323232323232313131313131313131313030302f2e2e2d2d2c2c2b2b2a2a292928272726262626262626262626262525252525252525252525252525252626262626272727272828282829292929292a2a2a2a2b2b2b2b2c2c2c2c2c2c2c2c2d2d2d2d2d2d2d2d2d2d2d2e2e2e2e2e2e31313131313131313131313131313131313131313131313131313131313131313030303030303030302f2f2f2f2f2f2825242424243c43434343434344444444442d212121212121212121212121313131313030303030303030302f2f2f2f2f2e2e2d2d2c2c2b2b2a2a2929282827272626252525252525252525252525252525252525252525252525252525262626262727272727282828282829292929292a2a2a2a2b2b2b2b2b2b2b2c2c2c2c2c2c2c2c2c2c2c2d2d2d2d2d2d2d2d2f2f2f2f2f2f2f2f2f2f2f2f2f2f2f2f2f2f2f2f2f2f2f2f2f2f2f2f2f2f2f2f2f2f2f2f2f2f2f2e2e2e2e2e2e2e2e2723232323233b41424242424242434343432b1f1f1f1f1f1f1f1f1f1f1f1f2f2f2f2f2f2f2f2f2f2f2f2e2e2e2e2e2e2e2d2d2c2c2b2b2a2a2a292928282727262626252525252525252525252525252525252525252525252525252525252626262626272727272727282828282829292929292a2a2a2a2a2a2b2b2b2b2b2b2b2b2b2b2b2c2c2c2c2c2c2c2c2c2c2e2e2e2e2e2e2e2e2e2e2e2e2e2e2e2e2e2e2e2e2e2e2e2e2e2e2e2e2e2e2e2e2e2e2e2e2e2e2d2d2d2d2d2d2d2d2d2622222222223a40414141414141424242422a1e1e1e1e1e1e1e1e1e1e1e1e2e2e2e2e2e2e2e2e2e2d2d2d2d2d2d2d2c2c2c2b2b2b2a2a29292928282727272626262525252525252525252525252525252525252524242424242425252525252526262626262627272727272728282828282829292929292a2a2a2a2a2a2a2a2a2a2a2b2b2b2b2b2b2b2b2b2b2b2b2d2d2d2d2d2d2d2d2d2d2d2d2d2d2d2d2d2d2d2d2d2d2d2d2d2d2d2d2d2d2d2d2d2d2d2d2c2c2c2c2c2c2c2c2c2c2b252121212121383f3f404040404040414141291d1d1d1d1d1d1d1d1d1d1d1d2d2d2d2d2d2d2d2c2c2c2c2c2c2c2b2b2b2b2b2a2a2a29292928282727272626262525252424242424242424242424242424242424242424242424242424252525252525252626262626262727272727272728282828282829292929292929292929292a2a2a2a2a2a2a2a2a2a2a2b2b2c2c2c2c2c2c2c2c2c2c2c2c2c2c2c2c2c2c2c2c2c2c2c2c2c2c2c2c2c2c2c2c2c2b2b2b2b2b2b2b2b2b2b2b2a2a2a232020202020373e3e3e3e3f3f3f3f3f3f3f281c1c1c1c1c1c1c1c1c1c1c1c2c2c2c2c2b2b2b2b2b2b2b2a2a2a2a2a2a2a29292928282827272727262626252525242424242424242424242424242424242424242424242424242424242424242525252525252525262626262626262727272727272727282828282828282828282929292929292929292929292a2a2a2a2a2a2a2a2a2a2a2a2a2a2a2a2a2a2a2a2a2a2a2a2a2a2a2a2a2a2a2a2a2a2a2a2a2a2929292929292929292929221e1e1e1e1e363c3d3d3d3d3d3d3d3d3e3e261a1a1a1a1a1a1a1a1a1a1a1a2a2a2a2a2a2a292929292929292928282828282727272726262626252525252424242323232323232323232323232323232323232323232323232323232323232324242424242424242425252525252525252626262626262626262727272727272727272727272728282828282828282828282828282828282828282828282828282828282828282828282828282828282828282828272727272727272727201d1d1d1d1d343b3b3b3b3b3b3b3c3c3c3c241818181818181818181818182828282828282828272727272727272727262626262525252525242424242323232322222222222222222222222222222222222222222222222222222222222222232323232323232323232424242424242424242425252525252525252525252526262626262626262626262626262626262626262626262626262626262626262626262626262626262626262626262626262626262626262625252525251f1b1b1b1b1b3239393939393a3a3a3a3a3a221616161616161616161616162626262626262626262625252525252525252524242424242323232323222222222221212121212121212121212121212121212121212121212121212121212121222222222222222222222222232323232323232323232324242424242424242424242424242424242525252525252524242424242424242424242424242424242424242424242424242424242424242424242424242424242424242424241d1919191919313738383838383838383838201414141414141414141414142424242424242424242424242424232323232323232322222222222221212121212120202020202020202020202020202020202020202020202020202020202020212121212121212121212121212122222222222222222222222222222222232323232323232323232323232323232322222222222222222222222222222222222222222222222222222222222222222222222222222222222222222222221b18181818182f36363636363636363636361e121212121212121212121212222222222222222222222222222222222222212121212121212120202020202020201f1f1f1f1f1f1f1f1f1f1f1f1f1f1f1f1f1f1f1f1f1f1f1f1f1f1f1f1f1f1f202020202020202020202020202020202020212121212121212121212121212121212121212121212121212222222221212121212121212121212121212121212121212121212121212121212121212121212120202020202020202020201a16161616162d34343434343434343435351d11111111111111111111111121212121212120202020202020202020202020202020201f1f1f1f1f1f1f1f1f1f1f1e1e1e1e1e1e1e1e1e1e1e1e1e1e1e1e1e1e1e1e1e1e1e1e1e1e1e1e1e1e1e1f1f1f1f1f1f1f1f1f1f1f1f1f1f1f1f1f1f1f1f1f1f1f1f1f1f2020202020202020202020202020202020202020201f1f1f1f1f1f1f1f1f1f1f1f1f1f1f1f1f1f1f1f1f1f1f1f1f1f1f1f1f1f1f1f1f1f1f1f1f1f1f1f1f1f1f1f1f1f1f1814141414142c32333333333333333333331b0f0f0f0f0f0f0f0f0f0f0f0f1f1f1f1f1f1f1f1f1f1f1f1f1f1f1e1e1e1e1e1e1e1e1e1e1e1e1e1e1e1e1e1e1e1e1d1d1d1d1d1d1d1d1d1d1d1d1d1d1d1d1d1d1d1d1d1d1d1d1d1d1d1d1d1d1d1e1e1e1e1e1e1e1e1e1e1e1e1e1e1e1e1e1e1e1e1e1e1e1e1e1e1e1e1e1e1e1e1e1e1e1e1e1e1e1e1e1e1e1e1e1e1e1d1d1d1d1d1d1d1d1d1d1d1d1d1d1d1d1d1d1d1d1d1d1d1d1d1d1d1d1d1d1d1d1d1d1d1d1d1d1d1d1d1d1d1d1d1d1d1613131313132a3131313131313131313131190d0d0d0d0d0d0d0d0d0d0d0d1d1d1d1d1d1d1d1d1d1d1d1d1d1d1d1d1d1d1d1d1d1d1d1d1d1d1d1d1d1d1d1d1d1d1c1c1c1c1c1c1c1c1c1c1c1c1c1c1c1c1c1c1c1c1c1c1c1c1c1c1c1c1c1c1c1d1d1d1d1d1d1d1d1d1d1d1d1d1d1d1d1d1d1d1d1d1d1d1d1d1d1d1d1d1d1d1d1d1d1d1d1d1d1d1d1d1d1d1d1d1d1d";
var G=190, N=570, F=new Float32Array(G*G);
for(var i=0;i<G*G;i++){F[i]=parseInt(H.substr(2*i,2),16)/200;}
var s=12345;
function rnd(){s|=0;s=s+0x6D2B79F5|0;var t=Math.imul(s^s>>>15,1|s);t=t+Math.imul(t^t>>>7,61|t)^t;return((t^t>>>14)>>>0)/4294967296;}
function gauss(){var u=rnd()||1e-9,v=rnd();return Math.sqrt(-2*Math.log(u))*Math.cos(6.283185307*v);}
var cv=document.getElementById('img'); var ctx=cv.getContext('2d');
var im=ctx.createImageData(N,N); var d=im.data;
var SIG=0.18;
var stars=[[122.4, 225.5, 2.4, 2.4, 3.0], [375.9, 300.3, 3.2, 3.2, 1.2], [312.1, 635, 2.6, 2.6, 1.5], [495.3, 663.6, 3.2, 2.2, 1.5], [467.1, 689.5, 1.8, 2.4, 1.2], [529.1, 555, 1.8, 1.8, 0.9], [572.9, 554.3, 1.5, 1.5, 0.8], [174.1, 530.9, 1.3, 1.3, 0.8], [185.5, 554.3, 1.5, 1.5, 0.9], [173.1, 594, 1.7, 1.7, 1.0], [273.4, 521.2, 1.3, 1.3, 0.6], [309.3, 525, 1.5, 1.5, 0.8], [421.2, 580.9, 1.3, 1.3, 0.5], [657.4, 698.4, 1.5, 1.5, 0.9], [671.2, 737.8, 1.6, 4, 1.2], [151, 355.5, 1.8, 1.8, -1.0], [219, 252, 1.5, 1.5, -0.9], [381, 451, 1.5, 3.5, -0.8], [256, 443, 6, 1.6, -0.5], [460.9, 308, 2, 2, -0.9], [621, 292.4, 1.5, 1.5, -0.7]];
var E=[113.01, 113.04, 113.07, 113.09, 113.12, 113.14, 113.17, 113.2, 113.22, 113.25, 113.28, 113.3, 113.33, 113.36, 113.38, 113.41, 113.43, 113.46, 113.49, 113.51, 113.54, 113.57, 113.59, 113.62, 113.64, 113.67, 113.7, 113.72, 113.75, 113.78, 113.8, 113.83, 113.86, 113.88, 113.91, 113.93, 113.96, 113.99, 114.01, 114.04, 114.07, 114.09, 114.12, 114.14, 114.17, 114.2, 114.22, 114.25, 114.28, 114.3, 114.33, 114.36, 114.38, 114.41, 114.43, 114.46, 114.49, 114.51, 114.54, 114.57, 114.59, 114.62, 114.64, 114.67, 114.7, 114.72, 114.75, 114.78, 114.8, 114.83, 114.86, 114.88, 114.91, 114.93, 114.96, 114.99, 115.01, 115.04, 115.07, 115.09, 115.12, 115.14, 115.17, 115.2, 115.22, 115.25, 115.28, 115.3, 115.33, 115.36, 115.38, 115.41, 115.43, 115.46, 115.49, 115.51, 115.54, 115.57, 115.59, 115.62, 115.64, 115.67, 115.7, 115.72, 115.75, 115.78, 115.8, 115.83, 115.86, 115.88, 115.91, 115.93, 115.96, 115.99, 116.02, 116.07, 116.11, 116.16, 116.2, 116.25, 116.3, 116.34, 116.39, 116.43, 116.48, 116.52, 116.57, 116.61, 116.66, 116.7, 116.75, 116.8, 116.84, 116.89, 116.93, 116.98, 117.02, 117.07, 117.11, 117.16, 117.2, 117.25, 117.3, 117.34, 117.39, 117.43, 117.48, 117.52, 117.57, 117.61, 117.66, 117.7, 117.75, 117.8, 117.84, 117.89, 117.93, 117.98, 118.02, 118.07, 118.11, 118.16, 118.2, 118.25, 118.3, 118.34, 118.39, 118.43, 118.48, 118.52, 118.57, 118.61, 118.66, 118.7, 118.75, 118.8, 118.84, 118.89, 118.93, 118.98, 119.02, 119.07, 119.11, 119.16, 119.2, 119.25, 119.3, 119.34, 119.39, 119.43, 119.48, 119.52, 119.57, 119.61, 119.66, 119.7, 119.75, 119.8, 119.84, 119.89, 119.93, 119.98, 120.02, 120.07, 120.11, 120.16, 120.2, 120.25, 120.3, 120.34, 120.39, 120.43, 120.48, 120.52, 120.57, 120.61, 120.66, 120.7, 120.75, 120.8, 120.84, 120.89, 120.93, 120.98, 121.06, 121.17, 121.29, 121.4, 121.52, 121.63, 121.75, 121.86, 121.98, 122.09, 122.2, 122.32, 122.43, 122.55, 122.66, 122.78, 122.89, 123.01, 123.12, 123.24, 123.35, 123.47, 123.58, 123.7, 123.81, 123.93, 124.04, 124.16, 124.27, 124.39, 124.5, 124.61, 124.73, 124.84, 124.96, 125.07, 125.19, 125.3, 125.42, 125.53, 125.65, 125.76, 125.88, 125.99, 126.11, 126.22, 126.34, 126.45, 126.57, 126.68, 126.8, 126.91, 127.02, 127.14, 127.25, 127.37, 127.48, 127.6, 127.71, 127.83, 127.94, 133.02, 133.07, 133.11, 133.15, 133.2, 133.24, 133.28, 133.33, 133.37, 133.41, 133.46, 133.5, 133.54, 133.59, 133.63, 133.67, 133.72, 133.76, 133.8, 133.85, 133.89, 133.93, 133.98, 134.02, 134.07, 134.11, 134.15, 134.2, 134.24, 134.28, 134.33, 134.37, 134.41, 134.46, 134.5, 134.54, 134.59, 134.63, 134.67, 134.72, 134.76, 134.8, 134.85, 134.89, 134.93, 134.98, 135.02, 135.07, 135.11, 135.15, 135.2, 135.24, 135.28, 135.33, 135.37, 135.41, 135.46, 135.5, 135.54, 135.59, 135.63, 135.67, 135.72, 135.76, 135.8, 135.85, 135.89, 135.93, 135.98, 136.04, 136.11, 136.18, 136.25, 136.32, 136.39, 136.46, 136.54, 136.61, 136.68, 136.75, 136.82, 136.89, 136.96, 137.04, 137.11, 137.18, 137.25, 137.32, 137.39, 137.46, 137.54, 137.61, 137.68, 137.75, 137.82, 137.89, 137.96, 138.04, 138.11, 138.18, 138.25, 138.32, 138.39, 138.46, 138.54, 138.61, 138.68, 138.75, 138.82, 138.89, 138.96, 139.04, 139.11, 139.18, 139.25, 139.32, 139.39, 139.46, 139.54, 139.61, 139.68, 139.75, 139.82, 139.89, 139.96, 140.04, 140.11, 140.18, 140.25, 140.32, 140.39, 140.46, 140.54, 140.61, 140.68, 140.75, 140.82, 140.89, 140.96, 141.03, 141.09, 141.14, 141.2, 141.26, 141.31, 141.37, 141.43, 141.49, 141.54, 141.6, 141.66, 141.71, 141.77, 141.83, 141.89, 141.94, 142.0, 142.06, 142.11, 142.17, 142.23, 142.29, 142.34, 142.4, 142.46, 142.51, 142.57, 142.63, 142.69, 142.74, 142.8, 142.86, 142.91, 142.97, 143.03, 143.09, 143.14, 143.2, 143.26, 143.31, 143.37, 143.43, 143.49, 143.54, 143.6, 143.66, 143.71, 143.77, 143.83, 143.89, 143.94, 144.0, 144.06, 144.11, 144.17, 144.23, 144.29, 144.34, 144.4, 144.46, 144.51, 144.57, 144.63, 144.69, 144.74, 144.8, 144.86, 144.91, 144.97, 145.05, 145.14, 145.23, 145.32, 145.41, 145.51, 145.6, 145.69, 145.78, 145.88, 145.97, 146.06, 146.15, 146.24, 146.34, 146.43, 146.52, 146.61, 146.7, 146.8, 146.89, 146.98, 147.07, 147.16, 147.26, 147.35, 147.44, 147.53, 147.62, 147.72, 147.81, 147.9, 147.99, 148.09, 148.18, 148.27, 148.36, 148.45, 148.55, 148.64, 148.73, 148.82, 148.91, 149.01, 149.1, 149.19, 149.28, 149.38, 149.47, 149.56, 149.65, 149.74, 149.84, 149.93, 150.02, 150.11, 150.2, 150.3, 150.39, 150.48, 150.57, 150.66, 150.76, 150.85, 150.94, 151.03, 151.12, 151.22, 151.31, 151.4, 151.49, 151.59, 151.68, 151.77, 151.86, 151.95], BOT=[1.0, 1.0, 1.0, 1.0, 1.0, 1.0, 1.0, 1.0, 1.0, 1.0, 1.0, 1.0, 1.0, 1.0, 1.0, 1.0, 1.0, 1.0, 1.0, 1.0, 1.0, 1.0, 1.0, 1.0, 1.0, 1.0, 1.0, 1.0, 1.0, 1.0, 1.0, 1.0, 1.0, 1.0, 1.0, 1.0, 1.0, 1.0, 1.0, 1.0, 1.0, 1.0, 1.0, 1.0, 1.0, 1.0, 1.0, 1.0, 1.0, 1.0, 1.0, 1.0, 1.0, 1.0, 1.0, 1.0, 1.0, 1.0, 1.0, 1.0, 1.0, 1.0, 1.0, 1.0, 1.0, 1.0, 1.0, 1.0, 1.0, 1.0, 1.0, 1.0, 1.0, 1.0, 1.0, 1.0, 1.0, 1.0, 1.0, 1.0, 1.0, 1.0, 1.0, 1.0, 1.0, 1.0, 1.0, 1.0, 1.0, 1.0, 1.0, 1.0, 1.0, 1.0, 1.0, 1.0, 1.0, 1.0, 1.0, 1.0, 1.0, 1.0, 1.0, 1.0, 1.0, 1.0, 1.0, 1.0, 1.0, 1.0, 1.0, 1.0, 1.0, 1.0, 1.0, 1.0, 1.0, 1.0, 1.0, 1.0, 1.0, 1.0, 1.0, 1.0, 1.0, 1.0, 1.0, 1.0, 1.0, 1.0, 1.0, 1.0, 1.0, 1.0, 1.0, 1.0, 1.0, 1.0, 1.0, 1.0, 1.0, 1.0, 1.0, 1.0, 1.0, 1.0, 1.0, 1.0, 1.0, 1.0, 1.0, 1.0, 1.0, 1.0, 1.0, 1.0, 1.0, 1.0, 1.0, 1.0, 1.0, 1.0, 1.0, 1.0, 1.0, 1.0, 1.0, 1.0, 1.0, 1.0, 1.0, 1.0, 1.0, 1.0, 1.0, 1.0, 1.0, 1.0, 1.0, 1.0, 1.0, 1.0, 1.0, 1.0, 1.0, 1.0, 1.0, 1.0, 1.0, 1.0, 1.0, 1.0, 1.0, 1.0, 1.0, 1.0, 1.0, 1.0, 1.0, 1.0, 1.0, 1.0, 1.0, 1.0, 1.0, 1.0, 1.0, 1.0, 1.0, 1.0, 1.0, 1.0, 1.0, 1.0, 1.0, 1.0, 1.0, 1.0, 1.0, 1.0, 1.0, 1.0, 1.0, 1.0, 1.0, 1.0, 1.0, 1.0, 1.0, 1.0, 1.0, 1.0, 1.0, 1.0, 1.0, 1.0, 1.0, 1.0, 1.0, 1.0, 1.0, 1.0, 1.0, 1.0, 1.0, 1.0, 1.0, 1.0, 1.0, 1.0, 1.0, 1.0, 1.0, 1.0, 1.0, 1.0, 1.0, 1.0, 1.0, 1.0, 1.0, 1.0, 1.0, 1.0, 1.0, 1.0, 1.0, 1.0, 1.0, 1.0, 1.0, 1.0, 1.0, 1.0, 1.0, 1.0, 1.0, 1.0, 1.0, 1.0, 1.0, 1.0, 1.0, 1.0, 1.0, 1.0, 1.0, 1.0, 1.0, 1.0, 1.0, 1.0, 1.0, 1.0, 1.0, 1.0, 1.0, 1.0, 1.0, 1.0, 1.0, 1.0, 1.0, 1.0, 1.0, 1.0, 1.0, 1.0, 1.0, 1.0, 1.0, 1.0, 1.0, 1.0, 1.0, 1.0, 1.0, 1.0, 1.0, 1.0, 1.0, 1.0, 1.0, 1.0, 1.0, 1.0, 1.0, 1.0, 1.0, 1.0, 1.0, 1.0, 1.0, 1.0, 1.0, 1.0, 1.0, 1.0, 1.0, 1.0, 1.0, 1.0, 1.0, 1.0, 1.0, 1.0, 1.0, 1.0, 1.0, 1.0, 1.0, 1.0, 1.0, 1.0, 1.0, 1.0, 1.0, 1.0, 1.0, 1.0, 1.0, 1.0, 1.0, 1.0, 1.0, 1.0, 1.0, 1.0, 1.0, 1.0, 1.0, 1.0, 1.0, 1.0, 1.0, 1.0, 1.0, 1.0, 1.0, 1.0, 1.0, 1.0, 1.0, 1.0, 1.0, 1.0, 1.0, 1.0, 1.0, 1.0, 1.0, 1.0, 1.0, 1.0, 1.0, 1.0, 1.0, 1.0, 1.0, 1.0, 1.0, 1.0, 1.0, 1.0, 1.0, 1.0, 1.0, 1.0, 1.0, 1.0, 1.0, 1.0, 1.0, 1.0, 1.0, 1.0, 1.0, 1.0, 1.0, 1.0, 1.0, 1.0, 1.0, 1.0, 1.0, 1.0, 1.0, 1.0, 1.0, 1.0, 1.0, 1.0, 1.0, 1.0, 1.0, 1.0, 1.0, 1.0, 1.0, 1.0, 1.0, 1.0, 1.0, 1.0, 1.0, 1.0, 1.0, 1.0, 1.0, 1.0, 1.0, 1.0, 1.0, 1.0, 1.0, 1.0, 1.0, 1.0, 1.0, 1.0, 1.0, 1.0, 1.0, 1.0, 1.0, 1.0, 1.0, 1.0, 1.0, 1.0, 1.0, 1.0, 1.0, 1.0, 1.0, 1.0, 1.0, 1.0, 1.0, 1.0, 1.0, 1.0, 1.0, 1.0, 1.0, 1.0, 1.0, 1.0, 1.0, 1.0, 1.0, 1.0, 1.0, 1.0, 1.0, 1.0, 1.0, 1.0, 1.0, 1.0, 1.0, 1.0, 1.0, 1.0, 1.0, 1.0, 1.0, 1.0, 1.0, 1.0, 1.0, 1.0, 1.0, 1.0, 1.0, 1.0, 1.0, 1.0, 1.0, 1.0, 1.0, 1.0, 1.0, 1.0, 0.989, 0.966, 0.943, 0.92, 0.898, 0.875, 0.852, 0.83, 0.807, 0.784, 0.761, 0.739, 0.716, 0.693, 0.67, 0.648, 0.625, 0.602, 0.58, 0.557, 0.534, 0.511, 0.475, 0.425, 0.375, 0.325, 0.275, 0.225, 0.175, 0.125, 0.075, 0.025, -0.025, -0.075, -0.125, -0.175, -0.225, -0.275, -0.325, -0.375, -0.425, -0.475, -0.525, -0.575, -0.625, -0.675], W=[1.499, 1.497, 1.495, 1.493, 1.491, 1.489, 1.487, 1.485, 1.483, 1.481, 1.479, 1.477, 1.475, 1.473, 1.471, 1.469, 1.467, 1.465, 1.463, 1.461, 1.459, 1.457, 1.455, 1.453, 1.451, 1.449, 1.447, 1.445, 1.443, 1.441, 1.439, 1.436, 1.434, 1.432, 1.43, 1.428, 1.426, 1.424, 1.422, 1.42, 1.418, 1.416, 1.414, 1.412, 1.41, 1.408, 1.406, 1.404, 1.402, 1.4, 1.398, 1.396, 1.394, 1.392, 1.39, 1.388, 1.386, 1.384, 1.382, 1.38, 1.378, 1.376, 1.374, 1.372, 1.37, 1.368, 1.366, 1.364, 1.362, 1.36, 1.358, 1.356, 1.354, 1.352, 1.35, 1.348, 1.346, 1.344, 1.342, 1.34, 1.338, 1.336, 1.334, 1.332, 1.33, 1.328, 1.326, 1.324, 1.322, 1.32, 1.318, 1.316, 1.314, 1.311, 1.309, 1.307, 1.305, 1.303, 1.301, 1.299, 1.297, 1.295, 1.293, 1.291, 1.289, 1.287, 1.285, 1.283, 1.281, 1.279, 1.277, 1.275, 1.273, 1.271, 1.269, 1.267, 1.265, 1.263, 1.261, 1.259, 1.257, 1.255, 1.253, 1.251, 1.249, 1.248, 1.246, 1.245, 1.243, 1.241, 1.24, 1.238, 1.237, 1.235, 1.234, 1.232, 1.231, 1.229, 1.227, 1.226, 1.224, 1.223, 1.221, 1.22, 1.218, 1.217, 1.215, 1.214, 1.212, 1.21, 1.209, 1.207, 1.206, 1.204, 1.203, 1.201, 1.2, 1.198, 1.196, 1.195, 1.193, 1.192, 1.19, 1.189, 1.187, 1.186, 1.184, 1.182, 1.181, 1.179, 1.178, 1.176, 1.175, 1.173, 1.172, 1.17, 1.168, 1.167, 1.165, 1.164, 1.162, 1.161, 1.159, 1.158, 1.156, 1.155, 1.153, 1.151, 1.15, 1.148, 1.147, 1.145, 1.144, 1.142, 1.141, 1.139, 1.137, 1.136, 1.134, 1.133, 1.131, 1.13, 1.128, 1.127, 1.125, 1.123, 1.122, 1.12, 1.119, 1.117, 1.116, 1.114, 1.113, 1.111, 1.109, 1.108, 1.106, 1.105, 1.103, 1.102, 1.1, 1.099, 1.097, 1.095, 1.094, 1.092, 1.091, 1.089, 1.088, 1.086, 1.085, 1.083, 1.082, 1.08, 1.078, 1.077, 1.075, 1.074, 1.072, 1.071, 1.069, 1.068, 1.066, 1.064, 1.063, 1.061, 1.06, 1.058, 1.057, 1.055, 1.054, 1.052, 1.05, 1.049, 1.047, 1.046, 1.044, 1.043, 1.041, 1.04, 1.038, 1.036, 1.035, 1.033, 1.032, 1.03, 1.029, 1.027, 1.026, 1.024, 1.023, 1.021, 1.019, 1.018, 1.016, 1.015, 1.013, 1.012, 1.01, 1.009, 1.007, 1.005, 1.004, 1.002, 1.001, 1.0, 1.0, 1.0, 1.0, 1.0, 1.0, 1.0, 1.0, 1.0, 1.0, 1.0, 1.0, 1.0, 1.0, 1.0, 1.0, 1.0, 1.0, 1.0, 1.0, 1.0, 1.0, 1.0, 1.0, 1.0, 1.0, 1.0, 1.0, 1.0, 1.0, 1.0, 1.0, 1.0, 1.0, 1.0, 1.0, 1.0, 1.0, 1.0, 1.0, 1.0, 1.0, 1.0, 1.0, 1.0, 1.0, 1.0, 1.0, 1.0, 1.0, 1.0, 1.0, 1.0, 1.0, 1.0, 1.0, 1.0, 1.0, 1.0, 1.0, 1.0, 1.0, 1.0, 1.0, 1.0, 1.0, 1.0, 1.0, 1.0, 1.0, 1.0, 1.0, 1.0, 1.0, 1.0, 1.0, 1.0, 1.0, 1.0, 1.0, 1.0, 1.0, 1.0, 1.0, 1.0, 1.0, 1.0, 1.0, 1.0, 1.0, 1.0, 1.0, 1.0, 1.0, 1.0, 1.0, 1.0, 1.0, 1.0, 1.0, 1.0, 1.0, 1.0, 1.0, 1.0, 1.0, 1.0, 1.0, 1.0, 1.0, 1.0, 1.0, 1.0, 1.0, 1.0, 1.0, 1.0, 1.0, 1.0, 1.0, 1.0, 1.0, 1.0, 1.0, 1.0, 1.0, 1.0, 1.0, 1.0, 1.0, 1.0, 1.0, 1.0, 1.0, 1.0, 1.0, 1.0, 1.0, 1.0, 1.0, 1.0, 1.0, 1.0, 1.0, 1.0, 1.0, 1.0, 1.0, 1.0, 1.0, 1.0, 1.0, 1.0, 1.0, 1.0, 1.0, 1.0, 1.0, 1.0, 1.0, 1.0, 1.0, 1.0, 1.0, 1.0, 1.0, 1.0, 1.0, 1.0, 1.0, 1.0, 1.0, 1.0, 1.0, 1.0, 1.0, 1.0, 1.0, 1.0, 1.0, 1.0, 1.0, 1.0, 1.0, 1.0, 1.0, 1.0, 1.0, 1.0, 1.0, 1.0, 1.0, 1.0, 1.0, 1.0, 1.0, 1.0, 1.0, 1.0, 1.0, 1.0, 1.0, 1.0, 1.0, 1.0, 1.0, 1.0, 1.0, 1.0, 1.0, 1.0, 1.0, 1.0, 1.0, 1.0, 1.0, 1.0, 1.0, 1.0, 1.0, 1.0, 1.0, 1.0, 1.0, 1.0, 1.0, 1.0, 1.0, 1.0, 1.0, 1.0, 1.0, 1.0, 1.0, 1.0, 1.0, 1.0, 1.0, 1.0, 1.0, 1.0, 1.0, 1.0, 1.0, 1.0, 1.0, 1.0, 1.0, 1.0, 1.0, 1.0, 1.0, 1.0, 1.0, 1.0, 1.0, 1.0, 1.0, 1.0, 1.0, 1.0, 1.0, 1.0, 1.0, 1.0, 1.0, 1.0, 1.0, 1.0, 1.0, 1.0, 1.0, 1.0, 1.0, 1.0, 1.0, 1.0, 1.0, 1.0, 1.0, 1.0, 1.0, 1.0, 1.0, 1.0];
var BL=[[412, 474], [426, 476], [434, 486], [444, 546], [450.6, 617], [455, 688], [451, 698], [420, 700], [383, 701], [376, 691], [351, 662], [338, 620], [330, 578], [347, 538], [373, 504], [389, 480], [400, 474]];
function inblob(px,py){var c=false;for(var i=0,k=BL.length-1;i<BL.length;k=i++){var xi=BL[i][0],yi=BL[i][1],xk=BL[k][0],yk=BL[k][1]; if(((yi>py)!=(yk>py))&&(px<(xk-xi)*(py-yi)/(yk-yi)+xi)) c=!c;} return c;}
function bval(py){var Y=[476,536,590,675,702],V=[0.63,0.58,0.50,0.43,0.38]; if(py<=Y[0])return V[0]; for(var k=0;k<4;k++){if(py<Y[k+1]){return V[k]+(V[k+1]-V[k])*(py-Y[k])/(Y[k+1]-Y[k]);}} return V[4];}
var DX=[96.3,106.3,116,128.3,141.6,158.6,195], DV=[1.9,1.51,1.17,0.67,0.26,0.05,0];
function defi(x){ if(x<=DX[0]) return DV[0]+(DX[0]-x)*0.04; if(x>=DX[6]) return 0; for(var k=0;k<6;k++){ if(x<DX[k+1]){var f=(x-DX[k])/(DX[k+1]-DX[k]); return DV[k]+(DV[k+1]-DV[k])*f;} } return 0; }
var WN=new Float32Array(N*N); for(var i=0;i<N*N;i++){WN[i]=gauss();}
var NZ=new Float32Array(N*N);
for(var y=0;y<N;y++){for(var x=0;x<N;x++){
  var acc=0; for(var dy=-1;dy<=1;dy++){var yy=y+dy; if(yy<0)yy=0; if(yy>=N)yy=N-1; var wy=(dy==0)?2:1; for(var dx=-1;dx<=1;dx++){var xx=x+dx; if(xx<0)xx=0; if(xx>=N)xx=N-1; var wx=(dx==0)?2:1; acc+=wy*wx*WN[yy*N+xx];}}
  NZ[y*N+x]=0.94*WN[y*N+x]+0.34*(acc/16/0.375);
}}
for(var y=0;y<N;y++){
  var gy=(y+0.5)/3-0.5; var y0=Math.floor(gy); var fy=gy-y0; var ya=Math.max(0,Math.min(G-1,y0)), yb=Math.max(0,Math.min(G-1,y0+1));
  for(var x=0;x<N;x++){
    var gx=(x+0.5)/3-0.5; var x0=Math.floor(gx); var fx=gx-x0; var xa=Math.max(0,Math.min(G-1,x0)), xb=Math.max(0,Math.min(G-1,x0+1));
    var m=(F[ya*G+xa]*(1-fx)+F[ya*G+xb]*fx)*(1-fy)+(F[yb*G+xa]*(1-fx)+F[yb*G+xb]*fx)*fy;
    var ax=x+106.5, ay=y+176.5;
    if(ay>470&&ay<705&&ax>330&&ax<456&&inblob(ax,ay)) m=bval(ay);
    var lm=1-defi((ax-E[y])/W[y]+128.3)/0.67;
    var lb=BOT[y];
    if(lb<lm) lm=Math.min(lm, lb);
    var mm = lm<1 ? m*lm - (lm<0? 0.3*(-lm):0) : m;
    var t=mm+SIG*NZ[y*N+x];
    var r=rnd();
    if(r<0.0015){ if(mm>0.5) t=mm-0.75-rnd()*0.3; }
    else if(r<0.003){ t=1; }
    for(var k=0;k<stars.length;k++){var st=stars[k];var dx=(ax-st[0])/st[2],dy=(ay-st[1])/st[3];var q=dx*dx+dy*dy; if(q<4){t+=st[4]*Math.exp(-q*1.2);}}
    t=t<0?0:(t>1?1:t);
    var R=0.0416+0.9584*t/0.365079; R=R>1?1:R;
    var Gc=(t-0.365079)/0.380953; Gc=Gc<0?0:(Gc>1?1:Gc);
    var B=(t-0.746032)/0.253968; B=B<0?0:B;
    var o=(y*N+x)*4; d[o]=R*255; d[o+1]=Gc*255; d[o+2]=B*255; d[o+3]=255;
  }
}
ctx.putImageData(im,0,0);
})();

</script>
</body></html>
